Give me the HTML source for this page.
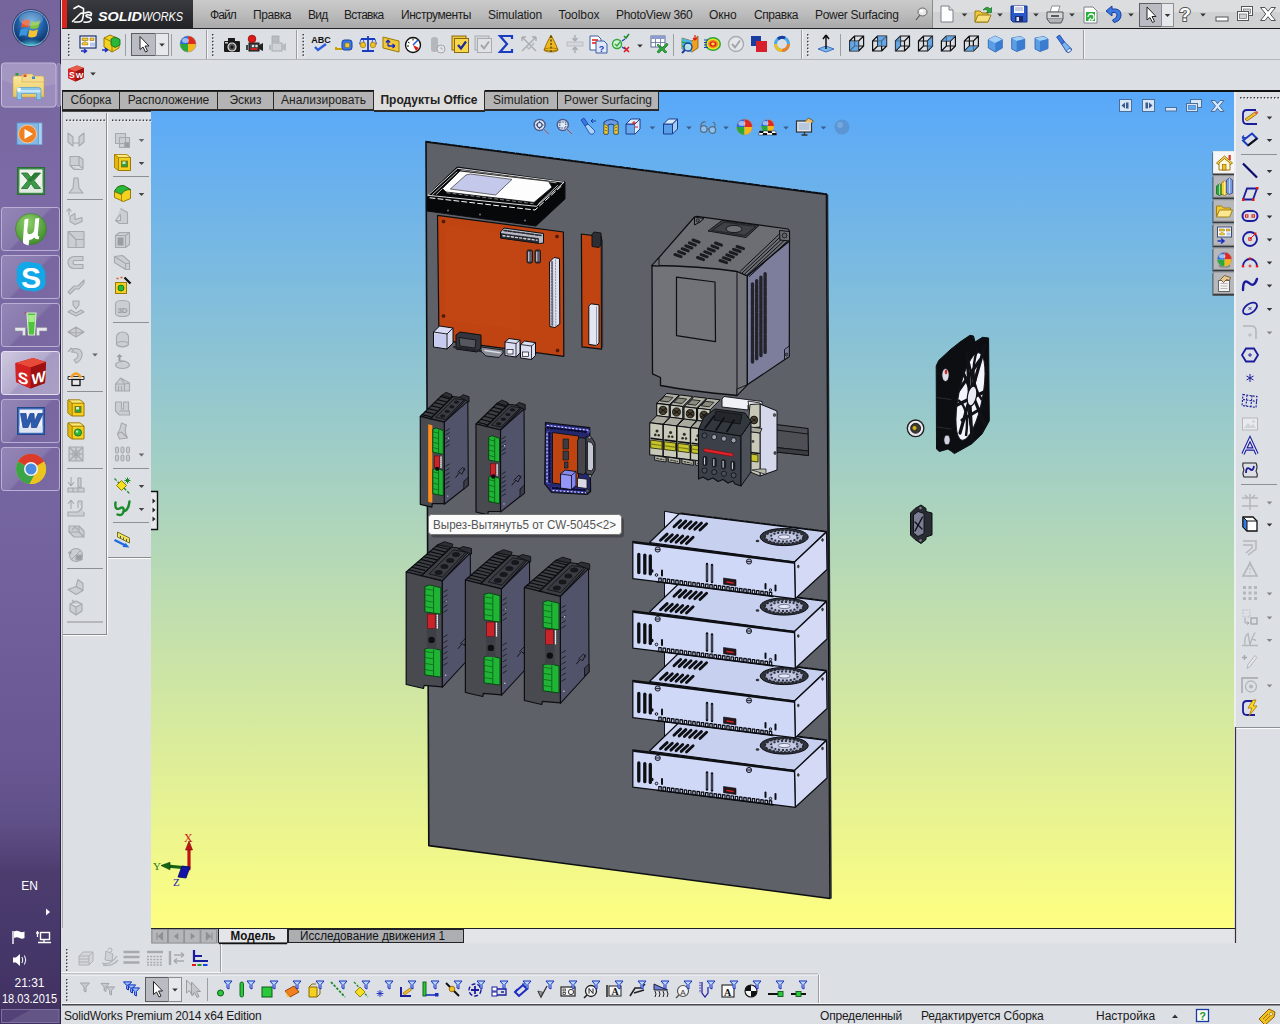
<!DOCTYPE html>
<html lang="ru">
<head>
<meta charset="utf-8">
<title>SolidWorks Premium 2014 x64 Edition</title>
<style>
*{box-sizing:border-box;margin:0;padding:0}
html,body{width:1280px;height:1024px;overflow:hidden;background:#dcdfe4;font-family:"Liberation Sans",sans-serif;font-size:12px;color:#1a1a1a}
.abs{position:absolute}
#taskbar{position:absolute;left:0;top:0;width:61px;height:1024px;background:linear-gradient(180deg,#75659c 0%,#7b6aa6 20%,#7666a2 45%,#705f9a 60%,#675691 75%,#5f4f87 80.5%,#4d3d6f 85%,#46376a 92%,#403160 100%);border-right:1px solid #2c2440}
.tbtn{position:absolute;left:1px;width:59px;height:44px;border:1px solid #b9aed3;border-radius:3px;background:linear-gradient(135deg,#9486b6 0%,#8778ac 48%,#7867a0 52%,#7a69a3 100%)}
.tbtn.act{background:linear-gradient(135deg,#cfc9de 0%,#b5acce 48%,#a59bc2 52%,#aaa0c6 100%);border-color:#e4dff0}
#menubar{position:absolute;left:62px;top:0;width:1218px;height:29px;background:linear-gradient(180deg,#cbcbcb 0%,#bcbcbc 50%,#a9a9a9 100%);border-bottom:1px solid #222}
#menubar span{position:absolute;top:8px;font-size:12px;color:#1c1c1c;white-space:nowrap}
#swlogo{position:absolute;left:62px;top:0;width:131px;height:28px;background:linear-gradient(180deg,#3a3b40 0%,#222327 100%)}
#swlogo i{position:absolute;left:0;top:0;width:5px;height:28px;background:#d8261c}
#tb1{position:absolute;left:62px;top:29px;width:1218px;height:31px;background:#dcdfe4;border-bottom:1px solid #b4b6ba}
#tb2{position:absolute;left:62px;top:60px;width:1218px;height:30px;background:#dcdfe4}
#tabs{position:absolute;left:62px;top:91px;height:22px;width:600px}
.tab{position:absolute;top:0;height:20px;background:#b4b4b4;border:1px solid #2a2a2a;border-bottom-width:2px;border-left:none;font-size:12px;text-align:center;line-height:17px;color:#222;white-space:nowrap}
.tab.act{height:22px;background:#dedede;font-weight:bold;border-top:1px solid #dedede;border-bottom:2px solid #2a2a2a;top:-1px;line-height:19px}
#viewport{position:absolute;left:151px;top:92px;width:1083px;height:837px;background:linear-gradient(180deg,#58a8fa 0%,#ffff80 100%)}
#leftp{position:absolute;left:62px;top:112px;width:89px;height:830px;background:#dcdfe4}
#rightp{position:absolute;left:1234px;top:92px;width:46px;height:852px;background:#dcdfe4;border-left:2px solid #eceef1}
#bottom{position:absolute;left:62px;top:928px;width:1218px;height:96px;background:#dcdfe4}
#status{position:absolute;left:62px;top:1006px;width:1218px;height:18px;background:#dcdfe4;font-size:12px}
#status span{position:absolute;top:3px;white-space:nowrap}
svg{position:absolute;overflow:visible}
.grip-h{position:absolute;height:2px;background-image:repeating-linear-gradient(90deg,#444 0,#444 1px,transparent 1px,transparent 3px)}
.grip-v{position:absolute;width:2px;background-image:repeating-linear-gradient(180deg,#444 0,#444 1px,transparent 1px,transparent 3px)}
.sep-v{position:absolute;width:1px;background:#9a9ca0}
.sep-h{position:absolute;height:1px;background:#8e9094}
.dd{position:absolute;width:0;height:0;border-left:3px solid transparent;border-right:3px solid transparent;border-top:4px solid #333}
</style>
</head>
<body>
<!-- ===== WINDOWS TASKBAR ===== -->
<div id="taskbar">
<svg style="left:0;top:0" width="61" height="1024" viewBox="0 0 61 1024">
<defs>
<radialGradient id="orb" cx="50%" cy="35%" r="65%"><stop offset="0" stop-color="#5fa8e0"/><stop offset="0.55" stop-color="#1f5fa8"/><stop offset="1" stop-color="#0b2c5c"/></radialGradient>
<radialGradient id="orbg" cx="50%" cy="100%" r="60%"><stop offset="0" stop-color="#5fe0f0" stop-opacity="0.9"/><stop offset="1" stop-color="#5fe0f0" stop-opacity="0"/></radialGradient>
<linearGradient id="fold" x1="0" y1="0" x2="0" y2="1"><stop offset="0" stop-color="#fbe9a0"/><stop offset="1" stop-color="#e9c860"/></linearGradient>
<radialGradient id="utg" cx="40%" cy="30%" r="75%"><stop offset="0" stop-color="#8ed06a"/><stop offset="1" stop-color="#3f8a2c"/></radialGradient>
</defs>
<!-- glass sheen -->

<!-- start orb -->
<circle cx="31" cy="28" r="19" fill="#1a2a4a" opacity="0.55"/>
<circle cx="31" cy="28" r="17.500" fill="url(#orb)" stroke="#9cc4e8" stroke-width="0.8"/>
<ellipse cx="31" cy="40" rx="13" ry="6" fill="url(#orbg)"/>
<path d="M22.500,21 Q26,18.500 30,20.500 L28.500,27.500 Q25,25.800 21,28 Z" fill="#e8562a"/>
<path d="M31.500,21 Q35.500,23 40,20.500 L38.500,27.500 Q34.500,30 30,28 Z" fill="#84c23c"/>
<path d="M20.500,29.500 Q24.500,27.500 28,29.300 L26.500,36 Q23,34.300 19,36.500 Z" fill="#3a96dc"/>
<path d="M29.500,29.800 Q33.500,31.800 38,29.300 L36.500,36 Q32.500,38.500 28,36.500 Z" fill="#f6c430"/>
<ellipse cx="31" cy="19" rx="12" ry="7" fill="#fff" opacity="0.22"/>
<!-- explorer button -->
<rect x="57" y="63.500" width="3.500" height="43" rx="2" fill="#8a7bb0" stroke="#b0a5cc" stroke-width="0.8"/>
<rect x="1.500" y="63" width="54.500" height="44" rx="3" fill="#9a8cbc" stroke="#c4bbdc" stroke-width="1"/>
<path d="M2,64 h53.500 v20 Q30,92 2,80 Z" fill="#fff" opacity="0.10"/>
<path d="M13,78 q0,-2 2,-2 h8 l2,2 h17 q2,0 2,2 v17 h-31 Z" fill="url(#fold)" stroke="#c8a040" stroke-width="0.6"/>
<path d="M22,76 q0,-2 2,-2 h8 l2,2 h8 q2,0 2,2 v4 h-22 Z" fill="#f4dc8c" stroke="#c8a040" stroke-width="0.5"/>
<rect x="15.500" y="73" width="3" height="2.500" fill="#2a9a3a"/><rect x="23.500" y="74.500" width="3" height="2.500" fill="#d8502a"/><rect x="32" y="76.500" width="3" height="2.500" fill="#3a8ad0"/>
<path d="M17,90 q0,-2.500 2.500,-2.500 h19 q2.500,0 2.500,2.500 v9.500 h-4.500 v-6 h-15 v6 h-4.500 Z" fill="#8cc8ec" stroke="#5a9ccc" stroke-width="0.7"/>
<path d="M17.500,90 h23 v2.500 h-23 Z" fill="#d2ecfa" opacity="0.8"/>
<circle cx="19" cy="89.500" r="2" fill="#fff" opacity="0.9"/>
<!-- media player -->
<rect x="19.500" y="123" width="22.500" height="21.500" fill="#a8d0f0" stroke="#6ea8dc" stroke-width="0.7"/>
<rect x="17" y="123" width="21.500" height="21.500" fill="#86b8e6" stroke="#5a94cc" stroke-width="0.7"/>
<circle cx="27.500" cy="134" r="9" fill="#f08020" stroke="#f8c89c" stroke-width="1"/>
<path d="M24.500,129 L33,134 L24.500,139 Z" fill="#fff"/>
<!-- excel -->
<rect x="17.500" y="167.500" width="27" height="27" fill="#3f8a4a" stroke="#2c6a36" stroke-width="1"/>
<rect x="19.500" y="169.500" width="23" height="23" fill="#eef4ec"/>
<rect x="19.500" y="186" width="23" height="6.500" fill="#dfe9dd"/>
<path d="M21.500,173 h6 l3.500,4.500 l3.500,-4.500 h6 l-6.500,7.500 l6.500,8 h-6 l-3.500,-5 l-3.500,5 h-6 l6.500,-8 Z" fill="#3c9a48" stroke="#246a2e" stroke-width="0.8"/>
<path d="M27,180.500 l8,-7.500 h5 l-9,9 Z" fill="#1f6a2c" opacity="0.6"/>
</svg>
<div class="tbtn" style="top:207px"></div>
<div class="tbtn" style="top:255px"></div>
<div class="tbtn" style="top:303px"></div>
<div class="tbtn act" style="top:351px"></div>
<div class="tbtn" style="top:399px"></div>
<div class="tbtn" style="top:447px"></div>
<svg style="left:0;top:0" width="61" height="1024" viewBox="0 0 61 1024">
<!-- utorrent -->
<circle cx="31" cy="229" r="15.500" fill="url(#utg)" stroke="#3a7a2a" stroke-width="0.6"/>
<path d="M24.500,219.500 l4,-1 l-1.200,12 q-0.300,4 3,3.600 q3.600,-0.500 4,-5 l1,-10.500 l4,-0.500 l-1.500,16.500 q-0.200,2 1.500,2 l-0.500,2.500 q-3.500,0.800 -4.500,-1.600 q-2,2.300 -5,2.500 l-0.800,5.500 l-4,-1.500 q-2,-0.800 -1.600,-3.500 Z" fill="#fff"/>
<!-- skype -->
<path d="M21,263 q7,-2.500 12,0 q7,-1 10,4.500 q3.500,5 2,11 q2,7 -3,10.500 q-6,4 -12.500,1.500 q-7,1 -10.500,-4 q-3.500,-5 -2,-10.500 q-2,-8 4,-13 Z" fill="#12a8e8"/>
<text x="31" y="288" text-anchor="middle" font-family="Liberation Sans, sans-serif" font-weight="bold" font-size="30" fill="#fff">S</text>
<!-- qip -->
<path d="M27,313 h9 l-1.500,22 h-6 Z" fill="#4ec43a" stroke="#d8e8d0" stroke-width="1.200"/>
<path d="M28,315 h7 l-0.500,7 h-6 Z" fill="#a4ec8c"/>
<path d="M24.500,313.500 l2,-1.500" stroke="#cc3a1a" stroke-width="1"/>
<path d="M15,327.500 h10.500 v8 h-3 v-4.500 h-7.500 Z M47,327.500 h-10.500 v8 h3 v-4.500 h7.500 Z" fill="#e4e6ea" stroke="#8a8c94" stroke-width="0.5"/>
<!-- solidworks cube -->
<path d="M15.500,363 L33,358 L46,362 L45,383 L30.500,388.500 L16,382 Z" fill="#b81818"/>
<path d="M15.500,363 L33,358 L46,362 L30.500,367.500 Z" fill="#e84a3a"/>
<path d="M30.500,367.500 L46,362 L45,383 L30.500,388.500 Z" fill="#9c1212"/>
<path d="M15.500,363 L30.500,367.500 L30.500,388.500 L16,382 Z" fill="#d42222"/>
<text x="23" y="384" text-anchor="middle" font-family="Liberation Sans, sans-serif" font-weight="bold" font-size="16" fill="#fff" transform="skewY(14) translate(0,-6)">S</text>
<text x="38.500" y="383" text-anchor="middle" font-family="Liberation Sans, sans-serif" font-weight="bold" font-size="15" fill="#fff" transform="skewY(-16) translate(0,11)">W</text>
<!-- word -->
<rect x="17.500" y="407.500" width="27" height="27" fill="#3c68b8" stroke="#24488c" stroke-width="1"/>
<rect x="19.500" y="409.500" width="23" height="23" fill="#eef2fa"/>
<rect x="19.500" y="426" width="23" height="6.500" fill="#dde5f4"/>
<path d="M20.500,413.500 h5.500 l1,8 l3,-8 h4 l0.500,8 l3.500,-8 h5 l-6.500,14 h-5 l-0.500,-7 l-3,7 h-5 Z" fill="#2c5cb0" stroke="#1c3c84" stroke-width="0.7"/>
<!-- chrome -->
<circle cx="31" cy="469" r="15" fill="#e8c020"/>
<path d="M31,469 L18,461.500 A15,15 0 0 1 44,461.500 Z" fill="#dc3a2a"/>
<path d="M18,461.500 A15,15 0 0 1 44,461.500 L31,461.500 Z" fill="#dc3a2a"/>
<path d="M31,469 L18,461.500 A15,15 0 0 0 29.500,484 L36,473 Z" fill="#3ca448"/>
<path d="M44,461.500 A15,15 0 0 1 29.500,484 L37.500,469 Z" fill="#ecc420"/>
<circle cx="31" cy="469" r="7" fill="#f4f4f4"/>
<circle cx="31" cy="469" r="5.500" fill="#4a8ae0"/>
<!-- tray -->
<text x="29.500" y="890" text-anchor="middle" font-family="Liberation Sans, sans-serif" font-size="12" fill="#fff">EN</text>
<path d="M46,908.500 l4,3.500 l-4,3.500 Z" fill="#fff"/>
<path d="M13,931 v13" stroke="#fff" stroke-width="1.400"/><path d="M14,931.500 q3,-1.500 5.500,0 q2.500,1.500 5,0 v6.500 q-2.500,1.500 -5,0 q-2.500,-1.500 -5.500,0 Z" fill="#fff"/>
<rect x="40.500" y="932.500" width="9" height="7" fill="none" stroke="#fff" stroke-width="1.400"/><path d="M38,942.500 h13 M44,940 v2.500 M37.500,931 v6 M36,933 h3" stroke="#fff" stroke-width="1.300"/>
<path d="M13,957.500 h3 l4,-3.500 v12 l-4,-3.500 h-3 Z" fill="#fff"/><path d="M22,957 q1.500,3 0,6 M24.500,955.500 q2.500,4.500 0,9" stroke="#fff" stroke-width="1" fill="none"/>
<text x="29.500" y="987" text-anchor="middle" font-family="Liberation Sans, sans-serif" font-size="12" fill="#fff">21:31</text>
<text x="29.500" y="1003" text-anchor="middle" font-family="Liberation Sans, sans-serif" font-size="12" fill="#fff" textLength="55" lengthAdjust="spacingAndGlyphs">18.03.2015</text>
<rect x="1.500" y="1009.500" width="57.500" height="13" fill="#524278" stroke="#8a7cae" stroke-width="0.800"/>
<path d="M30,1010 h28.500 v12 h-50 Z" fill="#fff" opacity="0.10"/>
</svg>

</div>

<!-- ===== MENU BAR ===== -->
<div id="menubar">
<span style="left:148px;letter-spacing:-0.88px">Файл</span>
<span style="left:191px;letter-spacing:-0.42px">Правка</span>
<span style="left:246px;letter-spacing:-0.74px">Вид</span>
<span style="left:282px;letter-spacing:-0.73px">Вставка</span>
<span style="left:339px;letter-spacing:-0.44px">Инструменты</span>
<span style="left:426px;letter-spacing:-0.2px">Simulation</span>
<span style="left:496.5px;letter-spacing:-0.05px">Toolbox</span>
<span style="left:554px;letter-spacing:-0.31px">PhotoView 360</span>
<span style="left:647px;letter-spacing:-0.1px">Окно</span>
<span style="left:692px;letter-spacing:-0.44px">Справка</span>
<span style="left:753px;letter-spacing:-0.3px">Power Surfacing</span>
</div>
<div id="swlogo"><i></i>
<svg style="left:0;top:0" width="131" height="28" viewBox="62 0 131 28">
<path d="M74,8.500 l4.500,-2.500 l5,2.500 M83.500,8.500 v5 M72.500,21.500 l8,-8 q3,-1 3,1 l-1,5 q-1,2.500 -4,2.500 l-4,0 M85,13 q5,-2 6.500,0.500 l-0.500,2 q-4,-1.500 -5,0 q0,1.500 3,2 q3,1 2,3 q-2,2.500 -7,1.500" fill="none" stroke="#fff" stroke-width="1.600" stroke-linejoin="round" stroke-linecap="round"/>
<text x="98" y="21" font-family="Liberation Sans, sans-serif" font-style="italic" font-weight="bold" font-size="13.500" fill="#fff" textLength="44" lengthAdjust="spacingAndGlyphs">SOLID</text>
<text x="142" y="21" font-family="Liberation Sans, sans-serif" font-style="italic" font-size="13.500" fill="#fff" textLength="41" lengthAdjust="spacingAndGlyphs">WORKS</text>
</svg>
</div>

<div id="tb1">
<!--TB1-->
</div>
<div id="tb2">
<svg style="left:-62px;top:-60px" width="1280" height="92" viewBox="0 0 1280 92">
<rect x="932" y="0" width="348" height="28" fill="#d0d1d3"/><rect x="932" y="0" width="348" height="12" fill="#dcdddf"/><path d="M932.5,0.0 V28.0" stroke="#8a8a8a" stroke-width="1"/><g transform="translate(921.0,14.0)" ><path d="M-5,6 L-1,1" stroke="#555" stroke-width="1.200"/><ellipse cx="1.500" cy="-2" rx="4.500" ry="4" fill="#e8e8e8" stroke="#666" stroke-width="1"/><ellipse cx="0.500" cy="-3" rx="2" ry="1.500" fill="#fff"/></g><g transform="translate(947.0,14.0)" ><path d="M-6,-8 H2 L6,-4 V8 H-6 Z" fill="#fdfdfd" stroke="#7a8088" stroke-width="1"/><path d="M2,-8 V-4 H6" fill="#dfe3ea" stroke="#7a8088" stroke-width="1"/></g><path d="M961.7,13.4 h5.600 l-2.800,3.200 Z" fill="#333"/><g transform="translate(983.0,15.0)" ><path d="M-8,-4 h5 l2,2 h6 v9 h-13 Z" fill="#f0c83a" stroke="#9a7a10" stroke-width="1"/><path d="M-8,7 l3,-7 h13 l-3,7 Z" fill="#f8e080" stroke="#9a7a10" stroke-width="1"/><path d="M0,-5 q4,-5 7,-1 l1.500,-1.500 v5 h-5 l1.500,-1.500 q-2,-2.500 -5,-1 Z" fill="#2aa83a" stroke="#0a5a1a" stroke-width="0.600"/></g><path d="M997.2,13.4 h5.600 l-2.800,3.200 Z" fill="#333"/><g transform="translate(1019.0,14.0)" ><path d="M-8,-8 H8 V8 H-6 L-8,6 Z" fill="#2a58c8" stroke="#12308c" stroke-width="1"/><rect x="-5" y="-8" width="10" height="7" fill="#f4f6fa"/><path d="M-4,-6 h8 M-4,-4 h8" stroke="#8a94b0" stroke-width="0.800"/><rect x="-4" y="2" width="8" height="6" fill="#1a2c6c"/><rect x="-2.500" y="3" width="2.500" height="4" fill="#dfe4f0"/></g><path d="M1033.2,13.4 h5.600 l-2.800,3.200 Z" fill="#333"/><g transform="translate(1055.0,15.0)" ><path d="M-5,-3 L-3,-9 H5 L3,-3 Z" fill="#fff" stroke="#777" stroke-width="0.800"/><path d="M-8,-3 H8 V4 H-8 Z" fill="#d4d6da" stroke="#555" stroke-width="1"/><path d="M-8,4 L-5,8 H6 L8,4" fill="#b0b3b8" stroke="#555" stroke-width="1"/><path d="M-4,1 h8" stroke="#333" stroke-width="1.500"/></g><path d="M1069.2,13.4 h5.600 l-2.800,3.200 Z" fill="#333"/><g transform="translate(1090.0,15.0)" ><path d="M-6,-8 H3 L7,-4 V8 H-6 Z" fill="#fff" stroke="#7a8088" stroke-width="1"/><rect x="-4" y="-3" width="9" height="9" fill="#2ab03a"/><path d="M-2,2 a3,3 0 1 1 3,3 M1,7 l-2,-2 l2,-2" fill="none" stroke="#fff" stroke-width="1.300"/></g><g transform="translate(1114.0,14.0)" ><path d="M-8,-3 L-2,-8 V-5 Q7,-6 7,1 Q7,7 0,8.500 L-1.500,6 Q3,4.500 3,1 Q3,-2 -2,-1.500 V2 Z" fill="#3a7ae0" stroke="#1a3ca0" stroke-width="1" stroke-linejoin="round"/></g><path d="M1128.2,13.4 h5.600 l-2.800,3.200 Z" fill="#333"/><rect x="1139.5" y="3.5" width="22.0" height="23.0" fill="#b9bcc2" stroke="#5c5e62" stroke-width="1"/><rect x="1161.5" y="3.5" width="12.0" height="23.0" fill="#e6e8ec" stroke="#8c8e92" stroke-width="1"/><g transform="translate(1150.5,15.0)" ><path d="M-3.500,-8 L-3.500,5 L-0.500,2.500 L2,7.500 L4,6.500 L1.500,1.500 L5.500,1.500 Z" fill="#fff" stroke="#222" stroke-width="1" stroke-linejoin="round"/></g><path d="M1164.7,13.9 h5.600 l-2.800,3.200 Z" fill="#333"/><text x="1185" y="21" text-anchor="middle" font-family="Liberation Sans, sans-serif" font-size="19" font-weight="bold" fill="#fff" stroke="#555" stroke-width="2" paint-order="stroke">?</text><path d="M1200.2,13.4 h5.600 l-2.800,3.200 Z" fill="#333"/><rect x="1216" y="17" width="12" height="4" fill="#fff" stroke="#555" stroke-width="1"/><rect x="1241.500" y="6.500" width="11" height="9" fill="#fff" stroke="#555" stroke-width="1"/><rect x="1243.500" y="9" width="7" height="4.500" fill="#d0d1d3" stroke="#555" stroke-width="0.600"/><rect x="1237.500" y="11.500" width="11" height="9" fill="#fff" stroke="#555" stroke-width="1"/><rect x="1239.500" y="14" width="7" height="4.500" fill="#d0d1d3" stroke="#555" stroke-width="0.600"/><path d="M1260.500,7.500 h4.500 l3,3.800 l3,-3.800 h4.500 l-5.200,6.500 l5.200,6.500 h-4.500 l-3,-3.800 l-3,3.800 h-4.500 l5.200,-6.500 Z" fill="#fff" stroke="#555" stroke-width="1" stroke-linejoin="round"/><rect x="68.0" y="34.0" width="1.500" height="1.500" fill="#3a3a3a"/><rect x="69.2" y="35.2" width="1" height="1" fill="#fff"/><rect x="68.0" y="37.4" width="1.500" height="1.500" fill="#3a3a3a"/><rect x="69.2" y="38.6" width="1" height="1" fill="#fff"/><rect x="68.0" y="40.8" width="1.500" height="1.500" fill="#3a3a3a"/><rect x="69.2" y="42.0" width="1" height="1" fill="#fff"/><rect x="68.0" y="44.2" width="1.500" height="1.500" fill="#3a3a3a"/><rect x="69.2" y="45.4" width="1" height="1" fill="#fff"/><rect x="68.0" y="47.6" width="1.500" height="1.500" fill="#3a3a3a"/><rect x="69.2" y="48.8" width="1" height="1" fill="#fff"/><rect x="68.0" y="51.0" width="1.500" height="1.500" fill="#3a3a3a"/><rect x="69.2" y="52.2" width="1" height="1" fill="#fff"/><rect x="68.0" y="54.4" width="1.500" height="1.500" fill="#3a3a3a"/><rect x="69.2" y="55.6" width="1" height="1" fill="#fff"/><g transform="translate(88.0,44.0)" ><rect x="-8" y="-8" width="16" height="12" fill="#fff" stroke="#1a2c6c" stroke-width="1.200"/><rect x="-6" y="-6" width="6" height="2.500" fill="#f0c83a" stroke="#8a6a10" stroke-width="0.600"/><rect x="2" y="-6" width="4" height="2.500" fill="#f0c83a" stroke="#8a6a10" stroke-width="0.600"/><path d="M-6,1 h6 v-2 l-3,-1.500 l-3,1.500 Z" fill="#f0c83a" stroke="#8a6a10" stroke-width="0.500"/><rect x="2" y="-1.500" width="5" height="4" fill="#b8c8e8"/><path d="M-7,7 h5 M-4,5 l2.500,2 l-2.500,2" stroke="#1a2cc0" stroke-width="1.400" fill="none"/></g><g transform="translate(111.0,44.0)" ><path d="M-7,-6 L-1,-9 L8,-5 V4 L1,8 L-7,3 Z" fill="#f4d020" stroke="#9a7a00" stroke-width="1"/><path d="M-7,-6 L1,-2 L8,-5 M1,-2 V8" fill="none" stroke="#9a7a00" stroke-width="1"/><path d="M0,-5 L4,-7 L9,-4.500 V1 L4,3.500 L0,1 Z" fill="#2ab83a" stroke="#0a6a1a" stroke-width="0.800"/><path d="M-9,6 h5 M-6,4 l2.500,2 l-2.500,2" stroke="#1a2cc0" stroke-width="1.400" fill="none"/></g><path d="M125.5,34.0 V56.0" stroke="#9c9ea2" stroke-width="1"/><rect x="131.5" y="33.5" width="24.0" height="22.0" fill="#b9bcc2" stroke="#5c5e62" stroke-width="1"/><rect x="155.5" y="33.5" width="13.0" height="22.0" fill="#e6e8ec" stroke="#8c8e92" stroke-width="1"/><g transform="translate(143.5,44.5)" ><path d="M-3.500,-8 L-3.500,5 L-0.500,2.500 L2,7.500 L4,6.500 L1.500,1.500 L5.500,1.500 Z" fill="#fff" stroke="#222" stroke-width="1" stroke-linejoin="round"/></g><path d="M159.2,43.4 h5.600 l-2.800,3.200 Z" fill="#333"/><path d="M171.5,34.0 V56.0" stroke="#9c9ea2" stroke-width="1"/><g transform="translate(188.0,44.0)" ><circle r="8" fill="#e8e8e8"/><path d="M0,0 L0,-8 A8,8 0 0 1 8,0 Z" fill="#e02a20"/><path d="M0,0 L8,0 A8,8 0 0 1 0,8 Z" fill="#f4b81c"/><path d="M0,0 L0,8 A8,8 0 0 1 -8,0 Z" fill="#2aa83a"/><path d="M0,0 L-8,0 A8,8 0 0 1 0,-8 Z" fill="#2a6ae0"/><circle r="8" fill="none" stroke="#888" stroke-width="0.500"/><ellipse cx="-2.500" cy="-3.500" rx="3.500" ry="2.500" fill="#fff" opacity="0.550"/></g><path d="M206.5,30.0 V59.0" stroke="#9a9ca0" stroke-width="1"/><path d="M207.5,30.0 V59.0" stroke="#f4f4f6" stroke-width="1"/><rect x="212.0" y="34.0" width="1.500" height="1.500" fill="#3a3a3a"/><rect x="213.2" y="35.2" width="1" height="1" fill="#fff"/><rect x="212.0" y="37.4" width="1.500" height="1.500" fill="#3a3a3a"/><rect x="213.2" y="38.6" width="1" height="1" fill="#fff"/><rect x="212.0" y="40.8" width="1.500" height="1.500" fill="#3a3a3a"/><rect x="213.2" y="42.0" width="1" height="1" fill="#fff"/><rect x="212.0" y="44.2" width="1.500" height="1.500" fill="#3a3a3a"/><rect x="213.2" y="45.4" width="1" height="1" fill="#fff"/><rect x="212.0" y="47.6" width="1.500" height="1.500" fill="#3a3a3a"/><rect x="213.2" y="48.8" width="1" height="1" fill="#fff"/><rect x="212.0" y="51.0" width="1.500" height="1.500" fill="#3a3a3a"/><rect x="213.2" y="52.2" width="1" height="1" fill="#fff"/><rect x="212.0" y="54.4" width="1.500" height="1.500" fill="#3a3a3a"/><rect x="213.2" y="55.6" width="1" height="1" fill="#fff"/><g transform="translate(232.0,45.0)" ><rect x="-8" y="-4" width="16" height="11" rx="1" fill="#1a1a1a"/><rect x="-4" y="-7" width="7" height="3" fill="#1a1a1a"/><circle cx="0" cy="2" r="4" fill="#555" stroke="#ddd" stroke-width="1.200"/><circle cx="0" cy="2" r="1.500" fill="#111"/><rect x="-7" y="-3" width="3" height="1.500" fill="#ccc"/></g><g transform="translate(255.0,45.0)" ><rect x="-6" y="-2" width="10" height="8" fill="#444" stroke="#111" stroke-width="1"/><path d="M4,0 l4,-2 v8 l-4,-2 Z" fill="#222"/><circle cx="-3" cy="-6" r="3.800" fill="#e01818" stroke="#8a0a0a" stroke-width="0.800"/><rect x="-4" y="3" width="6" height="2" fill="#e01818"/><path d="M-8,0 v5" stroke="#111" stroke-width="1.500"/><circle cx="-2" cy="1" r="1.300" fill="#ddd"/><circle cx="1.500" cy="1" r="1.300" fill="#ddd"/></g><g transform="translate(278.0,45.0)" ><rect x="-6" y="-2" width="10" height="8" fill="#cfd2d6" stroke="#a8abb0" stroke-width="1"/><path d="M4,0 l4,-2 v8 l-4,-2 Z" fill="#b8bbc0"/><rect x="-6" y="-9" width="7" height="6" fill="#b8bbc0" stroke="#a8abb0" stroke-width="0.800"/><path d="M-8,0 v5" stroke="#a8abb0" stroke-width="1.500"/></g><path d="M296.5,30.0 V59.0" stroke="#9a9ca0" stroke-width="1"/><path d="M297.5,30.0 V59.0" stroke="#f4f4f6" stroke-width="1"/><rect x="302.5" y="34.0" width="1.500" height="1.500" fill="#3a3a3a"/><rect x="303.7" y="35.2" width="1" height="1" fill="#fff"/><rect x="302.5" y="37.4" width="1.500" height="1.500" fill="#3a3a3a"/><rect x="303.7" y="38.6" width="1" height="1" fill="#fff"/><rect x="302.5" y="40.8" width="1.500" height="1.500" fill="#3a3a3a"/><rect x="303.7" y="42.0" width="1" height="1" fill="#fff"/><rect x="302.5" y="44.2" width="1.500" height="1.500" fill="#3a3a3a"/><rect x="303.7" y="45.4" width="1" height="1" fill="#fff"/><rect x="302.5" y="47.6" width="1.500" height="1.500" fill="#3a3a3a"/><rect x="303.7" y="48.8" width="1" height="1" fill="#fff"/><rect x="302.5" y="51.0" width="1.500" height="1.500" fill="#3a3a3a"/><rect x="303.7" y="52.2" width="1" height="1" fill="#fff"/><rect x="302.5" y="54.4" width="1.500" height="1.500" fill="#3a3a3a"/><rect x="303.7" y="55.6" width="1" height="1" fill="#fff"/><g transform="translate(321.0,44.0)" ><text x="0" y="-1" text-anchor="middle" font-family="Liberation Sans, sans-serif" font-size="9" font-weight="bold" fill="#111">ABC</text><path d="M-6,3 l3,3 l8,-6" fill="none" stroke="#2a5ce0" stroke-width="2.400"/></g><g transform="translate(345.0,45.0)" ><rect x="-3" y="-5" width="10" height="10" rx="2.500" fill="#3a7ae0" stroke="#1a3ca0" stroke-width="1"/><rect x="0" y="-2" width="4.500" height="4.500" rx="1" fill="#f0c83a" stroke="#8a6a10" stroke-width="0.600"/><path d="M-3,4 h-6 v-2" stroke="#c8a000" stroke-width="2" fill="none"/></g><g transform="translate(368.0,44.0)" ><path d="M0,-8 V7 M-7,-5 H7 M-6,7 H6" stroke="#1a3cc0" stroke-width="1.800" fill="none"/><path d="M-7,-5 l-1.500,5 h5 l-1.500,-5 M5,-5 l-1.500,5 h5 l-1.500,-5" fill="none" stroke="#1a3cc0" stroke-width="0.800"/><circle cx="-5" cy="1" r="2.800" fill="#f0c020" stroke="#8a6a10" stroke-width="0.600"/><circle cx="5" cy="1" r="2.800" fill="#f0c020" stroke="#8a6a10" stroke-width="0.600"/></g><g transform="translate(391.0,44.0)" ><path d="M-8,-7 L8,-3 V8 L-8,4 Z" fill="#f0c83a" stroke="#9a7a00" stroke-width="1"/><path d="M-3,2 V-4 M-3,-4 l-2,2.500 M-3,-4 l2,2.500 M-3,2 H4 M4,2 l-2.500,-2 M4,2 l-2.500,2" stroke="#1a2cc0" stroke-width="1.300" fill="none"/></g><g transform="translate(413.0,45.0)" ><circle r="7.500" fill="#fff" stroke="#111" stroke-width="1.400"/><path d="M0,0 L5,-5" stroke="#2a5ce0" stroke-width="1.600"/><path d="M0,0 L6,3 L3,6 Z" fill="#e01818"/><path d="M-5,-3 l1.500,1 M0,-6.500 v2 M-6,1 h2" stroke="#111" stroke-width="1"/></g><g transform="translate(437.0,45.0)" ><rect x="-6" y="-8" width="7" height="15" rx="3" fill="#b4b7bc"/><circle cx="4" cy="4" r="4" fill="#e4e6ea" stroke="#a2a5aa" stroke-width="1"/><path d="M4,2 v2 h2" stroke="#a2a5aa" stroke-width="0.800" fill="none"/></g><g transform="translate(460.0,44.0)" ><rect x="-8" y="-8" width="14" height="14" fill="#f0c83a" stroke="#8a6a10" stroke-width="1"/><rect x="-5.500" y="-5.500" width="14" height="14" fill="#f8d84a" stroke="#8a6a10" stroke-width="1"/><path d="M-2,1 l3,3.500 l5,-7" fill="none" stroke="#1a2c9c" stroke-width="2.200"/></g><g transform="translate(483.0,44.0)" ><rect x="-8" y="-8" width="14" height="14" fill="#d4d6da" stroke="#a8abb0" stroke-width="1"/><rect x="-5.500" y="-5.500" width="14" height="14" fill="#e0e2e6" stroke="#a8abb0" stroke-width="1"/><path d="M-2,1 l3,3.500 l5,-7" fill="none" stroke="#a2a5aa" stroke-width="2"/></g><g transform="translate(506.0,44.0)" ><path d="M6,-5 V-8 H-6 L1,0 L-6,8 H6 V5" fill="none" stroke="#1a3cc0" stroke-width="2.200" stroke-linejoin="miter"/></g><g transform="translate(529.0,44.0)" ><path d="M-7,-7 L7,7 M7,-7 L-7,7 M-7,-7 h4 M-7,-7 v4 M7,-7 h-4 M7,-7 v4" stroke="#a8abb0" stroke-width="1.400" fill="none"/><path d="M-3,2 l3,3 l5,-6" stroke="#b4b7bc" stroke-width="1.500" fill="none"/></g><g transform="translate(551.0,44.0)" ><path d="M0,-9 Q5,0 7,6 Q0,9 -7,6 Q-5,0 0,-9 Z" fill="#f0b820" stroke="#9a7000" stroke-width="1"/><path d="M0,-8 V8" stroke="#111" stroke-width="1" stroke-dasharray="2 1.500"/><ellipse cx="0" cy="6" rx="7" ry="2" fill="none" stroke="#9a7000" stroke-width="0.800"/></g><g transform="translate(575.0,44.0)" ><rect x="-8" y="-2" width="16" height="4" fill="#d4d6da" stroke="#b4b7bc" stroke-width="0.800"/><path d="M0,-9 V-3 M0,-3 l-2.500,-3 M0,-3 l2.500,-3 M0,9 V3 M0,3 l-2.500,3 M0,3 l2.500,3" stroke="#a8abb0" stroke-width="1.400" fill="none"/></g><g transform="translate(598.0,44.0)" ><path d="M-8,-8 H0 L3,-5 V6 H-8 Z" fill="#fff" stroke="#3a5ca0" stroke-width="1"/><path d="M-2,-3 H6 L9,0 V9 H-2 Z" fill="#dfe8f8" stroke="#3a5ca0" stroke-width="1"/><path d="M-6,-4 h6 M-6,-1 h4" stroke="#e01818" stroke-width="1.600"/><text x="3.500" y="7.500" text-anchor="middle" font-family="Liberation Sans, sans-serif" font-size="9" font-weight="bold" fill="#1a3cc0">?</text></g><g transform="translate(621.0,44.0)" ><circle cx="-4" cy="0" r="4.500" fill="#d8f0d8" stroke="#2aa83a" stroke-width="1.400"/><path d="M-6,0 l2,2 l3,-4" stroke="#2aa83a" stroke-width="1.400" fill="none"/><path d="M3,-8 l2,2 l3,-4" stroke="#1a8a2a" stroke-width="1.600" fill="none"/><path d="M3,3 l5,5 M8,3 l-5,5" stroke="#e01818" stroke-width="1.600"/><path d="M1,-3 l3,-2 M1,3 l3,2" stroke="#1a3cc0" stroke-width="1.200"/></g><path d="M637.2,44.4 h5.600 l-2.800,3.200 Z" fill="#333"/><g transform="translate(659.0,44.0)" ><rect x="-8" y="-8" width="14" height="11" fill="#fff" stroke="#5a6c9c" stroke-width="1"/><rect x="-8" y="-8" width="14" height="3" fill="#8a9cd0"/><path d="M-8,-1.500 h14 M-3.500,-5 v8 M1.500,-5 v8" stroke="#5a6c9c" stroke-width="0.800"/><path d="M-1,0 l4,4 l5,-5 l1,2 l-4,4 l3,3 l-2,1 l-3,-3 l-3,3 l-2,-1 l3,-4 l-3,-3 Z" fill="#2aa83a" stroke="#0a6a1a" stroke-width="0.600"/></g><path d="M673.5,34.0 V56.0" stroke="#9c9ea2" stroke-width="1"/><g transform="translate(690.0,44.0)" ><path d="M-8,-6 L2,-3 L8,-8 V4 L2,8 L-8,5 Z" fill="#f0a020" stroke="#8a5a10" stroke-width="0.800"/><path d="M-8,-6 L2,-3 V8 L-8,5 Z" fill="#48b8e8"/><path d="M-8,-2 L2,1 M-8,2 L2,5" stroke="#2aa83a" stroke-width="1.500"/><circle cx="-2" cy="3" r="4" fill="#e8f4fc" fill-opacity="0.700" stroke="#1a3ca0" stroke-width="1.300"/><path d="M-5,6 l-3,3" stroke="#1a3ca0" stroke-width="2"/><path d="M5,-9 v5 M5,-4 l-2,-2 M5,-4 l2,-2" stroke="#e01818" stroke-width="1.200" fill="none"/></g><g transform="translate(713.0,44.0)" ><ellipse rx="8" ry="7" fill="#2aa83a"/><ellipse rx="6.500" ry="5.500" fill="#f0e020"/><ellipse rx="5" ry="4" fill="#f08020"/><ellipse rx="3.300" ry="2.600" fill="#e01818"/><ellipse rx="1.800" ry="1.400" fill="#f8e040"/><path d="M-9,-4 h4 M-9,-1.500 h3 M-9,1 h3 M-9,3.500 h4" stroke="#1a3cc0" stroke-width="1"/></g><g transform="translate(736.0,44.0)" ><circle r="7.500" fill="#e4e6ea" stroke="#a8abb0" stroke-width="1.400"/><path d="M-4,0 l3,3.500 l5,-7" fill="none" stroke="#a2a5aa" stroke-width="2"/></g><g transform="translate(759.0,44.0)" ><rect x="-8" y="-8" width="10" height="10" fill="#1a3ca0"/><rect x="-3" y="-3" width="11" height="11" fill="#d8202a"/></g><g transform="translate(782.0,44.0)" ><circle r="6.500" fill="none" stroke="#48a8e8" stroke-width="3"/><path d="M-6.500,0 A6.500,6.500 0 0 0 0,6.500" fill="none" stroke="#f0c020" stroke-width="3"/><path d="M0,6.500 A6.500,6.500 0 0 0 6.500,0" fill="none" stroke="#f08020" stroke-width="3"/><path d="M-4,-5 A6.500,6.500 0 0 1 3,-6" fill="none" stroke="#1a3ca0" stroke-width="3"/></g><path d="M801.5,30.0 V59.0" stroke="#9a9ca0" stroke-width="1"/><path d="M802.5,30.0 V59.0" stroke="#f4f4f6" stroke-width="1"/><rect x="807.0" y="34.0" width="1.500" height="1.500" fill="#3a3a3a"/><rect x="808.2" y="35.2" width="1" height="1" fill="#fff"/><rect x="807.0" y="37.4" width="1.500" height="1.500" fill="#3a3a3a"/><rect x="808.2" y="38.6" width="1" height="1" fill="#fff"/><rect x="807.0" y="40.8" width="1.500" height="1.500" fill="#3a3a3a"/><rect x="808.2" y="42.0" width="1" height="1" fill="#fff"/><rect x="807.0" y="44.2" width="1.500" height="1.500" fill="#3a3a3a"/><rect x="808.2" y="45.4" width="1" height="1" fill="#fff"/><rect x="807.0" y="47.6" width="1.500" height="1.500" fill="#3a3a3a"/><rect x="808.2" y="48.8" width="1" height="1" fill="#fff"/><rect x="807.0" y="51.0" width="1.500" height="1.500" fill="#3a3a3a"/><rect x="808.2" y="52.2" width="1" height="1" fill="#fff"/><rect x="807.0" y="54.4" width="1.500" height="1.500" fill="#3a3a3a"/><rect x="808.2" y="55.6" width="1" height="1" fill="#fff"/><g transform="translate(826.0,44.0)" ><path d="M-8,5 L0,2 L8,5 L0,8 Z" fill="#7ab8f0" stroke="#2a5cb0" stroke-width="0.800"/><path d="M0,5 V-8 M0,-9 l-3,4 M0,-9 l3,4" stroke="#111" stroke-width="1.500" fill="none"/></g><path d="M840.5,34.0 V56.0" stroke="#9c9ea2" stroke-width="1"/><g transform="translate(856.6,44.0)" ><path d="M-7,-3 h9 v10 h-9 Z" fill="#4a96e0"/><path d="M-7,-3 h9 v10 h-9 Z M-2,-8 h9 v10 h-9 Z M-7,-3 l5,-5 M2,-3 l5,-5 M-7,7 l5,-5 M2,7 l5,-5" fill="none" stroke="#111" stroke-width="1.200"/><path d="M-7,-3 h9 v10 h-9 Z" fill="#7ab8f0" opacity="0.55"/></g><g transform="translate(879.6,44.0)" ><path d="M-2,-8 h9 v10 h-9 Z" fill="#4a96e0"/><path d="M-7,-3 h9 v10 h-9 Z M-2,-8 h9 v10 h-9 Z M-7,-3 l5,-5 M2,-3 l5,-5 M-7,7 l5,-5 M2,7 l5,-5" fill="none" stroke="#111" stroke-width="1.200"/><path d="M-2,-8 h9 v10 h-9 Z" fill="#7ab8f0" opacity="0.55"/></g><g transform="translate(902.5,44.0)" ><path d="M-7,-3 l5,-5 v10 l-5,5 Z" fill="#4a96e0"/><path d="M-7,-3 h9 v10 h-9 Z M-2,-8 h9 v10 h-9 Z M-7,-3 l5,-5 M2,-3 l5,-5 M-7,7 l5,-5 M2,7 l5,-5" fill="none" stroke="#111" stroke-width="1.200"/><path d="M-7,-3 l5,-5 v10 l-5,5 Z" fill="#7ab8f0" opacity="0.55"/></g><g transform="translate(925.5,44.0)" ><path d="M2,-3 l5,-5 v10 l-5,5 Z" fill="#4a96e0"/><path d="M-7,-3 h9 v10 h-9 Z M-2,-8 h9 v10 h-9 Z M-7,-3 l5,-5 M2,-3 l5,-5 M-7,7 l5,-5 M2,7 l5,-5" fill="none" stroke="#111" stroke-width="1.200"/><path d="M2,-3 l5,-5 v10 l-5,5 Z" fill="#7ab8f0" opacity="0.55"/></g><g transform="translate(948.4,44.0)" ><path d="M-7,-3 l5,-5 h9 l-5,5 Z" fill="#4a96e0"/><path d="M-7,-3 h9 v10 h-9 Z M-2,-8 h9 v10 h-9 Z M-7,-3 l5,-5 M2,-3 l5,-5 M-7,7 l5,-5 M2,7 l5,-5" fill="none" stroke="#111" stroke-width="1.200"/><path d="M-7,-3 l5,-5 h9 l-5,5 Z" fill="#7ab8f0" opacity="0.55"/></g><g transform="translate(971.4,44.0)" ><path d="M-7,7 l5,-5 h9 l-5,5 Z" fill="#4a96e0"/><path d="M-7,-3 h9 v10 h-9 Z M-2,-8 h9 v10 h-9 Z M-7,-3 l5,-5 M2,-3 l5,-5 M-7,7 l5,-5 M2,7 l5,-5" fill="none" stroke="#111" stroke-width="1.200"/><path d="M-7,7 l5,-5 h9 l-5,5 Z" fill="#7ab8f0" opacity="0.55"/></g><g transform="translate(995.3,44.0)" ><path d="M0,-8 L7,-4.500 V4 L0,8 L-7,4 V-4.500 Z" fill="#5a9ee4" stroke="#2a5cb0" stroke-width="0.800"/><path d="M0,-8 L7,-4.500 L0,-1 L-7,-4.500 Z" fill="#a4d0f8"/><path d="M0,-1 V8 L7,4 V-4.500 Z" fill="#3a7cd0"/></g><g transform="translate(1017.7,44.0)" ><path d="M-6,-6 L3,-7.500 L7,-5 V4.500 L-1,7.500 L-6,5 Z" fill="#5a9ee4" stroke="#2a5cb0" stroke-width="0.800"/><path d="M-6,-6 L3,-7.500 L7,-5 L-1,-3 Z" fill="#a4d0f8"/><path d="M-1,-3 L7,-5 V4.500 L-1,7.500 Z" fill="#3a7cd0"/></g><g transform="translate(1041.0,44.0)" ><path d="M-6,-6 L3,-7.500 L7,-5 V4.500 L-1,7.500 L-6,5 Z" fill="#5a9ee4" stroke="#2a5cb0" stroke-width="0.800"/><path d="M-6,-6 L3,-7.500 L7,-5 L-1,-3 Z" fill="#a4d0f8"/><path d="M-1,-3 L7,-5 V4.500 L-1,7.500 Z" fill="#3a7cd0"/></g><g transform="translate(1063.6,44.0)" ><path d="M-7,-7 L-4,-9 L1,-2 L-2,0 Z" fill="#3a7ae0" stroke="#1a3ca0" stroke-width="0.800"/><path d="M-2,0 L1,-2 L8,5 Q7,9 3,8 Z" fill="#7ab8f0" stroke="#1a3ca0" stroke-width="0.800"/><ellipse cx="5.500" cy="6.500" rx="2.500" ry="1.600" transform="rotate(-35 5.500 6.500)" fill="#d8ecfc" stroke="#1a3ca0" stroke-width="0.600"/></g><path d="M1083.5,30.0 V59.0" stroke="#9a9ca0" stroke-width="1"/><path d="M1084.5,30.0 V59.0" stroke="#f4f4f6" stroke-width="1"/><g transform="translate(76.0,73.0)" ><path d="M-8,-4 L1,-7.500 L8,-5 L7.500,5 L-0.500,8.500 L-8,5 Z" fill="#b81818"/><path d="M-8,-4 L1,-7.500 L8,-5 L-0.500,-1.500 Z" fill="#e85a4a"/><path d="M-0.500,-1.500 L8,-5 L7.500,5 L-0.500,8.500 Z" fill="#9c1212"/><path d="M-8,-4 L-0.500,-1.500 L-0.500,8.500 L-8,5 Z" fill="#d42222"/><text x="-4.300" y="5" text-anchor="middle" font-family="Liberation Sans, sans-serif" font-size="8.500" font-weight="bold" fill="#fff">S</text><text x="3.600" y="4.500" text-anchor="middle" font-family="Liberation Sans, sans-serif" font-size="8" font-weight="bold" fill="#fff">W</text></g><path d="M90.2,72.4 h5.600 l-2.800,3.200 Z" fill="#333"/><path d="M62.0,91.0 H1280.0" stroke="#111" stroke-width="2"/><path d="M932.0,28.5 H1280.0" stroke="#1a1a1a" stroke-width="1"/>
</svg>

</div>

<!-- ===== VIEWPORT ===== -->
<div id="viewport">
<svg style="left:-151px;top:-92px" width="1280" height="1024" viewBox="0 0 1280 1024" shape-rendering="geometricPrecision">
<polygon points="426.0,142.0 826.5,194.5 830.0,898.5 428.8,845.6" fill="#5e6167" stroke="#0c0e12" stroke-width="1.6" stroke-linejoin="round" />
<polyline points="426.0,141.4 826.5,193.8" fill="none" stroke="#0c0e12" stroke-width="1.2" stroke-linejoin="round" stroke-linecap="round" stroke-dasharray="5 1.5"/>
<polyline points="827.5,195.0 831.0,898.0" fill="none" stroke="#22252b" stroke-width="1.5" stroke-linejoin="round" stroke-linecap="round" />
<polygon points="427.0,196.0 457.0,167.0 565.0,182.0 565.0,199.0 536.0,226.0 427.0,211.0" fill="#07080a" stroke="#0c0e12" stroke-width="1" stroke-linejoin="round" />
<polyline points="428.0,195.3 457.5,168.3 564.0,182.3 536.5,206.3 428.0,195.3" fill="none" stroke="#f4f4f4" stroke-width="0.9" stroke-linejoin="round" stroke-linecap="round" />
<polyline points="432.5,194.6 457.0,172.0" fill="none" stroke="#e8e8e8" stroke-width="0.8" stroke-linejoin="round" stroke-linecap="round" />
<polyline points="436.5,194.2 459.0,173.0" fill="none" stroke="#e8e8e8" stroke-width="0.8" stroke-linejoin="round" stroke-linecap="round" />
<polyline points="557.5,185.5 538.5,203.8" fill="none" stroke="#e8e8e8" stroke-width="0.8" stroke-linejoin="round" stroke-linecap="round" />
<polyline points="461.0,170.2 556.0,182.8" fill="none" stroke="#e8e8e8" stroke-width="0.7" stroke-linejoin="round" stroke-linecap="round" />
<polygon points="442.5,188.5 460.0,171.0 548.5,181.3 552.0,187.2 534.0,202.4 446.0,192.0" fill="#fdfdfd" stroke="#111" stroke-width="0.8" stroke-linejoin="round" />
<polygon points="450.3,189.0 466.0,175.0 470.5,174.0 512.0,179.4 495.7,195.0" fill="#c4c8ea" stroke="#333" stroke-width="0.7" stroke-linejoin="round" />
<polyline points="430.0,197.8 535.0,210.0 562.0,185.5" fill="none" stroke="#fff" stroke-width="1" stroke-linejoin="round" stroke-linecap="round" stroke-dasharray="5 3"/>
<polyline points="447.0,192.8 533.0,203.6" fill="none" stroke="#999" stroke-width="0.8" stroke-linejoin="round" stroke-linecap="round" stroke-dasharray="3 3"/>
<ellipse cx="448.0" cy="210.5" rx="1.0" ry="1.0" fill="#777" stroke="none" stroke-width="1" />
<ellipse cx="480.0" cy="214.5" rx="1.0" ry="1.0" fill="#777" stroke="none" stroke-width="1" />
<ellipse cx="525.0" cy="220.5" rx="1.0" ry="1.0" fill="#777" stroke="none" stroke-width="1" />
<polygon points="437.5,215.3 563.4,232.0 563.8,356.3 439.0,339.8" fill="#bf4412" stroke="#0c0e12" stroke-width="1.2" stroke-linejoin="round" />
<polygon points="445.0,225.0 520.0,235.0 520.0,330.0 445.0,320.0" fill="#c44814" stroke="none" stroke-width="0" stroke-linejoin="round" opacity="0.5"/>
<ellipse cx="443.5" cy="221.5" rx="1.5" ry="1.5" fill="#5a1e08" stroke="#2a0e04" stroke-width="0.6" />
<ellipse cx="557.0" cy="236.5" rx="1.5" ry="1.5" fill="#5a1e08" stroke="#2a0e04" stroke-width="0.6" />
<ellipse cx="443.5" cy="316.0" rx="1.5" ry="1.5" fill="#5a1e08" stroke="#2a0e04" stroke-width="0.6" />
<ellipse cx="557.5" cy="350.5" rx="1.5" ry="1.5" fill="#5a1e08" stroke="#2a0e04" stroke-width="0.6" />
<polygon points="500.5,232.0 504.0,228.0 543.5,233.5 543.5,243.0 539.5,243.5 500.5,238.0" fill="#b9bbc8" stroke="#0c0e12" stroke-width="1" stroke-linejoin="round" />
<polygon points="501.0,233.5 538.5,238.5 538.5,243.0 501.0,238.0" fill="#2a2b30" stroke="#0c0e12" stroke-width="0.6" stroke-linejoin="round" />
<polyline points="503.0,235.7 537.0,240.2" fill="none" stroke="#cfd2e0" stroke-width="1.4" stroke-linejoin="round" stroke-linecap="round" stroke-dasharray="2 2.2"/>
<polyline points="504.0,230.5 541.0,235.5" fill="none" stroke="#2a2b30" stroke-width="1.6" stroke-linejoin="round" stroke-linecap="round" stroke-dasharray="3 1.5"/>
<rect x="527.0" y="250.0" width="5.5" height="13.0" fill="#3a3c46" stroke="#0c0e12" stroke-width="0.8" rx="1.5" />
<polyline points="528.8,252.0 528.8,261.0" fill="none" stroke="#d4d6e2" stroke-width="1.2" stroke-linejoin="round" stroke-linecap="round" />
<polyline points="531.0,252.0 531.0,261.0" fill="none" stroke="#8a8ca0" stroke-width="0.8" stroke-linejoin="round" stroke-linecap="round" />
<rect x="535.0" y="250.0" width="5.5" height="13.0" fill="#3a3c46" stroke="#0c0e12" stroke-width="0.8" rx="1.5" />
<polyline points="536.8,252.0 536.8,261.0" fill="none" stroke="#d4d6e2" stroke-width="1.2" stroke-linejoin="round" stroke-linecap="round" />
<polyline points="539.0,252.0 539.0,261.0" fill="none" stroke="#8a8ca0" stroke-width="0.8" stroke-linejoin="round" stroke-linecap="round" />
<polygon points="549.5,262.0 554.0,257.5 559.5,258.5 559.8,324.0 555.0,327.5 549.8,326.5" fill="#dfe2ee" stroke="#0c0e12" stroke-width="1" stroke-linejoin="round" />
<polyline points="552.0,262.0 552.3,325.0" fill="none" stroke="#6a6c80" stroke-width="2.2" stroke-linejoin="round" stroke-linecap="round" stroke-dasharray="1.2 1.6"/>
<polyline points="555.5,260.0 555.8,326.0" fill="none" stroke="#8e90a4" stroke-width="1" stroke-linejoin="round" stroke-linecap="round" stroke-dasharray="1.2 1.6"/>
<polygon points="433.5,332.0 439.5,326.0 453.0,328.0 453.0,343.0 447.0,349.0 433.5,347.0" fill="#d9dbf2" stroke="#0c0e12" stroke-width="1" stroke-linejoin="round" />
<polyline points="433.5,332.0 447.0,334.0 453.0,328.0" fill="none" stroke="#0c0e12" stroke-width="0.9" stroke-linejoin="round" stroke-linecap="round" />
<polyline points="447.0,334.0 447.0,349.0" fill="none" stroke="#0c0e12" stroke-width="0.9" stroke-linejoin="round" stroke-linecap="round" />
<polygon points="434.5,333.5 446.0,335.2 446.0,347.8 434.5,346.0" fill="#c8cbf0" stroke="none" stroke-width="1" stroke-linejoin="round" />
<polygon points="456.0,335.0 460.0,332.0 481.0,335.0 481.0,348.0 477.0,352.0 456.0,349.0" fill="#33353c" stroke="#0c0e12" stroke-width="1" stroke-linejoin="round" />
<polygon points="459.0,337.5 476.0,340.0 475.0,348.0 460.0,346.0" fill="#55575f" stroke="#0c0e12" stroke-width="0.8" stroke-linejoin="round" />
<polyline points="454.0,347.0 483.0,351.5" fill="none" stroke="#222429" stroke-width="2" stroke-linejoin="round" stroke-linecap="round" />
<polygon points="481.0,347.0 503.0,350.0 503.0,353.0 499.0,357.5 486.0,356.0 481.0,351.0" fill="#8b8d96" stroke="#0c0e12" stroke-width="0.9" stroke-linejoin="round" />
<polyline points="485.0,350.5 500.0,352.8" fill="none" stroke="#dadce6" stroke-width="1.4" stroke-linejoin="round" stroke-linecap="round" />
<polygon points="505.0,342.0 509.0,338.5 520.0,340.1 520.0,353.0 516.0,357.0 505.0,355.5" fill="#dcdef2" stroke="#0c0e12" stroke-width="1" stroke-linejoin="round" />
<polyline points="505.0,342.0 516.0,343.5 520.0,340.1" fill="none" stroke="#0c0e12" stroke-width="0.8" stroke-linejoin="round" stroke-linecap="round" />
<polyline points="516.0,343.5 516.0,357.0" fill="none" stroke="#0c0e12" stroke-width="0.8" stroke-linejoin="round" stroke-linecap="round" />
<rect x="507.0" y="349.5" width="6.0" height="4.5" fill="#f4f5fb" stroke="#0c0e12" stroke-width="0.7" rx="0" />
<polygon points="520.5,344.5 524.5,341.0 535.5,342.6 535.5,355.5 531.5,359.5 520.5,358.0" fill="#dcdef2" stroke="#0c0e12" stroke-width="1" stroke-linejoin="round" />
<polyline points="520.5,344.5 531.5,346.0 535.5,342.6" fill="none" stroke="#0c0e12" stroke-width="0.8" stroke-linejoin="round" stroke-linecap="round" />
<polyline points="531.5,346.0 531.5,359.5" fill="none" stroke="#0c0e12" stroke-width="0.8" stroke-linejoin="round" stroke-linecap="round" />
<rect x="522.5" y="352.0" width="6.0" height="4.5" fill="#f4f5fb" stroke="#0c0e12" stroke-width="0.7" rx="0" />
<polygon points="581.4,234.0 601.3,236.7 601.5,349.2 582.0,346.9" fill="#bf4412" stroke="#0c0e12" stroke-width="1.2" stroke-linejoin="round" />
<polyline points="602.3,240.0 602.5,347.0" fill="none" stroke="#33353a" stroke-width="1.4" stroke-linejoin="round" stroke-linecap="round" />
<polygon points="592.0,234.5 594.0,232.0 601.0,233.0 601.0,245.0 599.0,247.5 592.0,246.5" fill="#2c2e33" stroke="#0c0e12" stroke-width="0.9" stroke-linejoin="round" />
<polygon points="588.8,306.0 591.0,303.8 599.0,304.9 599.0,343.0 596.5,345.5 588.8,344.4" fill="#e3e5f2" stroke="#0c0e12" stroke-width="1" stroke-linejoin="round" />
<polyline points="596.5,307.0 596.5,345.0" fill="none" stroke="#8b8da0" stroke-width="0.9" stroke-linejoin="round" stroke-linecap="round" />
<polygon points="652.0,265.5 694.5,217.0 697.0,216.3 788.0,229.0 789.5,231.0 789.5,241.0 747.5,276.0 736.5,271.5" fill="#6c6e74" stroke="#0c0e12" stroke-width="1.2" stroke-linejoin="round" />
<polygon points="747.2,276.0 789.5,241.0 789.3,356.5 747.2,384.8" fill="#7c7e9c" stroke="#0c0e12" stroke-width="1.2" stroke-linejoin="round" />
<path d="M652,265.500 Q700,266 737,271.500 L747.200,276 L747.200,384.800 L737,395.500 Q690,391 660.500,385.500 L660.500,377.500 L652.500,373.800 Z" fill="#717378" stroke="#0c0e12" stroke-width="1.3" stroke-linejoin="round"/>
<polyline points="737.0,271.5 737.0,395.5" fill="none" stroke="#0c0e12" stroke-width="1" stroke-linejoin="round" stroke-linecap="round" />
<polygon points="676.5,277.2 715.0,282.0 715.5,341.6 676.5,335.6" fill="none" stroke="#0c0e12" stroke-width="1.2" stroke-linejoin="round" />
<polyline points="740.0,271.5 781.5,232.0" fill="none" stroke="#0c0e12" stroke-width="1" stroke-linejoin="round" stroke-linecap="round" />
<polyline points="742.3,272.8 783.6,233.7" fill="none" stroke="#0c0e12" stroke-width="1" stroke-linejoin="round" stroke-linecap="round" />
<polyline points="744.6,274.0 785.6,235.4" fill="none" stroke="#0c0e12" stroke-width="1" stroke-linejoin="round" stroke-linecap="round" />
<polyline points="746.9,275.3 787.7,237.2" fill="none" stroke="#0c0e12" stroke-width="1" stroke-linejoin="round" stroke-linecap="round" />
<polyline points="749.2,276.6 789.8,238.9" fill="none" stroke="#0c0e12" stroke-width="1" stroke-linejoin="round" stroke-linecap="round" />
<polygon points="694.5,217.0 694.5,225.0 700.0,222.0 704.0,218.5" fill="#6c6e74" stroke="#0c0e12" stroke-width="1" stroke-linejoin="round" />
<ellipse cx="697.8" cy="220.5" rx="1.6" ry="1.6" fill="#5a5c62" stroke="#0c0e12" stroke-width="0.7" />
<polygon points="779.5,230.5 789.5,231.5 789.5,241.0 780.0,240.0" fill="#6c6e74" stroke="#0c0e12" stroke-width="1" stroke-linejoin="round" />
<ellipse cx="784.5" cy="235.5" rx="2.4" ry="2.4" fill="#62646a" stroke="#0c0e12" stroke-width="0.8" />
<polygon points="652.0,265.5 659.0,258.0 659.0,266.0" fill="#6c6e74" stroke="#0c0e12" stroke-width="0.9" stroke-linejoin="round" />
<polygon points="789.3,346.0 784.5,349.5 784.5,359.5 789.3,356.5" fill="#7c7e9c" stroke="#0c0e12" stroke-width="0.9" stroke-linejoin="round" />
<ellipse cx="786.5" cy="354.5" rx="1.2" ry="1.6" fill="#55576a" stroke="#0c0e12" stroke-width="0.6" />
<polygon points="737.0,395.5 737.0,389.0 747.2,384.8" fill="#717378" stroke="#0c0e12" stroke-width="0.9" stroke-linejoin="round" />
<polygon points="708.0,231.0 722.0,220.5 759.0,225.5 746.0,237.5" fill="#3f4147" stroke="#0c0e12" stroke-width="0.9" stroke-linejoin="round" />
<ellipse cx="734.0" cy="229.0" rx="8.0" ry="3.6" fill="#6c6e74" stroke="#0c0e12" stroke-width="0.8" />
<polyline points="712.0,230.5 724.0,222.0 756.0,226.5 745.0,235.5 712.0,230.5" fill="none" stroke="#25272c" stroke-width="1.4" stroke-linejoin="round" stroke-linecap="round" stroke-dasharray="2 1.4"/>
<polyline points="675.0,254.5 681.0,256.7" fill="none" stroke="#1b1c20" stroke-width="3.0" stroke-linejoin="round" stroke-linecap="round" />
<polyline points="678.6,251.6 684.6,253.8" fill="none" stroke="#1b1c20" stroke-width="3.0" stroke-linejoin="round" stroke-linecap="round" />
<polyline points="682.2,248.7 688.2,250.9" fill="none" stroke="#1b1c20" stroke-width="3.0" stroke-linejoin="round" stroke-linecap="round" />
<polyline points="685.8,245.8 691.8,248.0" fill="none" stroke="#1b1c20" stroke-width="3.0" stroke-linejoin="round" stroke-linecap="round" />
<polyline points="689.4,242.9 695.4,245.1" fill="none" stroke="#1b1c20" stroke-width="3.0" stroke-linejoin="round" stroke-linecap="round" />
<polyline points="693.0,240.0 699.0,242.2" fill="none" stroke="#1b1c20" stroke-width="3.0" stroke-linejoin="round" stroke-linecap="round" />
<polyline points="697.5,257.5 703.5,259.7" fill="none" stroke="#1b1c20" stroke-width="3.0" stroke-linejoin="round" stroke-linecap="round" />
<polyline points="701.1,254.6 707.1,256.8" fill="none" stroke="#1b1c20" stroke-width="3.0" stroke-linejoin="round" stroke-linecap="round" />
<polyline points="704.7,251.7 710.7,253.9" fill="none" stroke="#1b1c20" stroke-width="3.0" stroke-linejoin="round" stroke-linecap="round" />
<polyline points="708.3,248.8 714.3,251.0" fill="none" stroke="#1b1c20" stroke-width="3.0" stroke-linejoin="round" stroke-linecap="round" />
<polyline points="711.9,245.9 717.9,248.1" fill="none" stroke="#1b1c20" stroke-width="3.0" stroke-linejoin="round" stroke-linecap="round" />
<polyline points="715.5,243.0 721.5,245.2" fill="none" stroke="#1b1c20" stroke-width="3.0" stroke-linejoin="round" stroke-linecap="round" />
<polyline points="720.0,260.5 726.5,262.7" fill="none" stroke="#1b1c20" stroke-width="3.0" stroke-linejoin="round" stroke-linecap="round" />
<polyline points="723.4,257.7 729.9,259.9" fill="none" stroke="#1b1c20" stroke-width="3.0" stroke-linejoin="round" stroke-linecap="round" />
<polyline points="726.8,254.9 733.3,257.1" fill="none" stroke="#1b1c20" stroke-width="3.0" stroke-linejoin="round" stroke-linecap="round" />
<polyline points="730.2,252.1 736.7,254.3" fill="none" stroke="#1b1c20" stroke-width="3.0" stroke-linejoin="round" stroke-linecap="round" />
<polyline points="733.6,249.3 740.1,251.5" fill="none" stroke="#1b1c20" stroke-width="3.0" stroke-linejoin="round" stroke-linecap="round" />
<polyline points="737.0,246.5 743.5,248.7" fill="none" stroke="#1b1c20" stroke-width="3.0" stroke-linejoin="round" stroke-linecap="round" />
<polyline points="752.5,362.0 752.5,284.0" fill="none" stroke="#22232b" stroke-width="3.4" stroke-linejoin="round" stroke-linecap="round" stroke-dasharray="8 1.4"/>
<polyline points="756.7,358.8 756.7,280.6" fill="none" stroke="#22232b" stroke-width="3.4" stroke-linejoin="round" stroke-linecap="round" stroke-dasharray="8 1.4"/>
<polyline points="760.9,355.6 760.9,277.2" fill="none" stroke="#22232b" stroke-width="3.4" stroke-linejoin="round" stroke-linecap="round" stroke-dasharray="8 1.4"/>
<polyline points="765.1,352.4 765.1,273.8" fill="none" stroke="#22232b" stroke-width="3.4" stroke-linejoin="round" stroke-linecap="round" stroke-dasharray="8 1.4"/>
<polygon points="776.0,424.5 808.0,428.5 808.5,455.5 776.0,452.0" fill="#4d4f54" stroke="#0c0e12" stroke-width="1.1" stroke-linejoin="round" />
<polyline points="776.0,430.0 808.0,434.0" fill="none" stroke="#0c0e12" stroke-width="0.9" stroke-linejoin="round" stroke-linecap="round" />
<polyline points="776.0,447.5 808.5,451.0" fill="none" stroke="#0c0e12" stroke-width="0.9" stroke-linejoin="round" stroke-linecap="round" />
<polygon points="776.0,447.5 808.5,451.0 808.5,455.5 776.0,452.0" fill="#3a3c41" stroke="#0c0e12" stroke-width="0.8" stroke-linejoin="round" />
<polygon points="656.7,403.4 666.7,393.4 679.2,394.9 669.2,404.9" fill="#b2b2a4" stroke="#0c0e12" stroke-width="1" stroke-linejoin="round" />
<polygon points="660.2,400.9 664.7,396.4 673.0,397.4 668.5,401.9" fill="#8a8a7e" stroke="#0c0e12" stroke-width="0.8" stroke-linejoin="round" />
<polygon points="656.7,403.4 669.2,404.9 669.2,417.2 656.7,415.7" fill="#c9c9b9" stroke="#0c0e12" stroke-width="1.1" stroke-linejoin="round" />
<ellipse cx="663.0" cy="410.4" rx="3.9" ry="4.1" fill="#4e4434" stroke="#0c0e12" stroke-width="0.9" />
<polyline points="660.4,408.4 665.8,412.4" fill="none" stroke="#1c1812" stroke-width="1.1" stroke-linejoin="round" stroke-linecap="round" />
<polyline points="665.8,408.4 660.4,412.4" fill="none" stroke="#1c1812" stroke-width="1.1" stroke-linejoin="round" stroke-linecap="round" />
<polygon points="649.7,422.7 656.7,415.7 669.2,417.2 663.0,424.4" fill="#a9a99d" stroke="#0c0e12" stroke-width="1" stroke-linejoin="round" />
<polygon points="649.7,422.7 663.0,424.4 663.0,456.4 649.7,454.8" fill="#c9c9b9" stroke="#0c0e12" stroke-width="1.1" stroke-linejoin="round" />
<ellipse cx="657.0" cy="430.9" rx="1.5" ry="1.5" fill="#2a2a26" stroke="none" stroke-width="1" />
<ellipse cx="655.3" cy="434.9" rx="1.3" ry="1.3" fill="#2a2a26" stroke="none" stroke-width="1" />
<ellipse cx="658.7" cy="435.2" rx="1.2" ry="1.2" fill="#2a2a26" stroke="none" stroke-width="1" />
<polyline points="651.2,438.4 662.0,439.8" fill="none" stroke="#0c0e12" stroke-width="1.6" stroke-linejoin="round" stroke-linecap="round" />
<polygon points="650.7,440.1 662.0,441.5 662.0,449.3 650.7,447.9" fill="#c6c62c" stroke="#2e2e08" stroke-width="0.9" stroke-linejoin="round" />
<polyline points="651.7,444.2 661.0,445.5" fill="none" stroke="#7e7e14" stroke-width="1.2" stroke-linejoin="round" stroke-linecap="round" />
<polygon points="654.7,455.6 666.0,457.4 666.0,462.0 654.7,460.2" fill="#b9b9aa" stroke="#0c0e12" stroke-width="0.9" stroke-linejoin="round" />
<polyline points="656.7,458.4 664.0,459.8" fill="none" stroke="#3a3a30" stroke-width="1.2" stroke-linejoin="round" stroke-linecap="round" stroke-dasharray="2 1.5"/>
<polygon points="670.3,405.0 680.3,395.0 692.8,396.5 682.8,406.5" fill="#b2b2a4" stroke="#0c0e12" stroke-width="1" stroke-linejoin="round" />
<polygon points="673.8,402.5 678.3,398.0 686.6,399.0 682.1,403.5" fill="#8a8a7e" stroke="#0c0e12" stroke-width="0.8" stroke-linejoin="round" />
<polygon points="670.3,405.0 682.8,406.5 682.8,418.8 670.3,417.3" fill="#c9c9b9" stroke="#0c0e12" stroke-width="1.1" stroke-linejoin="round" />
<ellipse cx="676.5" cy="412.0" rx="3.9" ry="4.1" fill="#4e4434" stroke="#0c0e12" stroke-width="0.9" />
<polyline points="673.9,410.0 679.3,414.0" fill="none" stroke="#1c1812" stroke-width="1.1" stroke-linejoin="round" stroke-linecap="round" />
<polyline points="679.3,410.0 673.9,414.0" fill="none" stroke="#1c1812" stroke-width="1.1" stroke-linejoin="round" stroke-linecap="round" />
<polygon points="663.3,424.3 670.3,417.3 682.8,418.8 676.6,426.0" fill="#a9a99d" stroke="#0c0e12" stroke-width="1" stroke-linejoin="round" />
<polygon points="663.3,424.3 676.6,426.0 676.6,458.0 663.3,456.4" fill="#c9c9b9" stroke="#0c0e12" stroke-width="1.1" stroke-linejoin="round" />
<ellipse cx="670.6" cy="432.5" rx="1.5" ry="1.5" fill="#2a2a26" stroke="none" stroke-width="1" />
<ellipse cx="668.9" cy="436.5" rx="1.3" ry="1.3" fill="#2a2a26" stroke="none" stroke-width="1" />
<ellipse cx="672.3" cy="436.8" rx="1.2" ry="1.2" fill="#2a2a26" stroke="none" stroke-width="1" />
<polyline points="664.8,440.0 675.6,441.4" fill="none" stroke="#0c0e12" stroke-width="1.6" stroke-linejoin="round" stroke-linecap="round" />
<polygon points="664.3,441.7 675.6,443.1 675.6,450.9 664.3,449.5" fill="#c6c62c" stroke="#2e2e08" stroke-width="0.9" stroke-linejoin="round" />
<polyline points="665.3,445.8 674.6,447.1" fill="none" stroke="#7e7e14" stroke-width="1.2" stroke-linejoin="round" stroke-linecap="round" />
<polygon points="668.3,457.2 679.6,459.0 679.6,463.6 668.3,461.8" fill="#b9b9aa" stroke="#0c0e12" stroke-width="0.9" stroke-linejoin="round" />
<polyline points="670.3,460.0 677.6,461.4" fill="none" stroke="#3a3a30" stroke-width="1.2" stroke-linejoin="round" stroke-linecap="round" stroke-dasharray="2 1.5"/>
<polygon points="684.0,406.7 694.0,396.7 706.5,398.2 696.5,408.2" fill="#b2b2a4" stroke="#0c0e12" stroke-width="1" stroke-linejoin="round" />
<polygon points="687.5,404.2 692.0,399.7 700.3,400.7 695.8,405.2" fill="#8a8a7e" stroke="#0c0e12" stroke-width="0.8" stroke-linejoin="round" />
<polygon points="684.0,406.7 696.5,408.2 696.5,420.5 684.0,419.0" fill="#c9c9b9" stroke="#0c0e12" stroke-width="1.1" stroke-linejoin="round" />
<ellipse cx="690.2" cy="413.7" rx="3.9" ry="4.1" fill="#4e4434" stroke="#0c0e12" stroke-width="0.9" />
<polyline points="687.6,411.7 693.0,415.7" fill="none" stroke="#1c1812" stroke-width="1.1" stroke-linejoin="round" stroke-linecap="round" />
<polyline points="693.0,411.7 687.6,415.7" fill="none" stroke="#1c1812" stroke-width="1.1" stroke-linejoin="round" stroke-linecap="round" />
<polygon points="677.0,426.0 684.0,419.0 696.5,420.5 690.3,427.7" fill="#a9a99d" stroke="#0c0e12" stroke-width="1" stroke-linejoin="round" />
<polygon points="677.0,426.0 690.3,427.7 690.3,459.7 677.0,458.1" fill="#c9c9b9" stroke="#0c0e12" stroke-width="1.1" stroke-linejoin="round" />
<ellipse cx="684.3" cy="434.2" rx="1.5" ry="1.5" fill="#2a2a26" stroke="none" stroke-width="1" />
<ellipse cx="682.6" cy="438.2" rx="1.3" ry="1.3" fill="#2a2a26" stroke="none" stroke-width="1" />
<ellipse cx="686.0" cy="438.5" rx="1.2" ry="1.2" fill="#2a2a26" stroke="none" stroke-width="1" />
<polyline points="678.5,441.7 689.3,443.1" fill="none" stroke="#0c0e12" stroke-width="1.6" stroke-linejoin="round" stroke-linecap="round" />
<polygon points="678.0,443.4 689.3,444.8 689.3,452.6 678.0,451.2" fill="#c6c62c" stroke="#2e2e08" stroke-width="0.9" stroke-linejoin="round" />
<polyline points="679.0,447.5 688.3,448.8" fill="none" stroke="#7e7e14" stroke-width="1.2" stroke-linejoin="round" stroke-linecap="round" />
<polygon points="682.0,458.9 693.3,460.7 693.3,465.3 682.0,463.5" fill="#b9b9aa" stroke="#0c0e12" stroke-width="0.9" stroke-linejoin="round" />
<polyline points="684.0,461.7 691.3,463.1" fill="none" stroke="#3a3a30" stroke-width="1.2" stroke-linejoin="round" stroke-linecap="round" stroke-dasharray="2 1.5"/>
<polygon points="697.6,408.3 707.6,398.3 720.1,399.8 710.1,409.8" fill="#b2b2a4" stroke="#0c0e12" stroke-width="1" stroke-linejoin="round" />
<polygon points="701.1,405.8 705.6,401.3 713.9,402.3 709.4,406.8" fill="#8a8a7e" stroke="#0c0e12" stroke-width="0.8" stroke-linejoin="round" />
<polygon points="697.6,408.3 710.1,409.8 710.1,422.1 697.6,420.6" fill="#c9c9b9" stroke="#0c0e12" stroke-width="1.1" stroke-linejoin="round" />
<ellipse cx="703.9" cy="415.3" rx="3.9" ry="4.1" fill="#4e4434" stroke="#0c0e12" stroke-width="0.9" />
<polyline points="701.2,413.3 706.6,417.3" fill="none" stroke="#1c1812" stroke-width="1.1" stroke-linejoin="round" stroke-linecap="round" />
<polyline points="706.6,413.3 701.2,417.3" fill="none" stroke="#1c1812" stroke-width="1.1" stroke-linejoin="round" stroke-linecap="round" />
<polygon points="690.6,427.6 697.6,420.6 710.1,422.1 703.9,429.3" fill="#a9a99d" stroke="#0c0e12" stroke-width="1" stroke-linejoin="round" />
<polygon points="690.6,427.6 703.9,429.3 703.9,461.3 690.6,459.7" fill="#c9c9b9" stroke="#0c0e12" stroke-width="1.1" stroke-linejoin="round" />
<ellipse cx="697.9" cy="435.8" rx="1.5" ry="1.5" fill="#2a2a26" stroke="none" stroke-width="1" />
<ellipse cx="696.2" cy="439.8" rx="1.3" ry="1.3" fill="#2a2a26" stroke="none" stroke-width="1" />
<ellipse cx="699.6" cy="440.1" rx="1.2" ry="1.2" fill="#2a2a26" stroke="none" stroke-width="1" />
<polyline points="692.1,443.3 702.9,444.7" fill="none" stroke="#0c0e12" stroke-width="1.6" stroke-linejoin="round" stroke-linecap="round" />
<polygon points="691.6,445.0 702.9,446.4 702.9,454.2 691.6,452.8" fill="#c6c62c" stroke="#2e2e08" stroke-width="0.9" stroke-linejoin="round" />
<polyline points="692.6,449.1 701.9,450.4" fill="none" stroke="#7e7e14" stroke-width="1.2" stroke-linejoin="round" stroke-linecap="round" />
<polygon points="695.6,460.5 706.9,462.3 706.9,466.9 695.6,465.1" fill="#b9b9aa" stroke="#0c0e12" stroke-width="0.9" stroke-linejoin="round" />
<polyline points="697.6,463.3 704.9,464.7" fill="none" stroke="#3a3a30" stroke-width="1.2" stroke-linejoin="round" stroke-linecap="round" stroke-dasharray="2 1.5"/>
<polygon points="722.0,399.0 724.0,396.5 762.0,401.5 762.0,406.0 748.0,405.0 748.0,410.0 722.0,407.0" fill="#f0f1f6" stroke="#0c0e12" stroke-width="0.9" stroke-linejoin="round" />
<polygon points="748.0,401.0 760.0,403.0 763.0,408.0 750.0,414.0" fill="#e6e7ee" stroke="#0c0e12" stroke-width="0.8" stroke-linejoin="round" />
<polygon points="760.0,404.0 777.0,411.0 777.0,470.0 760.0,476.0" fill="#d5d7ea" stroke="#0c0e12" stroke-width="1" stroke-linejoin="round" />
<polygon points="750.0,404.5 760.0,404.0 760.0,427.0 748.0,428.0" fill="#c9c9b9" stroke="#0c0e12" stroke-width="0.9" stroke-linejoin="round" />
<ellipse cx="754.0" cy="420.0" rx="3.6" ry="3.9" fill="#4e4434" stroke="#0c0e12" stroke-width="0.9" />
<polyline points="751.5,418.0 756.5,422.0" fill="none" stroke="#1c1812" stroke-width="1" stroke-linejoin="round" stroke-linecap="round" />
<polyline points="756.5,418.0 751.5,422.0" fill="none" stroke="#1c1812" stroke-width="1" stroke-linejoin="round" stroke-linecap="round" />
<polygon points="745.5,431.0 760.0,433.0 760.0,476.0 745.5,470.0" fill="#c9c9b9" stroke="#0c0e12" stroke-width="0.9" stroke-linejoin="round" />
<polygon points="745.5,431.0 751.0,427.0 762.0,428.5 760.0,433.0" fill="#a9a99d" stroke="#0c0e12" stroke-width="0.8" stroke-linejoin="round" />
<polyline points="746.5,452.0 759.0,453.6" fill="none" stroke="#0c0e12" stroke-width="1.5" stroke-linejoin="round" stroke-linecap="round" />
<polygon points="747.0,453.5 758.0,455.0 758.0,462.0 747.0,460.5" fill="#c6c62c" stroke="#2e2e08" stroke-width="0.9" stroke-linejoin="round" />
<ellipse cx="753.0" cy="441.5" rx="1.4" ry="1.4" fill="#444" stroke="none" stroke-width="1" />
<ellipse cx="774.5" cy="415.0" rx="1.2" ry="1.6" fill="#555" stroke="#0c0e12" stroke-width="0.5" />
<ellipse cx="775.0" cy="453.0" rx="1.2" ry="1.6" fill="#555" stroke="#0c0e12" stroke-width="0.5" />
<polygon points="752.0,470.0 766.0,474.5 766.0,469.0 760.0,469.0" fill="#b9b9aa" stroke="#0c0e12" stroke-width="0.7" stroke-linejoin="round" />
<polygon points="698.5,429.0 741.0,436.0 741.0,486.0 735.0,484.0 733.0,481.0 728.0,483.0 723.0,479.5 718.0,481.5 713.0,478.0 708.0,480.0 703.0,477.0 698.5,479.0" fill="#3c4149" stroke="#0c0e12" stroke-width="1.1" stroke-linejoin="round" />
<polygon points="741.0,436.0 751.0,421.5 751.0,472.0 741.0,486.0" fill="#4b5059" stroke="#0c0e12" stroke-width="1" stroke-linejoin="round" />
<polygon points="698.5,429.0 704.0,417.0 715.0,409.0 745.0,413.0 751.0,421.5 741.0,436.0" fill="#33373e" stroke="#0c0e12" stroke-width="1" stroke-linejoin="round" />
<polygon points="716.0,411.0 742.0,414.5 740.0,424.0 714.0,420.0" fill="#23262b" stroke="#0c0e12" stroke-width="0.8" stroke-linejoin="round" />
<polyline points="705.0,428.0 714.0,416.0" fill="none" stroke="#0c0e12" stroke-width="1.6" stroke-linejoin="round" stroke-linecap="round" />
<polyline points="716.0,430.0 724.0,418.0" fill="none" stroke="#0c0e12" stroke-width="1.6" stroke-linejoin="round" stroke-linecap="round" />
<polyline points="727.0,431.5 734.0,420.0" fill="none" stroke="#0c0e12" stroke-width="1.6" stroke-linejoin="round" stroke-linecap="round" />
<ellipse cx="704.5" cy="435.5" rx="2.5" ry="2.6" fill="#4a4f58" stroke="#0c0e12" stroke-width="0.8" />
<ellipse cx="704.5" cy="470.5" rx="2.5" ry="2.6" fill="#4a4f58" stroke="#0c0e12" stroke-width="0.8" />
<rect x="703.0" y="456.5" width="4.0" height="9.0" fill="#1e2126" stroke="#0c0e12" stroke-width="0.6" rx="1.5" />
<polyline points="704.5,458.0 704.5,464.0" fill="none" stroke="#c9ccd6" stroke-width="1.1" stroke-linejoin="round" stroke-linecap="round" />
<ellipse cx="714.2" cy="437.1" rx="2.5" ry="2.6" fill="#9aa0b0" stroke="#0c0e12" stroke-width="0.8" />
<ellipse cx="714.2" cy="472.1" rx="2.5" ry="2.6" fill="#4a4f58" stroke="#0c0e12" stroke-width="0.8" />
<rect x="712.3" y="458.1" width="4.0" height="9.0" fill="#1e2126" stroke="#0c0e12" stroke-width="0.6" rx="1.5" />
<polyline points="713.8,459.6 713.8,465.6" fill="none" stroke="#c9ccd6" stroke-width="1.1" stroke-linejoin="round" stroke-linecap="round" />
<ellipse cx="723.9" cy="438.7" rx="2.5" ry="2.6" fill="#9aa0b0" stroke="#0c0e12" stroke-width="0.8" />
<ellipse cx="723.9" cy="473.7" rx="2.5" ry="2.6" fill="#4a4f58" stroke="#0c0e12" stroke-width="0.8" />
<rect x="721.6" y="459.7" width="4.0" height="9.0" fill="#1e2126" stroke="#0c0e12" stroke-width="0.6" rx="1.5" />
<polyline points="723.1,461.2 723.1,467.2" fill="none" stroke="#c9ccd6" stroke-width="1.1" stroke-linejoin="round" stroke-linecap="round" />
<ellipse cx="733.6" cy="440.3" rx="2.5" ry="2.6" fill="#9aa0b0" stroke="#0c0e12" stroke-width="0.8" />
<ellipse cx="733.6" cy="475.3" rx="2.5" ry="2.6" fill="#4a4f58" stroke="#0c0e12" stroke-width="0.8" />
<rect x="730.9" y="461.3" width="4.0" height="9.0" fill="#1e2126" stroke="#0c0e12" stroke-width="0.6" rx="1.5" />
<polyline points="732.4,462.8 732.4,468.8" fill="none" stroke="#c9ccd6" stroke-width="1.1" stroke-linejoin="round" stroke-linecap="round" />
<polygon points="704.0,448.5 733.0,453.5 733.0,456.5 704.0,451.5" fill="#e0242a" stroke="#7a0c10" stroke-width="0.6" stroke-linejoin="round" />
<polygon points="444.3,422.2 467.8,401.2 468.3,485.3 444.3,504.2" fill="#51536a" stroke="#0c0e12" stroke-width="1.1" stroke-linejoin="round" />
<polygon points="420.3,416.3 441.8,395.3 467.8,398.2 444.3,422.2" fill="#3c3e44" stroke="#0c0e12" stroke-width="1.1" stroke-linejoin="round" />
<polygon points="420.3,416.3 444.3,422.2 444.3,503.7 432.3,503.7 431.8,507.2 420.3,504.3" fill="#484a50" stroke="#0c0e12" stroke-width="1.2" stroke-linejoin="round" />
<polyline points="422.0,414.6 430.7,416.7" fill="none" stroke="#0a0b0d" stroke-width="1.1" stroke-linejoin="round" stroke-linecap="round" />
<polyline points="425.1,411.6 433.7,413.7" fill="none" stroke="#0a0b0d" stroke-width="1.1" stroke-linejoin="round" stroke-linecap="round" />
<polyline points="428.2,408.6 436.8,410.7" fill="none" stroke="#0a0b0d" stroke-width="1.1" stroke-linejoin="round" stroke-linecap="round" />
<polyline points="431.3,405.6 439.9,407.7" fill="none" stroke="#0a0b0d" stroke-width="1.1" stroke-linejoin="round" stroke-linecap="round" />
<polyline points="434.3,402.6 443.0,404.7" fill="none" stroke="#0a0b0d" stroke-width="1.1" stroke-linejoin="round" stroke-linecap="round" />
<polyline points="437.4,399.6 446.1,401.7" fill="none" stroke="#0a0b0d" stroke-width="1.1" stroke-linejoin="round" stroke-linecap="round" />
<polyline points="440.5,396.6 449.1,398.7" fill="none" stroke="#0a0b0d" stroke-width="1.1" stroke-linejoin="round" stroke-linecap="round" />
<polyline points="430.4,418.8 452.7,396.5" fill="none" stroke="#0a0b0d" stroke-width="1.4" stroke-linejoin="round" stroke-linecap="round" />
<polygon points="435.8,417.3 454.3,398.7 464.1,399.9 445.0,419.4" fill="#3a3c44" stroke="#0c0e12" stroke-width="0.8" stroke-linejoin="round" />
<ellipse cx="442.7" cy="416.0" rx="2.6" ry="1.7" fill="#17181c" stroke="none" stroke-width="1" />
<ellipse cx="447.3" cy="411.4" rx="2.6" ry="1.7" fill="#17181c" stroke="none" stroke-width="1" />
<ellipse cx="451.8" cy="406.7" rx="2.6" ry="1.7" fill="#17181c" stroke="none" stroke-width="1" />
<ellipse cx="456.4" cy="402.1" rx="2.6" ry="1.7" fill="#17181c" stroke="none" stroke-width="1" />
<polygon points="441.8,395.3 446.1,392.3 451.9,394.8 450.9,398.3" fill="#2d2f35" stroke="#0c0e12" stroke-width="0.9" stroke-linejoin="round" />
<polygon points="459.9,397.2 463.0,394.7 469.0,396.7 469.0,402.2" fill="#2d2f35" stroke="#0c0e12" stroke-width="0.9" stroke-linejoin="round" />
<polygon points="428.2,424.2 432.3,425.2 432.3,502.7 428.2,502.0" fill="#ff8d1c" stroke="none" stroke-width="1" stroke-linejoin="round" />
<polygon points="432.8,429.4 435.9,427.9 443.3,430.6 443.3,454.4 432.8,452.2" fill="#20b436" stroke="#063c0c" stroke-width="0.9" stroke-linejoin="round" />
<polyline points="438.6,430.4 438.6,452.9" fill="none" stroke="#0c6a18" stroke-width="1" stroke-linejoin="round" stroke-linecap="round" />
<polyline points="433.4,431.9 438.1,433.1" fill="none" stroke="#0c6a18" stroke-width="0.8" stroke-linejoin="round" stroke-linecap="round" />
<polyline points="433.4,437.2 438.1,438.4" fill="none" stroke="#0c6a18" stroke-width="0.8" stroke-linejoin="round" stroke-linecap="round" />
<polyline points="433.4,442.4 438.1,443.6" fill="none" stroke="#0c6a18" stroke-width="0.8" stroke-linejoin="round" stroke-linecap="round" />
<polyline points="433.4,447.7 438.1,448.9" fill="none" stroke="#0c6a18" stroke-width="0.8" stroke-linejoin="round" stroke-linecap="round" />
<polygon points="432.8,469.4 435.9,467.9 443.3,470.6 443.3,495.8 432.8,493.6" fill="#20b436" stroke="#063c0c" stroke-width="0.9" stroke-linejoin="round" />
<polyline points="438.6,470.4 438.6,494.3" fill="none" stroke="#0c6a18" stroke-width="1" stroke-linejoin="round" stroke-linecap="round" />
<polyline points="433.4,471.9 438.1,473.1" fill="none" stroke="#0c6a18" stroke-width="0.8" stroke-linejoin="round" stroke-linecap="round" />
<polyline points="433.4,477.5 438.1,478.7" fill="none" stroke="#0c6a18" stroke-width="0.8" stroke-linejoin="round" stroke-linecap="round" />
<polyline points="433.4,483.1 438.1,484.3" fill="none" stroke="#0c6a18" stroke-width="0.8" stroke-linejoin="round" stroke-linecap="round" />
<polyline points="433.4,488.7 438.1,489.9" fill="none" stroke="#0c6a18" stroke-width="0.8" stroke-linejoin="round" stroke-linecap="round" />
<rect x="434.4" y="456.0" width="5.3" height="12.0" fill="#c8242a" stroke="#5a0a0e" stroke-width="0.6" rx="0" />
<polyline points="441.0,457.0 441.0,467.5" fill="none" stroke="#e8e8ee" stroke-width="1.4" stroke-linejoin="round" stroke-linecap="round" stroke-dasharray="1 1"/>
<rect x="434.0" y="468.0" width="6.3" height="1.4" fill="#3e4048" stroke="none" stroke-width="1" rx="0" />
<ellipse cx="437.2" cy="468.8" rx="2.1" ry="2.1" fill="#0d0e10" stroke="none" stroke-width="1" />
<polyline points="445.8,431.0 449.3,428.8" fill="none" stroke="#1a1b22" stroke-width="0.9" stroke-linejoin="round" stroke-linecap="round" />
<polyline points="445.8,434.9 449.3,432.7" fill="none" stroke="#1a1b22" stroke-width="0.9" stroke-linejoin="round" stroke-linecap="round" />
<polyline points="445.8,438.9 449.3,436.7" fill="none" stroke="#1a1b22" stroke-width="0.9" stroke-linejoin="round" stroke-linecap="round" />
<polyline points="445.8,442.9 449.3,440.7" fill="none" stroke="#1a1b22" stroke-width="0.9" stroke-linejoin="round" stroke-linecap="round" />
<polyline points="445.8,446.8 449.3,444.6" fill="none" stroke="#1a1b22" stroke-width="0.9" stroke-linejoin="round" stroke-linecap="round" />
<polyline points="445.8,466.2 449.3,464.0" fill="none" stroke="#1a1b22" stroke-width="0.9" stroke-linejoin="round" stroke-linecap="round" />
<polyline points="445.8,470.6 449.3,468.4" fill="none" stroke="#1a1b22" stroke-width="0.9" stroke-linejoin="round" stroke-linecap="round" />
<polyline points="445.8,475.0 449.3,472.8" fill="none" stroke="#1a1b22" stroke-width="0.9" stroke-linejoin="round" stroke-linecap="round" />
<polyline points="445.8,479.4 449.3,477.2" fill="none" stroke="#1a1b22" stroke-width="0.9" stroke-linejoin="round" stroke-linecap="round" />
<polyline points="445.8,483.8 449.3,481.6" fill="none" stroke="#1a1b22" stroke-width="0.9" stroke-linejoin="round" stroke-linecap="round" />
<polyline points="445.8,488.2 449.3,486.0" fill="none" stroke="#1a1b22" stroke-width="0.9" stroke-linejoin="round" stroke-linecap="round" />
<ellipse cx="448.3" cy="438.0" rx="0.7" ry="0.7" fill="#d8d8e6" stroke="none" stroke-width="1" />
<ellipse cx="447.8" cy="496.1" rx="0.7" ry="0.7" fill="#d8d8e6" stroke="none" stroke-width="1" />
<polyline points="455.8,477.3 459.8,472.3 461.8,474.3 464.8,468.3" fill="none" stroke="#14151b" stroke-width="1" stroke-linejoin="round" stroke-linecap="round" />
<polyline points="457.8,472.3 462.8,467.3 464.8,470.3" fill="none" stroke="#14151b" stroke-width="0.9" stroke-linejoin="round" stroke-linecap="round" />
<polygon points="463.8,481.3 468.3,477.3 468.3,485.3 463.8,489.3" fill="#3b3d48" stroke="#0c0e12" stroke-width="0.8" stroke-linejoin="round" />
<polygon points="500.5,430.0 524.0,409.0 524.5,493.0 500.5,512.0" fill="#51536a" stroke="#0c0e12" stroke-width="1.1" stroke-linejoin="round" />
<polygon points="476.0,424.0 497.5,403.0 524.0,406.0 500.5,430.0" fill="#3c3e44" stroke="#0c0e12" stroke-width="1.1" stroke-linejoin="round" />
<polygon points="476.0,424.0 500.5,430.0 500.5,511.5 488.2,511.5 487.8,514.9 476.0,512.0" fill="#484a50" stroke="#0c0e12" stroke-width="1.2" stroke-linejoin="round" />
<polyline points="477.7,422.3 486.5,424.5" fill="none" stroke="#0a0b0d" stroke-width="1.1" stroke-linejoin="round" stroke-linecap="round" />
<polyline points="480.8,419.3 489.6,421.5" fill="none" stroke="#0a0b0d" stroke-width="1.1" stroke-linejoin="round" stroke-linecap="round" />
<polyline points="483.9,416.3 492.7,418.5" fill="none" stroke="#0a0b0d" stroke-width="1.1" stroke-linejoin="round" stroke-linecap="round" />
<polyline points="487.0,413.3 495.8,415.5" fill="none" stroke="#0a0b0d" stroke-width="1.1" stroke-linejoin="round" stroke-linecap="round" />
<polyline points="490.0,410.3 498.9,412.4" fill="none" stroke="#0a0b0d" stroke-width="1.1" stroke-linejoin="round" stroke-linecap="round" />
<polyline points="493.1,407.3 501.9,409.4" fill="none" stroke="#0a0b0d" stroke-width="1.1" stroke-linejoin="round" stroke-linecap="round" />
<polyline points="496.2,404.3 505.0,406.4" fill="none" stroke="#0a0b0d" stroke-width="1.1" stroke-linejoin="round" stroke-linecap="round" />
<polyline points="486.3,426.5 508.6,404.3" fill="none" stroke="#0a0b0d" stroke-width="1.4" stroke-linejoin="round" stroke-linecap="round" />
<polygon points="491.7,425.0 510.3,406.5 520.3,407.7 501.1,427.2" fill="#3a3c44" stroke="#0c0e12" stroke-width="0.8" stroke-linejoin="round" />
<ellipse cx="498.7" cy="423.8" rx="2.7" ry="1.7" fill="#17181c" stroke="none" stroke-width="1" />
<ellipse cx="503.3" cy="419.2" rx="2.7" ry="1.7" fill="#17181c" stroke="none" stroke-width="1" />
<ellipse cx="507.9" cy="414.5" rx="2.7" ry="1.7" fill="#17181c" stroke="none" stroke-width="1" />
<ellipse cx="512.5" cy="409.9" rx="2.7" ry="1.7" fill="#17181c" stroke="none" stroke-width="1" />
<polygon points="497.5,403.0 501.9,400.0 507.8,402.5 506.8,406.0" fill="#2d2f35" stroke="#0c0e12" stroke-width="0.9" stroke-linejoin="round" />
<polygon points="515.9,405.0 519.1,402.5 525.2,404.5 525.2,410.0" fill="#2d2f35" stroke="#0c0e12" stroke-width="0.9" stroke-linejoin="round" />
<polygon points="488.7,437.2 492.0,435.7 499.5,438.4 499.5,462.2 488.7,460.0" fill="#20b436" stroke="#063c0c" stroke-width="0.9" stroke-linejoin="round" />
<polyline points="494.7,438.2 494.7,460.7" fill="none" stroke="#0c6a18" stroke-width="1" stroke-linejoin="round" stroke-linecap="round" />
<polyline points="489.3,439.7 494.1,440.9" fill="none" stroke="#0c6a18" stroke-width="0.8" stroke-linejoin="round" stroke-linecap="round" />
<polyline points="489.3,445.0 494.1,446.2" fill="none" stroke="#0c6a18" stroke-width="0.8" stroke-linejoin="round" stroke-linecap="round" />
<polyline points="489.3,450.2 494.1,451.4" fill="none" stroke="#0c6a18" stroke-width="0.8" stroke-linejoin="round" stroke-linecap="round" />
<polyline points="489.3,455.5 494.1,456.7" fill="none" stroke="#0c6a18" stroke-width="0.8" stroke-linejoin="round" stroke-linecap="round" />
<polygon points="488.7,477.2 492.0,475.7 499.5,478.4 499.5,503.6 488.7,501.4" fill="#20b436" stroke="#063c0c" stroke-width="0.9" stroke-linejoin="round" />
<polyline points="494.7,478.2 494.7,502.1" fill="none" stroke="#0c6a18" stroke-width="1" stroke-linejoin="round" stroke-linecap="round" />
<polyline points="489.3,479.7 494.1,480.9" fill="none" stroke="#0c6a18" stroke-width="0.8" stroke-linejoin="round" stroke-linecap="round" />
<polyline points="489.3,485.3 494.1,486.5" fill="none" stroke="#0c6a18" stroke-width="0.8" stroke-linejoin="round" stroke-linecap="round" />
<polyline points="489.3,490.9 494.1,492.1" fill="none" stroke="#0c6a18" stroke-width="0.8" stroke-linejoin="round" stroke-linecap="round" />
<polyline points="489.3,496.5 494.1,497.7" fill="none" stroke="#0c6a18" stroke-width="0.8" stroke-linejoin="round" stroke-linecap="round" />
<rect x="490.4" y="463.8" width="5.4" height="12.0" fill="#c8242a" stroke="#5a0a0e" stroke-width="0.6" rx="0" />
<polyline points="497.1,464.8 497.1,475.3" fill="none" stroke="#e8e8ee" stroke-width="1.4" stroke-linejoin="round" stroke-linecap="round" stroke-dasharray="1 1"/>
<rect x="490.0" y="475.8" width="6.5" height="1.4" fill="#3e4048" stroke="none" stroke-width="1" rx="0" />
<ellipse cx="493.3" cy="476.5" rx="2.2" ry="2.2" fill="#0d0e10" stroke="none" stroke-width="1" />
<polyline points="502.0,438.8 505.5,436.6" fill="none" stroke="#1a1b22" stroke-width="0.9" stroke-linejoin="round" stroke-linecap="round" />
<polyline points="502.0,442.8 505.5,440.6" fill="none" stroke="#1a1b22" stroke-width="0.9" stroke-linejoin="round" stroke-linecap="round" />
<polyline points="502.0,446.7 505.5,444.5" fill="none" stroke="#1a1b22" stroke-width="0.9" stroke-linejoin="round" stroke-linecap="round" />
<polyline points="502.0,450.7 505.5,448.5" fill="none" stroke="#1a1b22" stroke-width="0.9" stroke-linejoin="round" stroke-linecap="round" />
<polyline points="502.0,454.6 505.5,452.4" fill="none" stroke="#1a1b22" stroke-width="0.9" stroke-linejoin="round" stroke-linecap="round" />
<polyline points="502.0,474.0 505.5,471.8" fill="none" stroke="#1a1b22" stroke-width="0.9" stroke-linejoin="round" stroke-linecap="round" />
<polyline points="502.0,478.4 505.5,476.2" fill="none" stroke="#1a1b22" stroke-width="0.9" stroke-linejoin="round" stroke-linecap="round" />
<polyline points="502.0,482.8 505.5,480.6" fill="none" stroke="#1a1b22" stroke-width="0.9" stroke-linejoin="round" stroke-linecap="round" />
<polyline points="502.0,487.2 505.5,485.0" fill="none" stroke="#1a1b22" stroke-width="0.9" stroke-linejoin="round" stroke-linecap="round" />
<polyline points="502.0,491.6 505.5,489.4" fill="none" stroke="#1a1b22" stroke-width="0.9" stroke-linejoin="round" stroke-linecap="round" />
<polyline points="502.0,496.0 505.5,493.8" fill="none" stroke="#1a1b22" stroke-width="0.9" stroke-linejoin="round" stroke-linecap="round" />
<ellipse cx="504.5" cy="445.8" rx="0.7" ry="0.7" fill="#d8d8e6" stroke="none" stroke-width="1" />
<ellipse cx="504.0" cy="503.9" rx="0.7" ry="0.7" fill="#d8d8e6" stroke="none" stroke-width="1" />
<polyline points="512.0,485.0 516.0,480.0 518.0,482.0 521.0,476.0" fill="none" stroke="#14151b" stroke-width="1" stroke-linejoin="round" stroke-linecap="round" />
<polyline points="514.0,480.0 519.0,475.0 521.0,478.0" fill="none" stroke="#14151b" stroke-width="0.9" stroke-linejoin="round" stroke-linecap="round" />
<polygon points="520.0,489.0 524.5,485.0 524.5,493.0 520.0,497.0" fill="#3b3d48" stroke="#0c0e12" stroke-width="0.8" stroke-linejoin="round" />
<polygon points="442.2,580.8 470.3,553.0 470.8,656.5 442.2,687.3" fill="#51536a" stroke="#0c0e12" stroke-width="1.1" stroke-linejoin="round" />
<polygon points="406.2,572.0 437.8,544.7 470.3,550.0 442.2,580.8" fill="#3c3e44" stroke="#0c0e12" stroke-width="1.1" stroke-linejoin="round" />
<polygon points="406.2,572.0 442.2,580.8 442.2,686.8 424.2,685.4 423.5,688.5 406.2,684.5" fill="#484a50" stroke="#0c0e12" stroke-width="1.2" stroke-linejoin="round" />
<polyline points="408.7,569.8 421.7,573.0" fill="none" stroke="#0a0b0d" stroke-width="1.1" stroke-linejoin="round" stroke-linecap="round" />
<polyline points="411.7,567.2 424.7,570.4" fill="none" stroke="#0a0b0d" stroke-width="1.1" stroke-linejoin="round" stroke-linecap="round" />
<polyline points="414.8,564.6 427.7,567.8" fill="none" stroke="#0a0b0d" stroke-width="1.1" stroke-linejoin="round" stroke-linecap="round" />
<polyline points="417.8,562.0 430.7,565.2" fill="none" stroke="#0a0b0d" stroke-width="1.1" stroke-linejoin="round" stroke-linecap="round" />
<polyline points="420.8,559.4 433.8,562.6" fill="none" stroke="#0a0b0d" stroke-width="1.1" stroke-linejoin="round" stroke-linecap="round" />
<polyline points="423.8,556.8 436.8,559.9" fill="none" stroke="#0a0b0d" stroke-width="1.1" stroke-linejoin="round" stroke-linecap="round" />
<polyline points="426.8,554.2 439.8,557.3" fill="none" stroke="#0a0b0d" stroke-width="1.1" stroke-linejoin="round" stroke-linecap="round" />
<polyline points="429.9,551.6 442.8,554.7" fill="none" stroke="#0a0b0d" stroke-width="1.1" stroke-linejoin="round" stroke-linecap="round" />
<polyline points="432.9,548.9 445.8,552.1" fill="none" stroke="#0a0b0d" stroke-width="1.1" stroke-linejoin="round" stroke-linecap="round" />
<polyline points="435.9,546.3 448.9,549.5" fill="none" stroke="#0a0b0d" stroke-width="1.1" stroke-linejoin="round" stroke-linecap="round" />
<polyline points="421.3,575.7 451.4,546.9" fill="none" stroke="#0a0b0d" stroke-width="1.4" stroke-linejoin="round" stroke-linecap="round" />
<polygon points="429.0,573.9 453.3,550.0 465.8,552.1 442.5,577.1" fill="#3a3c44" stroke="#0c0e12" stroke-width="0.8" stroke-linejoin="round" />
<ellipse cx="438.6" cy="572.5" rx="4.0" ry="2.5" fill="#17181c" stroke="none" stroke-width="1" />
<ellipse cx="444.4" cy="566.6" rx="4.0" ry="2.5" fill="#17181c" stroke="none" stroke-width="1" />
<ellipse cx="450.2" cy="560.6" rx="4.0" ry="2.5" fill="#17181c" stroke="none" stroke-width="1" />
<ellipse cx="456.0" cy="554.6" rx="4.0" ry="2.5" fill="#17181c" stroke="none" stroke-width="1" />
<polygon points="437.8,544.7 444.3,541.7 452.9,544.2 451.5,547.7" fill="#2d2f35" stroke="#0c0e12" stroke-width="0.9" stroke-linejoin="round" />
<polygon points="458.4,549.0 463.1,546.5 471.5,548.5 471.5,554.0" fill="#2d2f35" stroke="#0c0e12" stroke-width="0.9" stroke-linejoin="round" />
<polygon points="424.9,586.5 429.7,585.0 440.8,587.7 440.8,614.1 424.9,611.9" fill="#20b436" stroke="#063c0c" stroke-width="0.9" stroke-linejoin="round" />
<polyline points="433.6,587.5 433.6,612.6" fill="none" stroke="#0c6a18" stroke-width="1" stroke-linejoin="round" stroke-linecap="round" />
<polyline points="425.5,589.0 432.8,590.2" fill="none" stroke="#0c6a18" stroke-width="0.8" stroke-linejoin="round" stroke-linecap="round" />
<polyline points="425.5,594.9 432.8,596.1" fill="none" stroke="#0c6a18" stroke-width="0.8" stroke-linejoin="round" stroke-linecap="round" />
<polyline points="425.5,600.8 432.8,602.0" fill="none" stroke="#0c6a18" stroke-width="0.8" stroke-linejoin="round" stroke-linecap="round" />
<polyline points="425.5,606.7 432.8,607.9" fill="none" stroke="#0c6a18" stroke-width="0.8" stroke-linejoin="round" stroke-linecap="round" />
<polygon points="424.9,649.0 429.7,647.5 440.8,650.2 440.8,677.1 424.9,674.9" fill="#20b436" stroke="#063c0c" stroke-width="0.9" stroke-linejoin="round" />
<polyline points="433.6,650.0 433.6,675.6" fill="none" stroke="#0c6a18" stroke-width="1" stroke-linejoin="round" stroke-linecap="round" />
<polyline points="425.5,651.5 432.8,652.7" fill="none" stroke="#0c6a18" stroke-width="0.8" stroke-linejoin="round" stroke-linecap="round" />
<polyline points="425.5,657.5 432.8,658.7" fill="none" stroke="#0c6a18" stroke-width="0.8" stroke-linejoin="round" stroke-linecap="round" />
<polyline points="425.5,663.5 432.8,664.7" fill="none" stroke="#0c6a18" stroke-width="0.8" stroke-linejoin="round" stroke-linecap="round" />
<polyline points="425.5,669.6 432.8,670.8" fill="none" stroke="#0c6a18" stroke-width="0.8" stroke-linejoin="round" stroke-linecap="round" />
<rect x="427.3" y="614.1" width="7.9" height="14.6" fill="#c8242a" stroke="#5a0a0e" stroke-width="0.6" rx="0" />
<polyline points="437.3,615.1 437.3,628.2" fill="none" stroke="#e8e8ee" stroke-width="1.4" stroke-linejoin="round" stroke-linecap="round" stroke-dasharray="1 1"/>
<rect x="426.8" y="628.7" width="9.5" height="20.2" fill="#3e4048" stroke="none" stroke-width="1" rx="0" />
<ellipse cx="431.6" cy="639.9" rx="3.2" ry="3.2" fill="#0d0e10" stroke="none" stroke-width="1" />
<polyline points="443.7,592.1 447.2,589.9" fill="none" stroke="#1a1b22" stroke-width="0.9" stroke-linejoin="round" stroke-linecap="round" />
<polyline points="443.7,597.1 447.2,594.9" fill="none" stroke="#1a1b22" stroke-width="0.9" stroke-linejoin="round" stroke-linecap="round" />
<polyline points="443.7,602.2 447.2,600.0" fill="none" stroke="#1a1b22" stroke-width="0.9" stroke-linejoin="round" stroke-linecap="round" />
<polyline points="443.7,607.3 447.2,605.1" fill="none" stroke="#1a1b22" stroke-width="0.9" stroke-linejoin="round" stroke-linecap="round" />
<polyline points="443.7,612.3 447.2,610.1" fill="none" stroke="#1a1b22" stroke-width="0.9" stroke-linejoin="round" stroke-linecap="round" />
<polyline points="443.7,637.1 447.2,634.9" fill="none" stroke="#1a1b22" stroke-width="0.9" stroke-linejoin="round" stroke-linecap="round" />
<polyline points="443.7,642.7 447.2,640.5" fill="none" stroke="#1a1b22" stroke-width="0.9" stroke-linejoin="round" stroke-linecap="round" />
<polyline points="443.7,648.3 447.2,646.1" fill="none" stroke="#1a1b22" stroke-width="0.9" stroke-linejoin="round" stroke-linecap="round" />
<polyline points="443.7,653.9 447.2,651.7" fill="none" stroke="#1a1b22" stroke-width="0.9" stroke-linejoin="round" stroke-linecap="round" />
<polyline points="443.7,659.6 447.2,657.4" fill="none" stroke="#1a1b22" stroke-width="0.9" stroke-linejoin="round" stroke-linecap="round" />
<polyline points="443.7,665.2 447.2,663.0" fill="none" stroke="#1a1b22" stroke-width="0.9" stroke-linejoin="round" stroke-linecap="round" />
<ellipse cx="446.2" cy="601.1" rx="0.7" ry="0.7" fill="#d8d8e6" stroke="none" stroke-width="1" />
<ellipse cx="445.7" cy="675.3" rx="0.7" ry="0.7" fill="#d8d8e6" stroke="none" stroke-width="1" />
<polyline points="458.3,648.5 462.3,643.5 464.3,645.5 467.3,639.5" fill="none" stroke="#14151b" stroke-width="1" stroke-linejoin="round" stroke-linecap="round" />
<polyline points="460.3,643.5 465.3,638.5 467.3,641.5" fill="none" stroke="#14151b" stroke-width="0.9" stroke-linejoin="round" stroke-linecap="round" />
<polygon points="466.3,652.5 470.8,648.5 470.8,656.5 466.3,660.5" fill="#3b3d48" stroke="#0c0e12" stroke-width="0.8" stroke-linejoin="round" />
<polygon points="501.4,588.8 529.5,561.0 530.0,664.5 501.4,695.3" fill="#51536a" stroke="#0c0e12" stroke-width="1.1" stroke-linejoin="round" />
<polygon points="465.4,580.0 497.0,552.7 529.5,558.0 501.4,588.8" fill="#3c3e44" stroke="#0c0e12" stroke-width="1.1" stroke-linejoin="round" />
<polygon points="465.4,580.0 501.4,588.8 501.4,694.8 483.4,693.4 482.7,696.5 465.4,692.5" fill="#484a50" stroke="#0c0e12" stroke-width="1.2" stroke-linejoin="round" />
<polyline points="467.9,577.8 480.9,581.0" fill="none" stroke="#0a0b0d" stroke-width="1.1" stroke-linejoin="round" stroke-linecap="round" />
<polyline points="470.9,575.2 483.9,578.4" fill="none" stroke="#0a0b0d" stroke-width="1.1" stroke-linejoin="round" stroke-linecap="round" />
<polyline points="474.0,572.6 486.9,575.8" fill="none" stroke="#0a0b0d" stroke-width="1.1" stroke-linejoin="round" stroke-linecap="round" />
<polyline points="477.0,570.0 489.9,573.2" fill="none" stroke="#0a0b0d" stroke-width="1.1" stroke-linejoin="round" stroke-linecap="round" />
<polyline points="480.0,567.4 493.0,570.6" fill="none" stroke="#0a0b0d" stroke-width="1.1" stroke-linejoin="round" stroke-linecap="round" />
<polyline points="483.0,564.8 496.0,567.9" fill="none" stroke="#0a0b0d" stroke-width="1.1" stroke-linejoin="round" stroke-linecap="round" />
<polyline points="486.0,562.2 499.0,565.3" fill="none" stroke="#0a0b0d" stroke-width="1.1" stroke-linejoin="round" stroke-linecap="round" />
<polyline points="489.1,559.6 502.0,562.7" fill="none" stroke="#0a0b0d" stroke-width="1.1" stroke-linejoin="round" stroke-linecap="round" />
<polyline points="492.1,556.9 505.0,560.1" fill="none" stroke="#0a0b0d" stroke-width="1.1" stroke-linejoin="round" stroke-linecap="round" />
<polyline points="495.1,554.3 508.1,557.5" fill="none" stroke="#0a0b0d" stroke-width="1.1" stroke-linejoin="round" stroke-linecap="round" />
<polyline points="480.5,583.7 510.6,554.9" fill="none" stroke="#0a0b0d" stroke-width="1.4" stroke-linejoin="round" stroke-linecap="round" />
<polygon points="488.2,581.9 512.5,558.0 525.0,560.1 501.7,585.1" fill="#3a3c44" stroke="#0c0e12" stroke-width="0.8" stroke-linejoin="round" />
<ellipse cx="497.8" cy="580.5" rx="4.0" ry="2.5" fill="#17181c" stroke="none" stroke-width="1" />
<ellipse cx="503.6" cy="574.6" rx="4.0" ry="2.5" fill="#17181c" stroke="none" stroke-width="1" />
<ellipse cx="509.4" cy="568.6" rx="4.0" ry="2.5" fill="#17181c" stroke="none" stroke-width="1" />
<ellipse cx="515.2" cy="562.6" rx="4.0" ry="2.5" fill="#17181c" stroke="none" stroke-width="1" />
<polygon points="497.0,552.7 503.5,549.7 512.1,552.2 510.7,555.7" fill="#2d2f35" stroke="#0c0e12" stroke-width="0.9" stroke-linejoin="round" />
<polygon points="517.6,557.0 522.3,554.5 530.7,556.5 530.7,562.0" fill="#2d2f35" stroke="#0c0e12" stroke-width="0.9" stroke-linejoin="round" />
<polygon points="484.1,594.5 488.9,593.0 500.0,595.7 500.0,622.1 484.1,619.9" fill="#20b436" stroke="#063c0c" stroke-width="0.9" stroke-linejoin="round" />
<polyline points="492.8,595.5 492.8,620.6" fill="none" stroke="#0c6a18" stroke-width="1" stroke-linejoin="round" stroke-linecap="round" />
<polyline points="484.7,597.0 492.0,598.2" fill="none" stroke="#0c6a18" stroke-width="0.8" stroke-linejoin="round" stroke-linecap="round" />
<polyline points="484.7,602.9 492.0,604.1" fill="none" stroke="#0c6a18" stroke-width="0.8" stroke-linejoin="round" stroke-linecap="round" />
<polyline points="484.7,608.8 492.0,610.0" fill="none" stroke="#0c6a18" stroke-width="0.8" stroke-linejoin="round" stroke-linecap="round" />
<polyline points="484.7,614.7 492.0,615.9" fill="none" stroke="#0c6a18" stroke-width="0.8" stroke-linejoin="round" stroke-linecap="round" />
<polygon points="484.1,657.0 488.9,655.5 500.0,658.2 500.0,685.1 484.1,682.9" fill="#20b436" stroke="#063c0c" stroke-width="0.9" stroke-linejoin="round" />
<polyline points="492.8,658.0 492.8,683.6" fill="none" stroke="#0c6a18" stroke-width="1" stroke-linejoin="round" stroke-linecap="round" />
<polyline points="484.7,659.5 492.0,660.7" fill="none" stroke="#0c6a18" stroke-width="0.8" stroke-linejoin="round" stroke-linecap="round" />
<polyline points="484.7,665.5 492.0,666.7" fill="none" stroke="#0c6a18" stroke-width="0.8" stroke-linejoin="round" stroke-linecap="round" />
<polyline points="484.7,671.5 492.0,672.7" fill="none" stroke="#0c6a18" stroke-width="0.8" stroke-linejoin="round" stroke-linecap="round" />
<polyline points="484.7,677.6 492.0,678.8" fill="none" stroke="#0c6a18" stroke-width="0.8" stroke-linejoin="round" stroke-linecap="round" />
<rect x="486.5" y="622.1" width="7.9" height="14.6" fill="#c8242a" stroke="#5a0a0e" stroke-width="0.6" rx="0" />
<polyline points="496.5,623.1 496.5,636.2" fill="none" stroke="#e8e8ee" stroke-width="1.4" stroke-linejoin="round" stroke-linecap="round" stroke-dasharray="1 1"/>
<rect x="486.0" y="636.7" width="9.5" height="20.2" fill="#3e4048" stroke="none" stroke-width="1" rx="0" />
<ellipse cx="490.8" cy="647.9" rx="3.2" ry="3.2" fill="#0d0e10" stroke="none" stroke-width="1" />
<polyline points="502.9,600.1 506.4,597.9" fill="none" stroke="#1a1b22" stroke-width="0.9" stroke-linejoin="round" stroke-linecap="round" />
<polyline points="502.9,605.1 506.4,602.9" fill="none" stroke="#1a1b22" stroke-width="0.9" stroke-linejoin="round" stroke-linecap="round" />
<polyline points="502.9,610.2 506.4,608.0" fill="none" stroke="#1a1b22" stroke-width="0.9" stroke-linejoin="round" stroke-linecap="round" />
<polyline points="502.9,615.3 506.4,613.1" fill="none" stroke="#1a1b22" stroke-width="0.9" stroke-linejoin="round" stroke-linecap="round" />
<polyline points="502.9,620.3 506.4,618.1" fill="none" stroke="#1a1b22" stroke-width="0.9" stroke-linejoin="round" stroke-linecap="round" />
<polyline points="502.9,645.1 506.4,642.9" fill="none" stroke="#1a1b22" stroke-width="0.9" stroke-linejoin="round" stroke-linecap="round" />
<polyline points="502.9,650.7 506.4,648.5" fill="none" stroke="#1a1b22" stroke-width="0.9" stroke-linejoin="round" stroke-linecap="round" />
<polyline points="502.9,656.3 506.4,654.1" fill="none" stroke="#1a1b22" stroke-width="0.9" stroke-linejoin="round" stroke-linecap="round" />
<polyline points="502.9,661.9 506.4,659.7" fill="none" stroke="#1a1b22" stroke-width="0.9" stroke-linejoin="round" stroke-linecap="round" />
<polyline points="502.9,667.6 506.4,665.4" fill="none" stroke="#1a1b22" stroke-width="0.9" stroke-linejoin="round" stroke-linecap="round" />
<polyline points="502.9,673.2 506.4,671.0" fill="none" stroke="#1a1b22" stroke-width="0.9" stroke-linejoin="round" stroke-linecap="round" />
<ellipse cx="505.4" cy="609.1" rx="0.7" ry="0.7" fill="#d8d8e6" stroke="none" stroke-width="1" />
<ellipse cx="504.9" cy="683.3" rx="0.7" ry="0.7" fill="#d8d8e6" stroke="none" stroke-width="1" />
<polyline points="517.5,656.5 521.5,651.5 523.5,653.5 526.5,647.5" fill="none" stroke="#14151b" stroke-width="1" stroke-linejoin="round" stroke-linecap="round" />
<polyline points="519.5,651.5 524.5,646.5 526.5,649.5" fill="none" stroke="#14151b" stroke-width="0.9" stroke-linejoin="round" stroke-linecap="round" />
<polygon points="525.5,660.5 530.0,656.5 530.0,664.5 525.5,668.5" fill="#3b3d48" stroke="#0c0e12" stroke-width="0.8" stroke-linejoin="round" />
<polygon points="560.4,596.3 588.5,568.5 589.0,672.0 560.4,703.3" fill="#51536a" stroke="#0c0e12" stroke-width="1.1" stroke-linejoin="round" />
<polygon points="524.4,587.5 556.0,560.2 588.5,565.5 560.4,596.3" fill="#3c3e44" stroke="#0c0e12" stroke-width="1.1" stroke-linejoin="round" />
<polygon points="524.4,587.5 560.4,596.3 560.4,702.8 542.4,701.4 541.7,704.5 524.4,700.5" fill="#484a50" stroke="#0c0e12" stroke-width="1.2" stroke-linejoin="round" />
<polyline points="526.9,585.3 539.9,588.5" fill="none" stroke="#0a0b0d" stroke-width="1.1" stroke-linejoin="round" stroke-linecap="round" />
<polyline points="529.9,582.7 542.9,585.9" fill="none" stroke="#0a0b0d" stroke-width="1.1" stroke-linejoin="round" stroke-linecap="round" />
<polyline points="533.0,580.1 545.9,583.3" fill="none" stroke="#0a0b0d" stroke-width="1.1" stroke-linejoin="round" stroke-linecap="round" />
<polyline points="536.0,577.5 548.9,580.7" fill="none" stroke="#0a0b0d" stroke-width="1.1" stroke-linejoin="round" stroke-linecap="round" />
<polyline points="539.0,574.9 552.0,578.1" fill="none" stroke="#0a0b0d" stroke-width="1.1" stroke-linejoin="round" stroke-linecap="round" />
<polyline points="542.0,572.3 555.0,575.4" fill="none" stroke="#0a0b0d" stroke-width="1.1" stroke-linejoin="round" stroke-linecap="round" />
<polyline points="545.0,569.7 558.0,572.8" fill="none" stroke="#0a0b0d" stroke-width="1.1" stroke-linejoin="round" stroke-linecap="round" />
<polyline points="548.1,567.1 561.0,570.2" fill="none" stroke="#0a0b0d" stroke-width="1.1" stroke-linejoin="round" stroke-linecap="round" />
<polyline points="551.1,564.4 564.0,567.6" fill="none" stroke="#0a0b0d" stroke-width="1.1" stroke-linejoin="round" stroke-linecap="round" />
<polyline points="554.1,561.8 567.1,565.0" fill="none" stroke="#0a0b0d" stroke-width="1.1" stroke-linejoin="round" stroke-linecap="round" />
<polyline points="539.5,591.2 569.6,562.4" fill="none" stroke="#0a0b0d" stroke-width="1.4" stroke-linejoin="round" stroke-linecap="round" />
<polygon points="547.2,589.4 571.5,565.5 584.0,567.6 560.7,592.6" fill="#3a3c44" stroke="#0c0e12" stroke-width="0.8" stroke-linejoin="round" />
<ellipse cx="556.8" cy="588.0" rx="4.0" ry="2.5" fill="#17181c" stroke="none" stroke-width="1" />
<ellipse cx="562.6" cy="582.1" rx="4.0" ry="2.5" fill="#17181c" stroke="none" stroke-width="1" />
<ellipse cx="568.4" cy="576.1" rx="4.0" ry="2.5" fill="#17181c" stroke="none" stroke-width="1" />
<ellipse cx="574.2" cy="570.1" rx="4.0" ry="2.5" fill="#17181c" stroke="none" stroke-width="1" />
<polygon points="556.0,560.2 562.5,557.2 571.1,559.7 569.7,563.2" fill="#2d2f35" stroke="#0c0e12" stroke-width="0.9" stroke-linejoin="round" />
<polygon points="576.6,564.5 581.3,562.0 589.7,564.0 589.7,569.5" fill="#2d2f35" stroke="#0c0e12" stroke-width="0.9" stroke-linejoin="round" />
<polygon points="543.1,602.1 547.9,600.6 559.0,603.3 559.0,629.8 543.1,627.6" fill="#20b436" stroke="#063c0c" stroke-width="0.9" stroke-linejoin="round" />
<polyline points="551.8,603.1 551.8,628.3" fill="none" stroke="#0c6a18" stroke-width="1" stroke-linejoin="round" stroke-linecap="round" />
<polyline points="543.7,604.6 551.0,605.8" fill="none" stroke="#0c6a18" stroke-width="0.8" stroke-linejoin="round" stroke-linecap="round" />
<polyline points="543.7,610.5 551.0,611.7" fill="none" stroke="#0c6a18" stroke-width="0.8" stroke-linejoin="round" stroke-linecap="round" />
<polyline points="543.7,616.4 551.0,617.6" fill="none" stroke="#0c6a18" stroke-width="0.8" stroke-linejoin="round" stroke-linecap="round" />
<polyline points="543.7,622.3 551.0,623.5" fill="none" stroke="#0c6a18" stroke-width="0.8" stroke-linejoin="round" stroke-linecap="round" />
<polygon points="543.1,664.8 547.9,663.3 559.0,666.0 559.0,693.0 543.1,690.8" fill="#20b436" stroke="#063c0c" stroke-width="0.9" stroke-linejoin="round" />
<polyline points="551.8,665.8 551.8,691.5" fill="none" stroke="#0c6a18" stroke-width="1" stroke-linejoin="round" stroke-linecap="round" />
<polyline points="543.7,667.3 551.0,668.5" fill="none" stroke="#0c6a18" stroke-width="0.8" stroke-linejoin="round" stroke-linecap="round" />
<polyline points="543.7,673.4 551.0,674.6" fill="none" stroke="#0c6a18" stroke-width="0.8" stroke-linejoin="round" stroke-linecap="round" />
<polyline points="543.7,679.4 551.0,680.6" fill="none" stroke="#0c6a18" stroke-width="0.8" stroke-linejoin="round" stroke-linecap="round" />
<polyline points="543.7,685.5 551.0,686.7" fill="none" stroke="#0c6a18" stroke-width="0.8" stroke-linejoin="round" stroke-linecap="round" />
<rect x="545.5" y="629.8" width="7.9" height="14.7" fill="#c8242a" stroke="#5a0a0e" stroke-width="0.6" rx="0" />
<polyline points="555.5,630.8 555.5,644.0" fill="none" stroke="#e8e8ee" stroke-width="1.4" stroke-linejoin="round" stroke-linecap="round" stroke-dasharray="1 1"/>
<rect x="545.0" y="644.5" width="9.5" height="20.3" fill="#3e4048" stroke="none" stroke-width="1" rx="0" />
<ellipse cx="549.8" cy="655.6" rx="3.2" ry="3.2" fill="#0d0e10" stroke="none" stroke-width="1" />
<polyline points="561.9,607.6 565.4,605.4" fill="none" stroke="#1a1b22" stroke-width="0.9" stroke-linejoin="round" stroke-linecap="round" />
<polyline points="561.9,612.7 565.4,610.5" fill="none" stroke="#1a1b22" stroke-width="0.9" stroke-linejoin="round" stroke-linecap="round" />
<polyline points="561.9,617.8 565.4,615.6" fill="none" stroke="#1a1b22" stroke-width="0.9" stroke-linejoin="round" stroke-linecap="round" />
<polyline points="561.9,622.9 565.4,620.7" fill="none" stroke="#1a1b22" stroke-width="0.9" stroke-linejoin="round" stroke-linecap="round" />
<polyline points="561.9,628.0 565.4,625.8" fill="none" stroke="#1a1b22" stroke-width="0.9" stroke-linejoin="round" stroke-linecap="round" />
<polyline points="561.9,652.8 565.4,650.6" fill="none" stroke="#1a1b22" stroke-width="0.9" stroke-linejoin="round" stroke-linecap="round" />
<polyline points="561.9,658.5 565.4,656.3" fill="none" stroke="#1a1b22" stroke-width="0.9" stroke-linejoin="round" stroke-linecap="round" />
<polyline points="561.9,664.1 565.4,661.9" fill="none" stroke="#1a1b22" stroke-width="0.9" stroke-linejoin="round" stroke-linecap="round" />
<polyline points="561.9,669.8 565.4,667.6" fill="none" stroke="#1a1b22" stroke-width="0.9" stroke-linejoin="round" stroke-linecap="round" />
<polyline points="561.9,675.4 565.4,673.2" fill="none" stroke="#1a1b22" stroke-width="0.9" stroke-linejoin="round" stroke-linecap="round" />
<polyline points="561.9,681.1 565.4,678.9" fill="none" stroke="#1a1b22" stroke-width="0.9" stroke-linejoin="round" stroke-linecap="round" />
<ellipse cx="564.4" cy="616.7" rx="0.7" ry="0.7" fill="#d8d8e6" stroke="none" stroke-width="1" />
<ellipse cx="563.9" cy="691.2" rx="0.7" ry="0.7" fill="#d8d8e6" stroke="none" stroke-width="1" />
<polyline points="576.5,664.0 580.5,659.0 582.5,661.0 585.5,655.0" fill="none" stroke="#14151b" stroke-width="1" stroke-linejoin="round" stroke-linecap="round" />
<polyline points="578.5,659.0 583.5,654.0 585.5,657.0" fill="none" stroke="#14151b" stroke-width="0.9" stroke-linejoin="round" stroke-linecap="round" />
<polygon points="584.5,668.0 589.0,664.0 589.0,672.0 584.5,676.0" fill="#3b3d48" stroke="#0c0e12" stroke-width="0.8" stroke-linejoin="round" />
<polygon points="545.5,422.5 589.7,427.6 590.6,491.6 587.0,494.5 551.5,492.5 544.7,484.0" fill="#26286e" stroke="#0c0e12" stroke-width="1.2" stroke-linejoin="round" />
<polyline points="547.5,426.5 588.0,431.2" fill="none" stroke="#4244b4" stroke-width="4" stroke-linejoin="round" stroke-linecap="round" />
<polyline points="547.5,427.5 588.0,432.2" fill="none" stroke="#0c0c30" stroke-width="2.4" stroke-linejoin="round" stroke-linecap="round" stroke-dasharray="1.2 2.2"/>
<polyline points="548.5,433.0 548.5,482.0" fill="none" stroke="#4244b4" stroke-width="4.5" stroke-linejoin="round" stroke-linecap="round" />
<polyline points="549.5,433.0 549.5,482.0" fill="none" stroke="#0c0c30" stroke-width="2.4" stroke-linejoin="round" stroke-linecap="round" stroke-dasharray="1.2 2.2"/>
<polyline points="553.0,488.5 586.0,490.8" fill="none" stroke="#4244b4" stroke-width="4" stroke-linejoin="round" stroke-linecap="round" />
<polyline points="553.0,488.0 586.0,490.3" fill="none" stroke="#0c0c30" stroke-width="2.4" stroke-linejoin="round" stroke-linecap="round" stroke-dasharray="1.2 2.2"/>
<polyline points="547.5,425.5 588.0,430.2" fill="none" stroke="#e8e8f8" stroke-width="1" stroke-linejoin="round" stroke-linecap="round" stroke-dasharray="1 2.6"/>
<polyline points="547.0,434.0 547.0,482.0" fill="none" stroke="#e8e8f8" stroke-width="1" stroke-linejoin="round" stroke-linecap="round" stroke-dasharray="1 2.6"/>
<polyline points="553.0,490.5 586.0,492.8" fill="none" stroke="#e8e8f8" stroke-width="1" stroke-linejoin="round" stroke-linecap="round" stroke-dasharray="1 2.6"/>
<polygon points="552.5,432.5 578.5,436.0 578.5,486.5 552.5,483.0" fill="#bf4412" stroke="#0c0e12" stroke-width="0.9" stroke-linejoin="round" />
<rect x="563.0" y="439.0" width="5.5" height="10.0" fill="#3a3c44" stroke="#0c0e12" stroke-width="0.6" rx="0" />
<rect x="563.0" y="451.0" width="5.5" height="9.0" fill="#3a3c44" stroke="#0c0e12" stroke-width="0.6" rx="0" />
<rect x="564.5" y="462.0" width="3.5" height="6.0" fill="#3a3c44" stroke="#0c0e12" stroke-width="0.6" rx="0" />
<polygon points="577.6,440.0 580.0,437.5 586.0,438.5 586.0,472.0 583.5,474.5 577.6,473.5" fill="#45474d" stroke="#0c0e12" stroke-width="0.9" stroke-linejoin="round" />
<polygon points="586.0,436.5 592.0,438.0 595.0,443.0 595.0,470.0 592.0,475.0 586.0,474.0" fill="#4a4c52" stroke="#0c0e12" stroke-width="0.9" stroke-linejoin="round" />
<polygon points="587.5,441.5 591.5,442.5 593.5,446.0 593.5,468.0 591.5,471.0 587.5,470.0" fill="#c4c6d2" stroke="#0c0e12" stroke-width="0.8" stroke-linejoin="round" />
<ellipse cx="589.5" cy="437.5" rx="1.6" ry="1.6" fill="#8a8c96" stroke="#0c0e12" stroke-width="0.6" />
<ellipse cx="590.0" cy="476.0" rx="1.6" ry="1.6" fill="#8a8c96" stroke="#0c0e12" stroke-width="0.6" />
<polygon points="560.5,474.0 565.0,470.0 576.0,471.5 576.0,485.5 571.5,489.5 560.5,488.0" fill="#8688f0" stroke="#0c0e12" stroke-width="0.9" stroke-linejoin="round" />
<polyline points="560.5,474.0 571.5,475.5 576.0,471.5" fill="none" stroke="#0c0e12" stroke-width="0.8" stroke-linejoin="round" stroke-linecap="round" />
<polyline points="571.5,475.5 571.5,489.5" fill="none" stroke="#0c0e12" stroke-width="0.8" stroke-linejoin="round" stroke-linecap="round" />
<polygon points="561.3,475.0 570.8,476.3 570.8,488.5 561.3,487.2" fill="#9496f8" stroke="none" stroke-width="1" stroke-linejoin="round" />
<polygon points="577.5,478.0 587.0,479.2 587.0,488.5 577.5,487.3" fill="#d8d9e4" stroke="#0c0e12" stroke-width="0.8" stroke-linejoin="round" />
<ellipse cx="587.5" cy="491.0" rx="1.8" ry="1.8" fill="#55575f" stroke="#0c0e12" stroke-width="0.6" />
<polygon points="664.5,719.7 680.0,722.5 664.5,737.0" fill="#d8def8" stroke="#0c0e12" stroke-width="1" stroke-linejoin="round" />
<polygon points="649.5,751.0 679.2,722.2 826.3,740.3 794.5,770.5" fill="#c8d0f0" stroke="#0c0e12" stroke-width="1.2" stroke-linejoin="round" />
<polyline points="681.0,721.7 826.0,739.7" fill="none" stroke="#0c0e12" stroke-width="1.2" stroke-linejoin="round" stroke-linecap="round" stroke-dasharray="4 1.4"/>
<polygon points="794.5,770.5 826.5,740.5 827.0,778.0 795.3,807.3" fill="#d4daf6" stroke="#0c0e12" stroke-width="1.2" stroke-linejoin="round" />
<ellipse cx="822.5" cy="748.5" rx="0.9" ry="1.4" fill="#444" stroke="#0c0e12" stroke-width="0.5" />
<ellipse cx="798.3" cy="775.0" rx="0.9" ry="1.4" fill="#444" stroke="#0c0e12" stroke-width="0.5" />
<polygon points="632.8,750.0 794.5,770.5 795.3,807.3 632.8,787.1" fill="#d0d8f8" stroke="#0c0e12" stroke-width="1.3" stroke-linejoin="round" />
<polyline points="634.0,751.1 794.0,771.5" fill="none" stroke="#0c0e12" stroke-width="1.6" stroke-linejoin="round" stroke-linecap="round" />
<ellipse cx="657.7" cy="758.0" rx="2.6" ry="2.6" fill="#aab0d0" stroke="#0c0e12" stroke-width="0.9" />
<polyline points="655.8,758.0 659.6,758.0" fill="none" stroke="#0c0e12" stroke-width="0.8" stroke-linejoin="round" stroke-linecap="round" />
<ellipse cx="749.0" cy="770.0" rx="2.6" ry="2.6" fill="#aab0d0" stroke="#0c0e12" stroke-width="0.9" />
<polyline points="747.2,770.0 750.8,770.0" fill="none" stroke="#0c0e12" stroke-width="0.8" stroke-linejoin="round" stroke-linecap="round" />
<polyline points="638.8,763.0 638.8,781.0" fill="none" stroke="#0c0e12" stroke-width="3.3" stroke-linejoin="round" stroke-linecap="round" />
<polyline points="644.8,763.7 644.8,781.7" fill="none" stroke="#0c0e12" stroke-width="3.3" stroke-linejoin="round" stroke-linecap="round" />
<polyline points="650.3,764.4 650.3,782.4" fill="none" stroke="#0c0e12" stroke-width="3.3" stroke-linejoin="round" stroke-linecap="round" />
<ellipse cx="652.5" cy="779.5" rx="1.0" ry="1.8" fill="#0c0e12" stroke="none" stroke-width="1" />
<ellipse cx="656.5" cy="783.5" rx="1.3" ry="1.3" fill="none" stroke="#0c0e12" stroke-width="1" />
<polyline points="662.0,779.0 662.0,784.0" fill="none" stroke="#0c0e12" stroke-width="2" stroke-linejoin="round" stroke-linecap="round" />
<polyline points="707.0,772.5 707.0,789.5" fill="none" stroke="#0c0e12" stroke-width="2.4" stroke-linejoin="round" stroke-linecap="round" />
<polyline points="712.0,773.5 712.0,790.5" fill="none" stroke="#0c0e12" stroke-width="2.4" stroke-linejoin="round" stroke-linecap="round" />
<polyline points="707.0,773.5 707.0,788.5" fill="none" stroke="#a8aed0" stroke-width="0.6" stroke-linejoin="round" stroke-linecap="round" />
<polyline points="712.0,774.5 712.0,789.5" fill="none" stroke="#a8aed0" stroke-width="0.6" stroke-linejoin="round" stroke-linecap="round" />
<polygon points="723.5,786.5 736.0,788.3 736.0,794.5 723.5,792.7" fill="#25161a" stroke="#0c0e12" stroke-width="0.6" stroke-linejoin="round" />
<polyline points="727.0,790.5 733.0,791.5" fill="none" stroke="#d02222" stroke-width="1.6" stroke-linejoin="round" stroke-linecap="round" />
<polyline points="765.5,792.5 765.5,797.0" fill="none" stroke="#0c0e12" stroke-width="2" stroke-linejoin="round" stroke-linecap="round" />
<ellipse cx="770.5" cy="798.5" rx="1.2" ry="1.2" fill="none" stroke="#0c0e12" stroke-width="1" />
<polyline points="775.5,794.0 775.5,799.0" fill="none" stroke="#0c0e12" stroke-width="2" stroke-linejoin="round" stroke-linecap="round" />
<polyline points="658.8,790.0 658.8,786.5 661.2,786.7 661.2,790.3" fill="none" stroke="#0c0e12" stroke-width="1.2" stroke-linejoin="round" stroke-linecap="round" />
<polyline points="663.0,790.5 663.0,787.0 665.5,787.2 665.5,790.8" fill="none" stroke="#0c0e12" stroke-width="1.2" stroke-linejoin="round" stroke-linecap="round" />
<polyline points="667.3,791.1 667.3,787.6 669.7,787.8 669.7,791.4" fill="none" stroke="#0c0e12" stroke-width="1.2" stroke-linejoin="round" stroke-linecap="round" />
<polyline points="671.5,791.6 671.5,788.1 674.0,788.3 674.0,791.9" fill="none" stroke="#0c0e12" stroke-width="1.2" stroke-linejoin="round" stroke-linecap="round" />
<polyline points="675.8,792.2 675.8,788.7 678.2,788.9 678.2,792.5" fill="none" stroke="#0c0e12" stroke-width="1.2" stroke-linejoin="round" stroke-linecap="round" />
<polyline points="680.0,792.7 680.0,789.2 682.5,789.4 682.5,793.0" fill="none" stroke="#0c0e12" stroke-width="1.2" stroke-linejoin="round" stroke-linecap="round" />
<polyline points="684.3,793.3 684.3,789.8 686.7,790.0 686.7,793.6" fill="none" stroke="#0c0e12" stroke-width="1.2" stroke-linejoin="round" stroke-linecap="round" />
<polyline points="688.5,793.8 688.5,790.3 691.0,790.5 691.0,794.1" fill="none" stroke="#0c0e12" stroke-width="1.2" stroke-linejoin="round" stroke-linecap="round" />
<polyline points="692.8,794.4 692.8,790.9 695.2,791.1 695.2,794.7" fill="none" stroke="#0c0e12" stroke-width="1.2" stroke-linejoin="round" stroke-linecap="round" />
<polyline points="697.0,794.9 697.0,791.4 699.5,791.6 699.5,795.2" fill="none" stroke="#0c0e12" stroke-width="1.2" stroke-linejoin="round" stroke-linecap="round" />
<polyline points="701.3,795.5 701.3,792.0 703.7,792.2 703.7,795.8" fill="none" stroke="#0c0e12" stroke-width="1.2" stroke-linejoin="round" stroke-linecap="round" />
<polyline points="705.5,796.0 705.5,792.5 708.0,792.7 708.0,796.3" fill="none" stroke="#0c0e12" stroke-width="1.2" stroke-linejoin="round" stroke-linecap="round" />
<polyline points="709.8,796.5 709.8,793.0 712.2,793.2 712.2,796.8" fill="none" stroke="#0c0e12" stroke-width="1.2" stroke-linejoin="round" stroke-linecap="round" />
<polyline points="714.0,797.1 714.0,793.6 716.5,793.8 716.5,797.4" fill="none" stroke="#0c0e12" stroke-width="1.2" stroke-linejoin="round" stroke-linecap="round" />
<polyline points="718.3,797.6 718.3,794.1 720.7,794.3 720.7,797.9" fill="none" stroke="#0c0e12" stroke-width="1.2" stroke-linejoin="round" stroke-linecap="round" />
<polyline points="722.5,798.2 722.5,794.7 725.0,794.9 725.0,798.5" fill="none" stroke="#0c0e12" stroke-width="1.2" stroke-linejoin="round" stroke-linecap="round" />
<polyline points="726.8,798.7 726.8,795.2 729.2,795.4 729.2,799.0" fill="none" stroke="#0c0e12" stroke-width="1.2" stroke-linejoin="round" stroke-linecap="round" />
<polyline points="731.0,799.3 731.0,795.8 733.5,796.0 733.5,799.6" fill="none" stroke="#0c0e12" stroke-width="1.2" stroke-linejoin="round" stroke-linecap="round" />
<polyline points="735.3,799.8 735.3,796.3 737.7,796.5 737.7,800.1" fill="none" stroke="#0c0e12" stroke-width="1.2" stroke-linejoin="round" stroke-linecap="round" />
<polyline points="739.5,800.4 739.5,796.9 742.0,797.1 742.0,800.7" fill="none" stroke="#0c0e12" stroke-width="1.2" stroke-linejoin="round" stroke-linecap="round" />
<polyline points="743.8,800.9 743.8,797.4 746.2,797.6 746.2,801.2" fill="none" stroke="#0c0e12" stroke-width="1.2" stroke-linejoin="round" stroke-linecap="round" />
<polyline points="748.0,801.4 748.0,797.9 750.5,798.1 750.5,801.7" fill="none" stroke="#0c0e12" stroke-width="1.2" stroke-linejoin="round" stroke-linecap="round" />
<polyline points="752.3,802.0 752.3,798.5 754.7,798.7 754.7,802.3" fill="none" stroke="#0c0e12" stroke-width="1.2" stroke-linejoin="round" stroke-linecap="round" />
<polyline points="756.5,802.5 756.5,799.0 759.0,799.2 759.0,802.8" fill="none" stroke="#0c0e12" stroke-width="1.2" stroke-linejoin="round" stroke-linecap="round" />
<polyline points="760.8,803.1 760.8,799.6 763.2,799.8 763.2,803.4" fill="none" stroke="#0c0e12" stroke-width="1.2" stroke-linejoin="round" stroke-linecap="round" />
<polyline points="765.0,803.6 765.0,800.1 767.5,800.3 767.5,803.9" fill="none" stroke="#0c0e12" stroke-width="1.2" stroke-linejoin="round" stroke-linecap="round" />
<polyline points="769.3,804.2 769.3,800.7 771.7,800.9 771.7,804.5" fill="none" stroke="#0c0e12" stroke-width="1.2" stroke-linejoin="round" stroke-linecap="round" />
<polyline points="657.0,790.3 773.0,805.0" fill="none" stroke="#0c0e12" stroke-width="1.3" stroke-linejoin="round" stroke-linecap="round" />
<polyline points="674.0,735.2 680.6,729.0" fill="none" stroke="#0c0e12" stroke-width="2.9" stroke-linejoin="round" stroke-linecap="round" />
<polyline points="679.2,735.9 685.8,729.6" fill="none" stroke="#0c0e12" stroke-width="2.9" stroke-linejoin="round" stroke-linecap="round" />
<polyline points="684.4,736.5 691.0,730.3" fill="none" stroke="#0c0e12" stroke-width="2.9" stroke-linejoin="round" stroke-linecap="round" />
<polyline points="689.6,737.2 696.2,731.0" fill="none" stroke="#0c0e12" stroke-width="2.9" stroke-linejoin="round" stroke-linecap="round" />
<polyline points="694.8,737.8 701.4,731.6" fill="none" stroke="#0c0e12" stroke-width="2.9" stroke-linejoin="round" stroke-linecap="round" />
<polyline points="700.0,738.5 706.6,732.2" fill="none" stroke="#0c0e12" stroke-width="2.9" stroke-linejoin="round" stroke-linecap="round" />
<polyline points="660.5,748.8 667.1,742.6" fill="none" stroke="#0c0e12" stroke-width="2.9" stroke-linejoin="round" stroke-linecap="round" />
<polyline points="665.7,749.4 672.3,743.2" fill="none" stroke="#0c0e12" stroke-width="2.9" stroke-linejoin="round" stroke-linecap="round" />
<polyline points="670.9,750.1 677.5,743.9" fill="none" stroke="#0c0e12" stroke-width="2.9" stroke-linejoin="round" stroke-linecap="round" />
<polyline points="676.1,750.8 682.7,744.5" fill="none" stroke="#0c0e12" stroke-width="2.9" stroke-linejoin="round" stroke-linecap="round" />
<polyline points="681.3,751.4 687.9,745.2" fill="none" stroke="#0c0e12" stroke-width="2.9" stroke-linejoin="round" stroke-linecap="round" />
<polyline points="686.5,752.0 693.1,745.8" fill="none" stroke="#0c0e12" stroke-width="2.9" stroke-linejoin="round" stroke-linecap="round" />
<ellipse cx="784.2" cy="745.5" rx="24.0" ry="8.6" fill="#30333c" stroke="#0c0e12" stroke-width="1" />
<ellipse cx="784.2" cy="745.5" rx="19.0" ry="6.6" fill="#aab0cc" stroke="#22252c" stroke-width="1.6" stroke-dasharray="2.4 1.4"/>
<ellipse cx="784.2" cy="745.5" rx="13.5" ry="4.6" fill="#c4cae6" stroke="#30343f" stroke-width="2" stroke-dasharray="2 1.8"/>
<ellipse cx="784.2" cy="745.5" rx="6.0" ry="2.1" fill="#e4e8fa" stroke="#5a5e6e" stroke-width="0.8" />
<ellipse cx="757.5" cy="749.5" rx="1.8" ry="1.2" fill="#333" stroke="none" stroke-width="1" />
<polygon points="664.5,650.2 680.0,653.0 664.5,667.5" fill="#d8def8" stroke="#0c0e12" stroke-width="1" stroke-linejoin="round" />
<polygon points="649.5,681.5 679.2,652.7 826.3,670.8 794.5,701.0" fill="#c8d0f0" stroke="#0c0e12" stroke-width="1.2" stroke-linejoin="round" />
<polyline points="681.0,652.2 826.0,670.2" fill="none" stroke="#0c0e12" stroke-width="1.2" stroke-linejoin="round" stroke-linecap="round" stroke-dasharray="4 1.4"/>
<polygon points="794.5,701.0 826.5,671.0 827.0,708.5 795.3,737.8" fill="#d4daf6" stroke="#0c0e12" stroke-width="1.2" stroke-linejoin="round" />
<ellipse cx="822.5" cy="679.0" rx="0.9" ry="1.4" fill="#444" stroke="#0c0e12" stroke-width="0.5" />
<ellipse cx="798.3" cy="705.5" rx="0.9" ry="1.4" fill="#444" stroke="#0c0e12" stroke-width="0.5" />
<polygon points="632.8,680.5 794.5,701.0 795.3,737.8 632.8,717.6" fill="#d0d8f8" stroke="#0c0e12" stroke-width="1.3" stroke-linejoin="round" />
<polyline points="634.0,681.6 794.0,702.0" fill="none" stroke="#0c0e12" stroke-width="1.6" stroke-linejoin="round" stroke-linecap="round" />
<ellipse cx="657.7" cy="688.5" rx="2.6" ry="2.6" fill="#aab0d0" stroke="#0c0e12" stroke-width="0.9" />
<polyline points="655.8,688.5 659.6,688.5" fill="none" stroke="#0c0e12" stroke-width="0.8" stroke-linejoin="round" stroke-linecap="round" />
<ellipse cx="749.0" cy="700.5" rx="2.6" ry="2.6" fill="#aab0d0" stroke="#0c0e12" stroke-width="0.9" />
<polyline points="747.2,700.5 750.8,700.5" fill="none" stroke="#0c0e12" stroke-width="0.8" stroke-linejoin="round" stroke-linecap="round" />
<polyline points="638.8,693.5 638.8,711.5" fill="none" stroke="#0c0e12" stroke-width="3.3" stroke-linejoin="round" stroke-linecap="round" />
<polyline points="644.8,694.2 644.8,712.2" fill="none" stroke="#0c0e12" stroke-width="3.3" stroke-linejoin="round" stroke-linecap="round" />
<polyline points="650.3,694.9 650.3,712.9" fill="none" stroke="#0c0e12" stroke-width="3.3" stroke-linejoin="round" stroke-linecap="round" />
<ellipse cx="652.5" cy="710.0" rx="1.0" ry="1.8" fill="#0c0e12" stroke="none" stroke-width="1" />
<ellipse cx="656.5" cy="714.0" rx="1.3" ry="1.3" fill="none" stroke="#0c0e12" stroke-width="1" />
<polyline points="662.0,709.5 662.0,714.5" fill="none" stroke="#0c0e12" stroke-width="2" stroke-linejoin="round" stroke-linecap="round" />
<polyline points="707.0,703.0 707.0,720.0" fill="none" stroke="#0c0e12" stroke-width="2.4" stroke-linejoin="round" stroke-linecap="round" />
<polyline points="712.0,704.0 712.0,721.0" fill="none" stroke="#0c0e12" stroke-width="2.4" stroke-linejoin="round" stroke-linecap="round" />
<polyline points="707.0,704.0 707.0,719.0" fill="none" stroke="#a8aed0" stroke-width="0.6" stroke-linejoin="round" stroke-linecap="round" />
<polyline points="712.0,705.0 712.0,720.0" fill="none" stroke="#a8aed0" stroke-width="0.6" stroke-linejoin="round" stroke-linecap="round" />
<polygon points="723.5,717.0 736.0,718.8 736.0,725.0 723.5,723.2" fill="#25161a" stroke="#0c0e12" stroke-width="0.6" stroke-linejoin="round" />
<polyline points="727.0,721.0 733.0,722.0" fill="none" stroke="#d02222" stroke-width="1.6" stroke-linejoin="round" stroke-linecap="round" />
<polyline points="765.5,723.0 765.5,727.5" fill="none" stroke="#0c0e12" stroke-width="2" stroke-linejoin="round" stroke-linecap="round" />
<ellipse cx="770.5" cy="729.0" rx="1.2" ry="1.2" fill="none" stroke="#0c0e12" stroke-width="1" />
<polyline points="775.5,724.5 775.5,729.5" fill="none" stroke="#0c0e12" stroke-width="2" stroke-linejoin="round" stroke-linecap="round" />
<polyline points="658.8,720.5 658.8,717.0 661.2,717.2 661.2,720.8" fill="none" stroke="#0c0e12" stroke-width="1.2" stroke-linejoin="round" stroke-linecap="round" />
<polyline points="663.0,721.0 663.0,717.5 665.5,717.7 665.5,721.3" fill="none" stroke="#0c0e12" stroke-width="1.2" stroke-linejoin="round" stroke-linecap="round" />
<polyline points="667.3,721.6 667.3,718.1 669.7,718.3 669.7,721.9" fill="none" stroke="#0c0e12" stroke-width="1.2" stroke-linejoin="round" stroke-linecap="round" />
<polyline points="671.5,722.1 671.5,718.6 674.0,718.8 674.0,722.4" fill="none" stroke="#0c0e12" stroke-width="1.2" stroke-linejoin="round" stroke-linecap="round" />
<polyline points="675.8,722.7 675.8,719.2 678.2,719.4 678.2,723.0" fill="none" stroke="#0c0e12" stroke-width="1.2" stroke-linejoin="round" stroke-linecap="round" />
<polyline points="680.0,723.2 680.0,719.7 682.5,719.9 682.5,723.5" fill="none" stroke="#0c0e12" stroke-width="1.2" stroke-linejoin="round" stroke-linecap="round" />
<polyline points="684.3,723.8 684.3,720.3 686.7,720.5 686.7,724.1" fill="none" stroke="#0c0e12" stroke-width="1.2" stroke-linejoin="round" stroke-linecap="round" />
<polyline points="688.5,724.3 688.5,720.8 691.0,721.0 691.0,724.6" fill="none" stroke="#0c0e12" stroke-width="1.2" stroke-linejoin="round" stroke-linecap="round" />
<polyline points="692.8,724.9 692.8,721.4 695.2,721.6 695.2,725.2" fill="none" stroke="#0c0e12" stroke-width="1.2" stroke-linejoin="round" stroke-linecap="round" />
<polyline points="697.0,725.4 697.0,721.9 699.5,722.1 699.5,725.7" fill="none" stroke="#0c0e12" stroke-width="1.2" stroke-linejoin="round" stroke-linecap="round" />
<polyline points="701.3,726.0 701.3,722.5 703.7,722.7 703.7,726.3" fill="none" stroke="#0c0e12" stroke-width="1.2" stroke-linejoin="round" stroke-linecap="round" />
<polyline points="705.5,726.5 705.5,723.0 708.0,723.2 708.0,726.8" fill="none" stroke="#0c0e12" stroke-width="1.2" stroke-linejoin="round" stroke-linecap="round" />
<polyline points="709.8,727.0 709.8,723.5 712.2,723.7 712.2,727.3" fill="none" stroke="#0c0e12" stroke-width="1.2" stroke-linejoin="round" stroke-linecap="round" />
<polyline points="714.0,727.6 714.0,724.1 716.5,724.3 716.5,727.9" fill="none" stroke="#0c0e12" stroke-width="1.2" stroke-linejoin="round" stroke-linecap="round" />
<polyline points="718.3,728.1 718.3,724.6 720.7,724.8 720.7,728.4" fill="none" stroke="#0c0e12" stroke-width="1.2" stroke-linejoin="round" stroke-linecap="round" />
<polyline points="722.5,728.7 722.5,725.2 725.0,725.4 725.0,729.0" fill="none" stroke="#0c0e12" stroke-width="1.2" stroke-linejoin="round" stroke-linecap="round" />
<polyline points="726.8,729.2 726.8,725.7 729.2,725.9 729.2,729.5" fill="none" stroke="#0c0e12" stroke-width="1.2" stroke-linejoin="round" stroke-linecap="round" />
<polyline points="731.0,729.8 731.0,726.3 733.5,726.5 733.5,730.1" fill="none" stroke="#0c0e12" stroke-width="1.2" stroke-linejoin="round" stroke-linecap="round" />
<polyline points="735.3,730.3 735.3,726.8 737.7,727.0 737.7,730.6" fill="none" stroke="#0c0e12" stroke-width="1.2" stroke-linejoin="round" stroke-linecap="round" />
<polyline points="739.5,730.9 739.5,727.4 742.0,727.6 742.0,731.2" fill="none" stroke="#0c0e12" stroke-width="1.2" stroke-linejoin="round" stroke-linecap="round" />
<polyline points="743.8,731.4 743.8,727.9 746.2,728.1 746.2,731.7" fill="none" stroke="#0c0e12" stroke-width="1.2" stroke-linejoin="round" stroke-linecap="round" />
<polyline points="748.0,731.9 748.0,728.4 750.5,728.6 750.5,732.2" fill="none" stroke="#0c0e12" stroke-width="1.2" stroke-linejoin="round" stroke-linecap="round" />
<polyline points="752.3,732.5 752.3,729.0 754.7,729.2 754.7,732.8" fill="none" stroke="#0c0e12" stroke-width="1.2" stroke-linejoin="round" stroke-linecap="round" />
<polyline points="756.5,733.0 756.5,729.5 759.0,729.7 759.0,733.3" fill="none" stroke="#0c0e12" stroke-width="1.2" stroke-linejoin="round" stroke-linecap="round" />
<polyline points="760.8,733.6 760.8,730.1 763.2,730.3 763.2,733.9" fill="none" stroke="#0c0e12" stroke-width="1.2" stroke-linejoin="round" stroke-linecap="round" />
<polyline points="765.0,734.1 765.0,730.6 767.5,730.8 767.5,734.4" fill="none" stroke="#0c0e12" stroke-width="1.2" stroke-linejoin="round" stroke-linecap="round" />
<polyline points="769.3,734.7 769.3,731.2 771.7,731.4 771.7,735.0" fill="none" stroke="#0c0e12" stroke-width="1.2" stroke-linejoin="round" stroke-linecap="round" />
<polyline points="657.0,720.8 773.0,735.5" fill="none" stroke="#0c0e12" stroke-width="1.3" stroke-linejoin="round" stroke-linecap="round" />
<polyline points="674.0,665.7 680.6,659.5" fill="none" stroke="#0c0e12" stroke-width="2.9" stroke-linejoin="round" stroke-linecap="round" />
<polyline points="679.2,666.4 685.8,660.1" fill="none" stroke="#0c0e12" stroke-width="2.9" stroke-linejoin="round" stroke-linecap="round" />
<polyline points="684.4,667.0 691.0,660.8" fill="none" stroke="#0c0e12" stroke-width="2.9" stroke-linejoin="round" stroke-linecap="round" />
<polyline points="689.6,667.7 696.2,661.5" fill="none" stroke="#0c0e12" stroke-width="2.9" stroke-linejoin="round" stroke-linecap="round" />
<polyline points="694.8,668.3 701.4,662.1" fill="none" stroke="#0c0e12" stroke-width="2.9" stroke-linejoin="round" stroke-linecap="round" />
<polyline points="700.0,669.0 706.6,662.8" fill="none" stroke="#0c0e12" stroke-width="2.9" stroke-linejoin="round" stroke-linecap="round" />
<polyline points="660.5,679.3 667.1,673.1" fill="none" stroke="#0c0e12" stroke-width="2.9" stroke-linejoin="round" stroke-linecap="round" />
<polyline points="665.7,679.9 672.3,673.7" fill="none" stroke="#0c0e12" stroke-width="2.9" stroke-linejoin="round" stroke-linecap="round" />
<polyline points="670.9,680.6 677.5,674.4" fill="none" stroke="#0c0e12" stroke-width="2.9" stroke-linejoin="round" stroke-linecap="round" />
<polyline points="676.1,681.2 682.7,675.0" fill="none" stroke="#0c0e12" stroke-width="2.9" stroke-linejoin="round" stroke-linecap="round" />
<polyline points="681.3,681.9 687.9,675.7" fill="none" stroke="#0c0e12" stroke-width="2.9" stroke-linejoin="round" stroke-linecap="round" />
<polyline points="686.5,682.5 693.1,676.3" fill="none" stroke="#0c0e12" stroke-width="2.9" stroke-linejoin="round" stroke-linecap="round" />
<ellipse cx="784.2" cy="676.0" rx="24.0" ry="8.6" fill="#30333c" stroke="#0c0e12" stroke-width="1" />
<ellipse cx="784.2" cy="676.0" rx="19.0" ry="6.6" fill="#aab0cc" stroke="#22252c" stroke-width="1.6" stroke-dasharray="2.4 1.4"/>
<ellipse cx="784.2" cy="676.0" rx="13.5" ry="4.6" fill="#c4cae6" stroke="#30343f" stroke-width="2" stroke-dasharray="2 1.8"/>
<ellipse cx="784.2" cy="676.0" rx="6.0" ry="2.1" fill="#e4e8fa" stroke="#5a5e6e" stroke-width="0.8" />
<ellipse cx="757.5" cy="680.0" rx="1.8" ry="1.2" fill="#333" stroke="none" stroke-width="1" />
<polygon points="664.5,580.7 680.0,583.5 664.5,598.0" fill="#d8def8" stroke="#0c0e12" stroke-width="1" stroke-linejoin="round" />
<polygon points="649.5,612.0 679.2,583.2 826.3,601.3 794.5,631.5" fill="#c8d0f0" stroke="#0c0e12" stroke-width="1.2" stroke-linejoin="round" />
<polyline points="681.0,582.7 826.0,600.7" fill="none" stroke="#0c0e12" stroke-width="1.2" stroke-linejoin="round" stroke-linecap="round" stroke-dasharray="4 1.4"/>
<polygon points="794.5,631.5 826.5,601.5 827.0,639.0 795.3,668.3" fill="#d4daf6" stroke="#0c0e12" stroke-width="1.2" stroke-linejoin="round" />
<ellipse cx="822.5" cy="609.5" rx="0.9" ry="1.4" fill="#444" stroke="#0c0e12" stroke-width="0.5" />
<ellipse cx="798.3" cy="636.0" rx="0.9" ry="1.4" fill="#444" stroke="#0c0e12" stroke-width="0.5" />
<polygon points="632.8,611.0 794.5,631.5 795.3,668.3 632.8,648.1" fill="#d0d8f8" stroke="#0c0e12" stroke-width="1.3" stroke-linejoin="round" />
<polyline points="634.0,612.1 794.0,632.5" fill="none" stroke="#0c0e12" stroke-width="1.6" stroke-linejoin="round" stroke-linecap="round" />
<ellipse cx="657.7" cy="619.0" rx="2.6" ry="2.6" fill="#aab0d0" stroke="#0c0e12" stroke-width="0.9" />
<polyline points="655.8,619.0 659.6,619.0" fill="none" stroke="#0c0e12" stroke-width="0.8" stroke-linejoin="round" stroke-linecap="round" />
<ellipse cx="749.0" cy="631.0" rx="2.6" ry="2.6" fill="#aab0d0" stroke="#0c0e12" stroke-width="0.9" />
<polyline points="747.2,631.0 750.8,631.0" fill="none" stroke="#0c0e12" stroke-width="0.8" stroke-linejoin="round" stroke-linecap="round" />
<polyline points="638.8,624.0 638.8,642.0" fill="none" stroke="#0c0e12" stroke-width="3.3" stroke-linejoin="round" stroke-linecap="round" />
<polyline points="644.8,624.7 644.8,642.7" fill="none" stroke="#0c0e12" stroke-width="3.3" stroke-linejoin="round" stroke-linecap="round" />
<polyline points="650.3,625.4 650.3,643.4" fill="none" stroke="#0c0e12" stroke-width="3.3" stroke-linejoin="round" stroke-linecap="round" />
<ellipse cx="652.5" cy="640.5" rx="1.0" ry="1.8" fill="#0c0e12" stroke="none" stroke-width="1" />
<ellipse cx="656.5" cy="644.5" rx="1.3" ry="1.3" fill="none" stroke="#0c0e12" stroke-width="1" />
<polyline points="662.0,640.0 662.0,645.0" fill="none" stroke="#0c0e12" stroke-width="2" stroke-linejoin="round" stroke-linecap="round" />
<polyline points="707.0,633.5 707.0,650.5" fill="none" stroke="#0c0e12" stroke-width="2.4" stroke-linejoin="round" stroke-linecap="round" />
<polyline points="712.0,634.5 712.0,651.5" fill="none" stroke="#0c0e12" stroke-width="2.4" stroke-linejoin="round" stroke-linecap="round" />
<polyline points="707.0,634.5 707.0,649.5" fill="none" stroke="#a8aed0" stroke-width="0.6" stroke-linejoin="round" stroke-linecap="round" />
<polyline points="712.0,635.5 712.0,650.5" fill="none" stroke="#a8aed0" stroke-width="0.6" stroke-linejoin="round" stroke-linecap="round" />
<polygon points="723.5,647.5 736.0,649.3 736.0,655.5 723.5,653.7" fill="#25161a" stroke="#0c0e12" stroke-width="0.6" stroke-linejoin="round" />
<polyline points="727.0,651.5 733.0,652.5" fill="none" stroke="#d02222" stroke-width="1.6" stroke-linejoin="round" stroke-linecap="round" />
<polyline points="765.5,653.5 765.5,658.0" fill="none" stroke="#0c0e12" stroke-width="2" stroke-linejoin="round" stroke-linecap="round" />
<ellipse cx="770.5" cy="659.5" rx="1.2" ry="1.2" fill="none" stroke="#0c0e12" stroke-width="1" />
<polyline points="775.5,655.0 775.5,660.0" fill="none" stroke="#0c0e12" stroke-width="2" stroke-linejoin="round" stroke-linecap="round" />
<polyline points="658.8,651.0 658.8,647.5 661.2,647.7 661.2,651.3" fill="none" stroke="#0c0e12" stroke-width="1.2" stroke-linejoin="round" stroke-linecap="round" />
<polyline points="663.0,651.5 663.0,648.0 665.5,648.2 665.5,651.8" fill="none" stroke="#0c0e12" stroke-width="1.2" stroke-linejoin="round" stroke-linecap="round" />
<polyline points="667.3,652.1 667.3,648.6 669.7,648.8 669.7,652.4" fill="none" stroke="#0c0e12" stroke-width="1.2" stroke-linejoin="round" stroke-linecap="round" />
<polyline points="671.5,652.6 671.5,649.1 674.0,649.3 674.0,652.9" fill="none" stroke="#0c0e12" stroke-width="1.2" stroke-linejoin="round" stroke-linecap="round" />
<polyline points="675.8,653.2 675.8,649.7 678.2,649.9 678.2,653.5" fill="none" stroke="#0c0e12" stroke-width="1.2" stroke-linejoin="round" stroke-linecap="round" />
<polyline points="680.0,653.7 680.0,650.2 682.5,650.4 682.5,654.0" fill="none" stroke="#0c0e12" stroke-width="1.2" stroke-linejoin="round" stroke-linecap="round" />
<polyline points="684.3,654.3 684.3,650.8 686.7,651.0 686.7,654.6" fill="none" stroke="#0c0e12" stroke-width="1.2" stroke-linejoin="round" stroke-linecap="round" />
<polyline points="688.5,654.8 688.5,651.3 691.0,651.5 691.0,655.1" fill="none" stroke="#0c0e12" stroke-width="1.2" stroke-linejoin="round" stroke-linecap="round" />
<polyline points="692.8,655.4 692.8,651.9 695.2,652.1 695.2,655.7" fill="none" stroke="#0c0e12" stroke-width="1.2" stroke-linejoin="round" stroke-linecap="round" />
<polyline points="697.0,655.9 697.0,652.4 699.5,652.6 699.5,656.2" fill="none" stroke="#0c0e12" stroke-width="1.2" stroke-linejoin="round" stroke-linecap="round" />
<polyline points="701.3,656.5 701.3,653.0 703.7,653.2 703.7,656.8" fill="none" stroke="#0c0e12" stroke-width="1.2" stroke-linejoin="round" stroke-linecap="round" />
<polyline points="705.5,657.0 705.5,653.5 708.0,653.7 708.0,657.3" fill="none" stroke="#0c0e12" stroke-width="1.2" stroke-linejoin="round" stroke-linecap="round" />
<polyline points="709.8,657.5 709.8,654.0 712.2,654.2 712.2,657.8" fill="none" stroke="#0c0e12" stroke-width="1.2" stroke-linejoin="round" stroke-linecap="round" />
<polyline points="714.0,658.1 714.0,654.6 716.5,654.8 716.5,658.4" fill="none" stroke="#0c0e12" stroke-width="1.2" stroke-linejoin="round" stroke-linecap="round" />
<polyline points="718.3,658.6 718.3,655.1 720.7,655.3 720.7,658.9" fill="none" stroke="#0c0e12" stroke-width="1.2" stroke-linejoin="round" stroke-linecap="round" />
<polyline points="722.5,659.2 722.5,655.7 725.0,655.9 725.0,659.5" fill="none" stroke="#0c0e12" stroke-width="1.2" stroke-linejoin="round" stroke-linecap="round" />
<polyline points="726.8,659.7 726.8,656.2 729.2,656.4 729.2,660.0" fill="none" stroke="#0c0e12" stroke-width="1.2" stroke-linejoin="round" stroke-linecap="round" />
<polyline points="731.0,660.3 731.0,656.8 733.5,657.0 733.5,660.6" fill="none" stroke="#0c0e12" stroke-width="1.2" stroke-linejoin="round" stroke-linecap="round" />
<polyline points="735.3,660.8 735.3,657.3 737.7,657.5 737.7,661.1" fill="none" stroke="#0c0e12" stroke-width="1.2" stroke-linejoin="round" stroke-linecap="round" />
<polyline points="739.5,661.4 739.5,657.9 742.0,658.1 742.0,661.7" fill="none" stroke="#0c0e12" stroke-width="1.2" stroke-linejoin="round" stroke-linecap="round" />
<polyline points="743.8,661.9 743.8,658.4 746.2,658.6 746.2,662.2" fill="none" stroke="#0c0e12" stroke-width="1.2" stroke-linejoin="round" stroke-linecap="round" />
<polyline points="748.0,662.4 748.0,658.9 750.5,659.1 750.5,662.7" fill="none" stroke="#0c0e12" stroke-width="1.2" stroke-linejoin="round" stroke-linecap="round" />
<polyline points="752.3,663.0 752.3,659.5 754.7,659.7 754.7,663.3" fill="none" stroke="#0c0e12" stroke-width="1.2" stroke-linejoin="round" stroke-linecap="round" />
<polyline points="756.5,663.5 756.5,660.0 759.0,660.2 759.0,663.8" fill="none" stroke="#0c0e12" stroke-width="1.2" stroke-linejoin="round" stroke-linecap="round" />
<polyline points="760.8,664.1 760.8,660.6 763.2,660.8 763.2,664.4" fill="none" stroke="#0c0e12" stroke-width="1.2" stroke-linejoin="round" stroke-linecap="round" />
<polyline points="765.0,664.6 765.0,661.1 767.5,661.3 767.5,664.9" fill="none" stroke="#0c0e12" stroke-width="1.2" stroke-linejoin="round" stroke-linecap="round" />
<polyline points="769.3,665.2 769.3,661.7 771.7,661.9 771.7,665.5" fill="none" stroke="#0c0e12" stroke-width="1.2" stroke-linejoin="round" stroke-linecap="round" />
<polyline points="657.0,651.3 773.0,666.0" fill="none" stroke="#0c0e12" stroke-width="1.3" stroke-linejoin="round" stroke-linecap="round" />
<polyline points="674.0,596.2 680.6,590.0" fill="none" stroke="#0c0e12" stroke-width="2.9" stroke-linejoin="round" stroke-linecap="round" />
<polyline points="679.2,596.9 685.8,590.6" fill="none" stroke="#0c0e12" stroke-width="2.9" stroke-linejoin="round" stroke-linecap="round" />
<polyline points="684.4,597.5 691.0,591.3" fill="none" stroke="#0c0e12" stroke-width="2.9" stroke-linejoin="round" stroke-linecap="round" />
<polyline points="689.6,598.2 696.2,592.0" fill="none" stroke="#0c0e12" stroke-width="2.9" stroke-linejoin="round" stroke-linecap="round" />
<polyline points="694.8,598.8 701.4,592.6" fill="none" stroke="#0c0e12" stroke-width="2.9" stroke-linejoin="round" stroke-linecap="round" />
<polyline points="700.0,599.5 706.6,593.2" fill="none" stroke="#0c0e12" stroke-width="2.9" stroke-linejoin="round" stroke-linecap="round" />
<polyline points="660.5,609.8 667.1,603.6" fill="none" stroke="#0c0e12" stroke-width="2.9" stroke-linejoin="round" stroke-linecap="round" />
<polyline points="665.7,610.4 672.3,604.2" fill="none" stroke="#0c0e12" stroke-width="2.9" stroke-linejoin="round" stroke-linecap="round" />
<polyline points="670.9,611.1 677.5,604.9" fill="none" stroke="#0c0e12" stroke-width="2.9" stroke-linejoin="round" stroke-linecap="round" />
<polyline points="676.1,611.8 682.7,605.5" fill="none" stroke="#0c0e12" stroke-width="2.9" stroke-linejoin="round" stroke-linecap="round" />
<polyline points="681.3,612.4 687.9,606.2" fill="none" stroke="#0c0e12" stroke-width="2.9" stroke-linejoin="round" stroke-linecap="round" />
<polyline points="686.5,613.0 693.1,606.8" fill="none" stroke="#0c0e12" stroke-width="2.9" stroke-linejoin="round" stroke-linecap="round" />
<ellipse cx="784.2" cy="606.5" rx="24.0" ry="8.6" fill="#30333c" stroke="#0c0e12" stroke-width="1" />
<ellipse cx="784.2" cy="606.5" rx="19.0" ry="6.6" fill="#aab0cc" stroke="#22252c" stroke-width="1.6" stroke-dasharray="2.4 1.4"/>
<ellipse cx="784.2" cy="606.5" rx="13.5" ry="4.6" fill="#c4cae6" stroke="#30343f" stroke-width="2" stroke-dasharray="2 1.8"/>
<ellipse cx="784.2" cy="606.5" rx="6.0" ry="2.1" fill="#e4e8fa" stroke="#5a5e6e" stroke-width="0.8" />
<ellipse cx="757.5" cy="610.5" rx="1.8" ry="1.2" fill="#333" stroke="none" stroke-width="1" />
<polygon points="664.5,511.2 680.0,514.0 664.5,528.5" fill="#d8def8" stroke="#0c0e12" stroke-width="1" stroke-linejoin="round" />
<polygon points="649.5,542.5 679.2,513.7 826.3,531.8 794.5,562.0" fill="#c8d0f0" stroke="#0c0e12" stroke-width="1.2" stroke-linejoin="round" />
<polyline points="681.0,513.2 826.0,531.2" fill="none" stroke="#0c0e12" stroke-width="1.2" stroke-linejoin="round" stroke-linecap="round" stroke-dasharray="4 1.4"/>
<polygon points="794.5,562.0 826.5,532.0 827.0,569.5 795.3,598.8" fill="#d4daf6" stroke="#0c0e12" stroke-width="1.2" stroke-linejoin="round" />
<ellipse cx="822.5" cy="540.0" rx="0.9" ry="1.4" fill="#444" stroke="#0c0e12" stroke-width="0.5" />
<ellipse cx="798.3" cy="566.5" rx="0.9" ry="1.4" fill="#444" stroke="#0c0e12" stroke-width="0.5" />
<polygon points="632.8,541.5 794.5,562.0 795.3,598.8 632.8,578.6" fill="#d0d8f8" stroke="#0c0e12" stroke-width="1.3" stroke-linejoin="round" />
<polyline points="634.0,542.6 794.0,563.0" fill="none" stroke="#0c0e12" stroke-width="1.6" stroke-linejoin="round" stroke-linecap="round" />
<ellipse cx="657.7" cy="549.5" rx="2.6" ry="2.6" fill="#aab0d0" stroke="#0c0e12" stroke-width="0.9" />
<polyline points="655.8,549.5 659.6,549.5" fill="none" stroke="#0c0e12" stroke-width="0.8" stroke-linejoin="round" stroke-linecap="round" />
<ellipse cx="749.0" cy="561.5" rx="2.6" ry="2.6" fill="#aab0d0" stroke="#0c0e12" stroke-width="0.9" />
<polyline points="747.2,561.5 750.8,561.5" fill="none" stroke="#0c0e12" stroke-width="0.8" stroke-linejoin="round" stroke-linecap="round" />
<polyline points="638.8,554.5 638.8,572.5" fill="none" stroke="#0c0e12" stroke-width="3.3" stroke-linejoin="round" stroke-linecap="round" />
<polyline points="644.8,555.2 644.8,573.2" fill="none" stroke="#0c0e12" stroke-width="3.3" stroke-linejoin="round" stroke-linecap="round" />
<polyline points="650.3,555.9 650.3,573.9" fill="none" stroke="#0c0e12" stroke-width="3.3" stroke-linejoin="round" stroke-linecap="round" />
<ellipse cx="652.5" cy="571.0" rx="1.0" ry="1.8" fill="#0c0e12" stroke="none" stroke-width="1" />
<ellipse cx="656.5" cy="575.0" rx="1.3" ry="1.3" fill="none" stroke="#0c0e12" stroke-width="1" />
<polyline points="662.0,570.5 662.0,575.5" fill="none" stroke="#0c0e12" stroke-width="2" stroke-linejoin="round" stroke-linecap="round" />
<polyline points="707.0,564.0 707.0,581.0" fill="none" stroke="#0c0e12" stroke-width="2.4" stroke-linejoin="round" stroke-linecap="round" />
<polyline points="712.0,565.0 712.0,582.0" fill="none" stroke="#0c0e12" stroke-width="2.4" stroke-linejoin="round" stroke-linecap="round" />
<polyline points="707.0,565.0 707.0,580.0" fill="none" stroke="#a8aed0" stroke-width="0.6" stroke-linejoin="round" stroke-linecap="round" />
<polyline points="712.0,566.0 712.0,581.0" fill="none" stroke="#a8aed0" stroke-width="0.6" stroke-linejoin="round" stroke-linecap="round" />
<polygon points="723.5,578.0 736.0,579.8 736.0,586.0 723.5,584.2" fill="#25161a" stroke="#0c0e12" stroke-width="0.6" stroke-linejoin="round" />
<polyline points="727.0,582.0 733.0,583.0" fill="none" stroke="#d02222" stroke-width="1.6" stroke-linejoin="round" stroke-linecap="round" />
<polyline points="765.5,584.0 765.5,588.5" fill="none" stroke="#0c0e12" stroke-width="2" stroke-linejoin="round" stroke-linecap="round" />
<ellipse cx="770.5" cy="590.0" rx="1.2" ry="1.2" fill="none" stroke="#0c0e12" stroke-width="1" />
<polyline points="775.5,585.5 775.5,590.5" fill="none" stroke="#0c0e12" stroke-width="2" stroke-linejoin="round" stroke-linecap="round" />
<polyline points="658.8,581.5 658.8,578.0 661.2,578.2 661.2,581.8" fill="none" stroke="#0c0e12" stroke-width="1.2" stroke-linejoin="round" stroke-linecap="round" />
<polyline points="663.0,582.0 663.0,578.5 665.5,578.7 665.5,582.3" fill="none" stroke="#0c0e12" stroke-width="1.2" stroke-linejoin="round" stroke-linecap="round" />
<polyline points="667.3,582.6 667.3,579.1 669.7,579.3 669.7,582.9" fill="none" stroke="#0c0e12" stroke-width="1.2" stroke-linejoin="round" stroke-linecap="round" />
<polyline points="671.5,583.1 671.5,579.6 674.0,579.8 674.0,583.4" fill="none" stroke="#0c0e12" stroke-width="1.2" stroke-linejoin="round" stroke-linecap="round" />
<polyline points="675.8,583.7 675.8,580.2 678.2,580.4 678.2,584.0" fill="none" stroke="#0c0e12" stroke-width="1.2" stroke-linejoin="round" stroke-linecap="round" />
<polyline points="680.0,584.2 680.0,580.7 682.5,580.9 682.5,584.5" fill="none" stroke="#0c0e12" stroke-width="1.2" stroke-linejoin="round" stroke-linecap="round" />
<polyline points="684.3,584.8 684.3,581.3 686.7,581.5 686.7,585.1" fill="none" stroke="#0c0e12" stroke-width="1.2" stroke-linejoin="round" stroke-linecap="round" />
<polyline points="688.5,585.3 688.5,581.8 691.0,582.0 691.0,585.6" fill="none" stroke="#0c0e12" stroke-width="1.2" stroke-linejoin="round" stroke-linecap="round" />
<polyline points="692.8,585.9 692.8,582.4 695.2,582.6 695.2,586.2" fill="none" stroke="#0c0e12" stroke-width="1.2" stroke-linejoin="round" stroke-linecap="round" />
<polyline points="697.0,586.4 697.0,582.9 699.5,583.1 699.5,586.7" fill="none" stroke="#0c0e12" stroke-width="1.2" stroke-linejoin="round" stroke-linecap="round" />
<polyline points="701.3,587.0 701.3,583.5 703.7,583.7 703.7,587.3" fill="none" stroke="#0c0e12" stroke-width="1.2" stroke-linejoin="round" stroke-linecap="round" />
<polyline points="705.5,587.5 705.5,584.0 708.0,584.2 708.0,587.8" fill="none" stroke="#0c0e12" stroke-width="1.2" stroke-linejoin="round" stroke-linecap="round" />
<polyline points="709.8,588.0 709.8,584.5 712.2,584.7 712.2,588.3" fill="none" stroke="#0c0e12" stroke-width="1.2" stroke-linejoin="round" stroke-linecap="round" />
<polyline points="714.0,588.6 714.0,585.1 716.5,585.3 716.5,588.9" fill="none" stroke="#0c0e12" stroke-width="1.2" stroke-linejoin="round" stroke-linecap="round" />
<polyline points="718.3,589.1 718.3,585.6 720.7,585.8 720.7,589.4" fill="none" stroke="#0c0e12" stroke-width="1.2" stroke-linejoin="round" stroke-linecap="round" />
<polyline points="722.5,589.7 722.5,586.2 725.0,586.4 725.0,590.0" fill="none" stroke="#0c0e12" stroke-width="1.2" stroke-linejoin="round" stroke-linecap="round" />
<polyline points="726.8,590.2 726.8,586.7 729.2,586.9 729.2,590.5" fill="none" stroke="#0c0e12" stroke-width="1.2" stroke-linejoin="round" stroke-linecap="round" />
<polyline points="731.0,590.8 731.0,587.3 733.5,587.5 733.5,591.1" fill="none" stroke="#0c0e12" stroke-width="1.2" stroke-linejoin="round" stroke-linecap="round" />
<polyline points="735.3,591.3 735.3,587.8 737.7,588.0 737.7,591.6" fill="none" stroke="#0c0e12" stroke-width="1.2" stroke-linejoin="round" stroke-linecap="round" />
<polyline points="739.5,591.9 739.5,588.4 742.0,588.6 742.0,592.2" fill="none" stroke="#0c0e12" stroke-width="1.2" stroke-linejoin="round" stroke-linecap="round" />
<polyline points="743.8,592.4 743.8,588.9 746.2,589.1 746.2,592.7" fill="none" stroke="#0c0e12" stroke-width="1.2" stroke-linejoin="round" stroke-linecap="round" />
<polyline points="748.0,592.9 748.0,589.4 750.5,589.6 750.5,593.2" fill="none" stroke="#0c0e12" stroke-width="1.2" stroke-linejoin="round" stroke-linecap="round" />
<polyline points="752.3,593.5 752.3,590.0 754.7,590.2 754.7,593.8" fill="none" stroke="#0c0e12" stroke-width="1.2" stroke-linejoin="round" stroke-linecap="round" />
<polyline points="756.5,594.0 756.5,590.5 759.0,590.7 759.0,594.3" fill="none" stroke="#0c0e12" stroke-width="1.2" stroke-linejoin="round" stroke-linecap="round" />
<polyline points="760.8,594.6 760.8,591.1 763.2,591.3 763.2,594.9" fill="none" stroke="#0c0e12" stroke-width="1.2" stroke-linejoin="round" stroke-linecap="round" />
<polyline points="765.0,595.1 765.0,591.6 767.5,591.8 767.5,595.4" fill="none" stroke="#0c0e12" stroke-width="1.2" stroke-linejoin="round" stroke-linecap="round" />
<polyline points="769.3,595.7 769.3,592.2 771.7,592.4 771.7,596.0" fill="none" stroke="#0c0e12" stroke-width="1.2" stroke-linejoin="round" stroke-linecap="round" />
<polyline points="657.0,581.8 773.0,596.5" fill="none" stroke="#0c0e12" stroke-width="1.3" stroke-linejoin="round" stroke-linecap="round" />
<polyline points="674.0,526.7 680.6,520.5" fill="none" stroke="#0c0e12" stroke-width="2.9" stroke-linejoin="round" stroke-linecap="round" />
<polyline points="679.2,527.4 685.8,521.1" fill="none" stroke="#0c0e12" stroke-width="2.9" stroke-linejoin="round" stroke-linecap="round" />
<polyline points="684.4,528.0 691.0,521.8" fill="none" stroke="#0c0e12" stroke-width="2.9" stroke-linejoin="round" stroke-linecap="round" />
<polyline points="689.6,528.7 696.2,522.5" fill="none" stroke="#0c0e12" stroke-width="2.9" stroke-linejoin="round" stroke-linecap="round" />
<polyline points="694.8,529.3 701.4,523.1" fill="none" stroke="#0c0e12" stroke-width="2.9" stroke-linejoin="round" stroke-linecap="round" />
<polyline points="700.0,530.0 706.6,523.8" fill="none" stroke="#0c0e12" stroke-width="2.9" stroke-linejoin="round" stroke-linecap="round" />
<polyline points="660.5,540.3 667.1,534.1" fill="none" stroke="#0c0e12" stroke-width="2.9" stroke-linejoin="round" stroke-linecap="round" />
<polyline points="665.7,540.9 672.3,534.7" fill="none" stroke="#0c0e12" stroke-width="2.9" stroke-linejoin="round" stroke-linecap="round" />
<polyline points="670.9,541.6 677.5,535.4" fill="none" stroke="#0c0e12" stroke-width="2.9" stroke-linejoin="round" stroke-linecap="round" />
<polyline points="676.1,542.2 682.7,536.0" fill="none" stroke="#0c0e12" stroke-width="2.9" stroke-linejoin="round" stroke-linecap="round" />
<polyline points="681.3,542.9 687.9,536.7" fill="none" stroke="#0c0e12" stroke-width="2.9" stroke-linejoin="round" stroke-linecap="round" />
<polyline points="686.5,543.5 693.1,537.3" fill="none" stroke="#0c0e12" stroke-width="2.9" stroke-linejoin="round" stroke-linecap="round" />
<ellipse cx="784.2" cy="537.0" rx="24.0" ry="8.6" fill="#30333c" stroke="#0c0e12" stroke-width="1" />
<ellipse cx="784.2" cy="537.0" rx="19.0" ry="6.6" fill="#aab0cc" stroke="#22252c" stroke-width="1.6" stroke-dasharray="2.4 1.4"/>
<ellipse cx="784.2" cy="537.0" rx="13.5" ry="4.6" fill="#c4cae6" stroke="#30343f" stroke-width="2" stroke-dasharray="2 1.8"/>
<ellipse cx="784.2" cy="537.0" rx="6.0" ry="2.1" fill="#e4e8fa" stroke="#5a5e6e" stroke-width="0.8" />
<ellipse cx="757.5" cy="541.0" rx="1.8" ry="1.2" fill="#333" stroke="none" stroke-width="1" />
<polygon points="970.0,335.3 973.5,336.0 975.0,342.0 982.5,337.3 988.6,338.0 989.3,420.8 982.0,434.0 971.5,444.0 954.4,453.6 951.7,451.5 948.0,449.0 939.4,451.5 936.5,449.0 936.2,366.0 938.7,360.5 950.0,350.0 960.0,342.0" fill="#0d0e11" stroke="#0c0e12" stroke-width="1" stroke-linejoin="round" />
<ellipse cx="970.5" cy="396.500" rx="12" ry="44.500" transform="rotate(11 970.500 396.500)" fill="#f4f5fc" stroke="#1a1b20" stroke-width="1"/>
<polyline points="960.0,433.0 975.0,380.0" fill="none" stroke="#111217" stroke-width="3.2" stroke-linejoin="round" stroke-linecap="round" />
<polyline points="975.0,380.0 985.0,345.0" fill="none" stroke="#111217" stroke-width="3.2" stroke-linejoin="round" stroke-linecap="round" />
<polyline points="963.0,372.0 985.0,425.0" fill="none" stroke="#111217" stroke-width="3.2" stroke-linejoin="round" stroke-linecap="round" />
<polyline points="957.0,405.0 984.0,392.0" fill="none" stroke="#111217" stroke-width="3.2" stroke-linejoin="round" stroke-linecap="round" />
<polyline points="967.0,352.0 972.0,440.0" fill="none" stroke="#111217" stroke-width="3.2" stroke-linejoin="round" stroke-linecap="round" />
<polyline points="959.0,390.0 980.0,360.0" fill="none" stroke="#111217" stroke-width="3.2" stroke-linejoin="round" stroke-linecap="round" />
<polyline points="962.0,420.0 982.0,408.0" fill="none" stroke="#111217" stroke-width="3.2" stroke-linejoin="round" stroke-linecap="round" />
<path d="M966,356 Q974,372 971,396 Q966,420 975,436 M977,350 Q968,380 982,400 M958,400 Q970,408 966,436" fill="none" stroke="#111217" stroke-width="2.400"/>
<ellipse cx="972" cy="396" rx="4.500" ry="10" transform="rotate(11 972 396)" fill="#e9eaf4" stroke="#111217" stroke-width="1.200"/>
<ellipse cx="945.5" cy="375.0" rx="3.6" ry="6.5" fill="#dcdde8" stroke="#0c0e12" stroke-width="0.8" />
<ellipse cx="946.0" cy="372.0" rx="1.3" ry="2.4" fill="#cc2a2a" stroke="none" stroke-width="1" />
<ellipse cx="947.0" cy="440.0" rx="3.2" ry="5.0" fill="#d0d2e4" stroke="#0c0e12" stroke-width="0.8" />
<polyline points="937.0,397.5 951.0,399.5" fill="none" stroke="#2a2c33" stroke-width="1" stroke-linejoin="round" stroke-linecap="round" />
<polyline points="937.0,427.0 951.0,429.0" fill="none" stroke="#2a2c33" stroke-width="1" stroke-linejoin="round" stroke-linecap="round" />
<ellipse cx="915.6" cy="428.3" rx="8.3" ry="8.3" fill="#e8e8ee" stroke="#1d1e22" stroke-width="1.3" />
<ellipse cx="915.6" cy="428.3" rx="5.0" ry="5.0" fill="#3d3a30" stroke="#111" stroke-width="0.8" />
<ellipse cx="914.5" cy="428.0" rx="2.0" ry="2.0" fill="#d4b41a" stroke="none" stroke-width="1" />
<polygon points="921.0,505.0 926.0,508.5 926.0,511.5 932.0,513.0 932.0,535.0 926.0,537.0 926.0,539.5 921.0,543.5 915.0,539.5 910.5,535.0 910.5,513.0 915.0,508.5" fill="#2a2c33" stroke="#0c0e12" stroke-width="1" stroke-linejoin="round" />
<polygon points="913.5,515.0 918.0,511.5 924.0,513.5 924.0,533.5 918.0,536.5 913.5,533.0" fill="#7c7e96" stroke="#0c0e12" stroke-width="0.9" stroke-linejoin="round" />
<polyline points="915.0,531.0 922.5,517.0" fill="none" stroke="#0c0e12" stroke-width="1.4" stroke-linejoin="round" stroke-linecap="round" />
<polyline points="915.0,522.0 922.0,529.0" fill="none" stroke="#0c0e12" stroke-width="1.2" stroke-linejoin="round" stroke-linecap="round" />
<ellipse cx="920.5" cy="508.0" rx="1.2" ry="1.2" fill="#888" stroke="none" stroke-width="1" />
<ellipse cx="920.5" cy="540.5" rx="1.2" ry="1.2" fill="#888" stroke="none" stroke-width="1" />
<rect x="429.5" y="515.5" width="193" height="20" rx="3" fill="#000" opacity="0.25" transform="translate(1.5,2)"/>
<rect x="428.500" y="514.500" width="193" height="20" rx="3" fill="#fbfbfb" stroke="#767676" stroke-width="1"/>
<text x="433" y="528.500" font-family="Liberation Sans, sans-serif" font-size="12" fill="#555" textLength="183" lengthAdjust="spacingAndGlyphs">Вырез-Вытянуть5 от CW-5045&lt;2&gt;</text>
<polyline points="189.0,869.0 189.0,848.0" fill="none" stroke="#c01414" stroke-width="3.2" stroke-linejoin="round" stroke-linecap="round" />
<polygon points="185.5,850.0 189.0,841.0 192.5,850.0" fill="#c01414" stroke="#7a0a0a" stroke-width="0.6" stroke-linejoin="round" />
<polyline points="188.0,868.0 168.0,866.2" fill="none" stroke="#146414" stroke-width="3.2" stroke-linejoin="round" stroke-linecap="round" />
<polygon points="170.0,862.3 161.0,865.5 170.0,869.8" fill="#146414" stroke="#0a3a0a" stroke-width="0.6" stroke-linejoin="round" />
<polygon points="190.0,867.0 186.0,878.0 178.0,877.0 182.0,866.0" fill="#1414a8" stroke="#0a0a60" stroke-width="0.8" stroke-linejoin="round" />
<text x="184" y="842" font-family="Liberation Serif, serif" font-size="12" fill="#d01818">X</text>
<text x="153" y="870" font-family="Liberation Serif, serif" font-size="11" fill="#187818">Y</text>
<text x="173" y="886" font-family="Liberation Serif, serif" font-size="11" fill="#1818b8">Z</text>
</svg>

<svg style="left:-151px;top:-92px" width="1280" height="1024" viewBox="0 0 1280 1024">
<g transform="translate(541.6,127.0)" ><circle cx="-2" cy="-2" r="5.500" fill="#dfeaf6" stroke="#4a5c8c" stroke-width="1.400"/><path d="M2,2 L7,7" stroke="#8aa8d8" stroke-width="3"/><path d="M2,2 L7,7" stroke="#4a5c8c" stroke-width="1"/><circle cx="-2" cy="-2" r="2.500" fill="none" stroke="#3a4c7c" stroke-width="1.200"/><path d="M-2,-6 v2 M-2,0 v2 M-6,-2 h2 M0,-2 h2" stroke="#3a4c7c" stroke-width="1"/></g><g transform="translate(564.8,127.0)" ><circle cx="-2" cy="-2" r="5.500" fill="#dfeaf6" stroke="#4a5c8c" stroke-width="1.400"/><path d="M2,2 L7,7" stroke="#8aa8d8" stroke-width="3"/><path d="M2,2 L7,7" stroke="#4a5c8c" stroke-width="1"/><rect x="-5" y="-5" width="6" height="6" fill="none" stroke="#3a4c7c" stroke-width="1" stroke-dasharray="1.500 1"/></g><g transform="translate(588.0,127.0)" ><path d="M-7,-7 L-4,-9 L0,-3 L-3,-1 Z" fill="#3a7ae0" stroke="#1a3ca0" stroke-width="0.800"/><path d="M-3,-1 L0,-3 L7,4 Q6,8 2,7 Z" fill="#a8d4f8" stroke="#1a3ca0" stroke-width="0.800"/><path d="M8,-6 h-5 M3,-6 l2,-2 M3,-6 l2,2" stroke="#1a3ca0" stroke-width="1" fill="none"/></g><g transform="translate(611.0,127.0)" ><path d="M-7,-5 Q0,-10 7,-5 V7 H3 V-2 Q0,-4 -3,-2 V7 H-7 Z" fill="#6a9ce0" stroke="#1a3c8c" stroke-width="1"/><path d="M-7,-3 V7 H-3 V-1 Z M3,-1 V7 H7 V-3 Z" fill="#f0d040" stroke="#6a5a10" stroke-width="0.700"/><path d="M-6,0 l2,1 M-6,3 l2,1 M4,1 l2,-1 M4,4 l2,-1" stroke="#333" stroke-width="0.700"/></g><g transform="translate(633.0,127.0)" ><path d="M-7,-3 h9 v10 h-9 Z" fill="#6aa8ec" stroke="#1a3c8c" stroke-width="1"/><path d="M-7,-3 l5,-5 h9 l-5,5 Z M2,-3 l5,-5 v10 l-5,5" fill="#dfeefc" stroke="#1a3c8c" stroke-width="1"/><path d="M1,-6 v4 M-1,-4 h4 M5,0 h-3" stroke="#e01818" stroke-width="1"/></g><path d="M649.6,126.4 h5.600 l-2.800,3.200 Z" fill="#3a5c8c"/><g transform="translate(670.5,127.0)" ><path d="M-7,-3 h9 v10 h-9 Z" fill="#5a9ee8" stroke="#1a3c8c" stroke-width="1"/><path d="M-7,-3 l5,-5 h9 l-5,5 Z" fill="#d4e8fc" stroke="#1a3c8c" stroke-width="1"/><path d="M2,-3 l5,-5 v10 l-5,5 Z" fill="#a4ccf4" stroke="#1a3c8c" stroke-width="1"/></g><path d="M686.2,126.4 h5.600 l-2.800,3.200 Z" fill="#3a5c8c"/><g transform="translate(707.8,127.0)" ><circle cx="-4" cy="2" r="3.300" fill="#a8d0f4" fill-opacity="0.600" stroke="#5a6c7c" stroke-width="1.200"/><circle cx="4.500" cy="3" r="3.300" fill="#a8d0f4" fill-opacity="0.600" stroke="#5a6c7c" stroke-width="1.200"/><path d="M-7,0 Q-7,-6 -2,-5 M7,0 Q8,-4 5,-5 M-1,2 h2.500" fill="none" stroke="#5a6c7c" stroke-width="1.100"/></g><path d="M723.2,126.4 h5.600 l-2.800,3.200 Z" fill="#3a5c8c"/><g transform="translate(744.4,127.0)" ><circle r="8" fill="#e8e8e8"/><path d="M0,0 L0,-8 A8,8 0 0 1 8,0 Z" fill="#e02a20"/><path d="M0,0 L8,0 A8,8 0 0 1 0,8 Z" fill="#f4b81c"/><path d="M0,0 L0,8 A8,8 0 0 1 -8,0 Z" fill="#2aa83a"/><path d="M0,0 L-8,0 A8,8 0 0 1 0,-8 Z" fill="#2a6ae0"/><circle r="8" fill="none" stroke="#888" stroke-width="0.500"/><ellipse cx="-2.500" cy="-3.500" rx="3.500" ry="2.500" fill="#fff" opacity="0.550"/></g><g transform="translate(767.6,126.0)" ><g transform="scale(0.82)"><circle r="8" fill="#e8e8e8"/><path d="M0,0 L0,-8 A8,8 0 0 1 8,0 Z" fill="#e02a20"/><path d="M0,0 L8,0 A8,8 0 0 1 0,8 Z" fill="#f4b81c"/><path d="M0,0 L0,8 A8,8 0 0 1 -8,0 Z" fill="#2aa83a"/><path d="M0,0 L-8,0 A8,8 0 0 1 0,-8 Z" fill="#2a6ae0"/><circle r="8" fill="none" stroke="#888" stroke-width="0.500"/><ellipse cx="-2.500" cy="-3.500" rx="3.500" ry="2.500" fill="#fff" opacity="0.550"/></g><path d="M-8,5 h16 l1,4 h-18 Z" fill="#fff" stroke="#222" stroke-width="0.500"/><path d="M-8,5 h4 l-.5,2 h-4 Z M0,5 h4 l.5,2 h-4 Z M-4.500,7 h4 v2 h-4.500 Z M4.500,7 h4 l.5,2 h-4.500 Z" fill="#111"/></g><path d="M783.2,126.4 h5.600 l-2.800,3.200 Z" fill="#3a5c8c"/><g transform="translate(804.5,127.0)" ><rect x="-8" y="-6" width="15" height="11" fill="#dfe6ee" stroke="#333" stroke-width="1.200"/><rect x="-6" y="-4" width="11" height="7" fill="#b8c8dc"/><path d="M-3,8 h6 M0,5 v3" stroke="#333" stroke-width="1.300"/><path d="M0,-5 l4,-4 l5,3 l-2,2" fill="#e8c070" stroke="#6a4a10" stroke-width="0.800"/></g><path d="M820.7,126.4 h5.600 l-2.800,3.200 Z" fill="#3a5c8c"/><g transform="translate(842.0,127.0)" ><circle r="7.500" fill="#5a8ec8" opacity="0.750"/><circle cx="-2" cy="-2" r="3" fill="#8ab4e0" opacity="0.600"/></g><rect x="1119.500" y="99.500" width="12" height="12" fill="#d4e6f8" stroke="#4a6e9c" stroke-width="1"/><path d="M1125,102.500 v6 l-3.500,-3 Z" fill="#3a5a8c"/><rect x="1126" y="102.500" width="2.500" height="6" fill="#3a5a8c"/><rect x="1142.500" y="99.500" width="12" height="12" fill="#d4e6f8" stroke="#4a6e9c" stroke-width="1"/><path d="M1149,102.500 v6 l3.500,-3 Z" fill="#3a5a8c"/><rect x="1145.500" y="102.500" width="2.500" height="6" fill="#3a5a8c"/><rect x="1165.500" y="107.500" width="11" height="3.500" fill="#d4e6f8" stroke="#4a6e9c" stroke-width="1"/><rect x="1190.500" y="99.500" width="11" height="8" fill="#d4e6f8" stroke="#4a6e9c" stroke-width="1"/><rect x="1186.500" y="103.500" width="11" height="8" fill="#d4e6f8" stroke="#4a6e9c" stroke-width="1"/><rect x="1188.500" y="105.500" width="7" height="4" fill="#5aa8f8" stroke="#4a6e9c" stroke-width="0.600"/><path d="M1211,100.500 h4 l2.500,3.200 l2.500,-3.200 h4 l-4.500,5.500 l4.500,5.500 h-4 l-2.500,-3.200 l-2.500,3.200 h-4 l4.500,-5.500 Z" fill="#d4e6f8" stroke="#4a6e9c" stroke-width="1" stroke-linejoin="round"/><rect x="1212.500" y="152.7" width="23" height="22.500" fill="#3a3a3a"/><rect x="1213.500" y="151.5" width="22" height="21.500" fill="#f6f6f6" stroke="#e8e8e8" stroke-width="1"/><rect x="1212.500" y="176.8" width="23" height="22.500" fill="#3a3a3a"/><rect x="1213.500" y="175.6" width="22" height="21.500" fill="#b6b8bc" stroke="#8c8e92" stroke-width="1"/><rect x="1212.500" y="200.9" width="23" height="22.500" fill="#3a3a3a"/><rect x="1213.500" y="199.7" width="22" height="21.500" fill="#b6b8bc" stroke="#8c8e92" stroke-width="1"/><rect x="1212.500" y="225.0" width="23" height="22.500" fill="#3a3a3a"/><rect x="1213.500" y="223.8" width="22" height="21.500" fill="#b6b8bc" stroke="#8c8e92" stroke-width="1"/><rect x="1212.500" y="249.1" width="23" height="22.500" fill="#3a3a3a"/><rect x="1213.500" y="247.9" width="22" height="21.500" fill="#b6b8bc" stroke="#8c8e92" stroke-width="1"/><rect x="1212.500" y="273.2" width="23" height="22.500" fill="#3a3a3a"/><rect x="1213.500" y="272.0" width="22" height="21.500" fill="#b6b8bc" stroke="#8c8e92" stroke-width="1"/><g transform="translate(1224.5,163.0)" ><path d="M-8,0 L0,-7 L8,0 L6,1.500 L0,-4 L-6,1.500 Z" fill="#f8e060" stroke="#9a6a00" stroke-width="0.900"/><path d="M-5.500,0 V7 H5.500 V0 L0,-4.500 Z" fill="#fdf8d8" stroke="#9a6a00" stroke-width="0.900"/><rect x="-2" y="1.500" width="3.500" height="5.500" fill="#f0c020" stroke="#8a5a00" stroke-width="0.600"/><rect x="4" y="-8" width="2.300" height="5" fill="#d83a2a"/></g><g transform="translate(1224.5,187.0)" ><path d="M-8,-1 l3,-2 l3,2 v8 l-3,1.500 l-3,-1.500 Z" fill="#2aa83a" stroke="#0a5a1a" stroke-width="0.700"/><path d="M-3,-4 l3,-2 l3,2 v11 l-3,1.500 l-3,-1.500 Z" fill="#f0d040" stroke="#8a6a00" stroke-width="0.700"/><path d="M2,-7 l3,-2 l3,2 v13 l-3,1.500 l-3,-1.500 Z" fill="#7a9ce0" stroke="#2a3c8c" stroke-width="0.700"/><path d="M5,-9 v15.500 M0,-6 v14 M-5,-3 v11" stroke="#fff" stroke-width="0.800" opacity="0.700"/></g><g transform="translate(1224.5,211.0)" ><path d="M-8,-5 h5 l2,2 h7 v3 h-11 l-3,6 Z" fill="#f0c83a" stroke="#9a7a10" stroke-width="0.900"/><path d="M-8,6 l3,-7 h13 l-3,7 Z" fill="#fbe890" stroke="#9a7a10" stroke-width="0.900"/></g><g transform="translate(1224.5,235.0)" ><rect x="-7" y="-8" width="14" height="10" fill="#fff" stroke="#3a4c7c" stroke-width="1"/><rect x="-5" y="-6" width="5" height="2" fill="#f0c83a" stroke="#8a6a10" stroke-width="0.500"/><rect x="2" y="-6" width="3.500" height="2" fill="#f0c83a" stroke="#8a6a10" stroke-width="0.500"/><path d="M-5,0 h5 v-1.500 l-2.500,-1.200 l-2.500,1.200 Z" fill="#f0c83a" stroke="#8a6a10" stroke-width="0.400"/><rect x="2" y="-2.500" width="4" height="3" fill="#b8c8e8"/><path d="M-7,6 h6 M-3.500,3.500 l3,2.500 l-3,2.500" stroke="#1a2cc0" stroke-width="1.500" fill="none"/></g><g transform="translate(1224.5,259.5)" ><ellipse cx="0" cy="6.500" rx="6" ry="1.800" fill="#555" opacity="0.500"/><g transform="scale(0.9)"><circle r="8" fill="#e8e8e8"/><path d="M0,0 L0,-8 A8,8 0 0 1 8,0 Z" fill="#e02a20"/><path d="M0,0 L8,0 A8,8 0 0 1 0,8 Z" fill="#f4b81c"/><path d="M0,0 L0,8 A8,8 0 0 1 -8,0 Z" fill="#2aa83a"/><path d="M0,0 L-8,0 A8,8 0 0 1 0,-8 Z" fill="#2a6ae0"/><circle r="8" fill="none" stroke="#888" stroke-width="0.500"/><ellipse cx="-2.500" cy="-3.500" rx="3.500" ry="2.500" fill="#fff" opacity="0.550"/></g></g><g transform="translate(1224.5,283.5)" ><rect x="-6" y="-3" width="11" height="11" fill="#f4f4f4" stroke="#666" stroke-width="1"/><path d="M-4,0 h7 M-4,2.500 h7 M-4,5 h7" stroke="#aaa" stroke-width="0.800"/><path d="M-4,-4 l4,-4 l6,2 l-1,3 l-3,-1 l-3,3 Z" fill="#e8c890" stroke="#6a4a20" stroke-width="0.800"/></g>
</svg>

</div>

<!-- command manager tabs -->
<div id="tabs">
<div class="tab" style="left:0;width:58px;border-left:1px solid #2a2a2a">Сборка</div>
<div class="tab" style="left:58px;width:98px">Расположение</div>
<div class="tab" style="left:156px;width:56px">Эскиз</div>
<div class="tab" style="left:212px;width:100px">Анализировать</div>
<div class="tab act" style="left:312px;width:111px">Продукты Office</div>
<div class="tab" style="left:423px;width:73px">Simulation</div>
<div class="tab" style="left:496px;width:101px">Power Surfacing</div>
</div>

<div id="leftp">
<svg style="left:-62px;top:-112px" width="1280" height="1024" viewBox="0 0 1280 1024">
<path d="M62.0,111.0 H151.0" stroke="#1a1a1a" stroke-width="1.4"/><path d="M106.5,113.0 V634.0" stroke="#8a8c90" stroke-width="1"/><path d="M107.5,113.0 V634.0" stroke="#fbfbfc" stroke-width="1"/><path d="M62.0,634.5 H107.0" stroke="#8a8c90" stroke-width="1"/><path d="M62.0,635.5 H107.0" stroke="#fbfbfc" stroke-width="1"/><path d="M108.0,557.5 H151.0" stroke="#8a8c90" stroke-width="1"/><path d="M108.0,558.5 H151.0" stroke="#fbfbfc" stroke-width="1"/><path d="M62.5,112.0 V943.0" stroke="#a8aaae" stroke-width="1"/><path d="M62.0,943.0 H151.0" stroke="#fbfbfc" stroke-width="1"/><rect x="66.0" y="119.5" width="1.500" height="1.500" fill="#3a3a3a"/><rect x="67.2" y="120.7" width="1" height="1" fill="#fff"/><rect x="69.4" y="119.5" width="1.500" height="1.500" fill="#3a3a3a"/><rect x="70.6" y="120.7" width="1" height="1" fill="#fff"/><rect x="72.8" y="119.5" width="1.500" height="1.500" fill="#3a3a3a"/><rect x="74.0" y="120.7" width="1" height="1" fill="#fff"/><rect x="76.2" y="119.5" width="1.500" height="1.500" fill="#3a3a3a"/><rect x="77.4" y="120.7" width="1" height="1" fill="#fff"/><rect x="79.6" y="119.5" width="1.500" height="1.500" fill="#3a3a3a"/><rect x="80.8" y="120.7" width="1" height="1" fill="#fff"/><rect x="83.0" y="119.5" width="1.500" height="1.500" fill="#3a3a3a"/><rect x="84.2" y="120.7" width="1" height="1" fill="#fff"/><rect x="86.4" y="119.5" width="1.500" height="1.500" fill="#3a3a3a"/><rect x="87.6" y="120.7" width="1" height="1" fill="#fff"/><rect x="89.8" y="119.5" width="1.500" height="1.500" fill="#3a3a3a"/><rect x="91.0" y="120.7" width="1" height="1" fill="#fff"/><rect x="93.2" y="119.5" width="1.500" height="1.500" fill="#3a3a3a"/><rect x="94.4" y="120.7" width="1" height="1" fill="#fff"/><rect x="96.6" y="119.5" width="1.500" height="1.500" fill="#3a3a3a"/><rect x="97.8" y="120.7" width="1" height="1" fill="#fff"/><rect x="100.0" y="119.5" width="1.500" height="1.500" fill="#3a3a3a"/><rect x="101.2" y="120.7" width="1" height="1" fill="#fff"/><rect x="103.4" y="119.5" width="1.500" height="1.500" fill="#3a3a3a"/><rect x="104.6" y="120.7" width="1" height="1" fill="#fff"/><rect x="112.0" y="119.5" width="1.500" height="1.500" fill="#3a3a3a"/><rect x="113.2" y="120.7" width="1" height="1" fill="#fff"/><rect x="115.4" y="119.5" width="1.500" height="1.500" fill="#3a3a3a"/><rect x="116.6" y="120.7" width="1" height="1" fill="#fff"/><rect x="118.8" y="119.5" width="1.500" height="1.500" fill="#3a3a3a"/><rect x="120.0" y="120.7" width="1" height="1" fill="#fff"/><rect x="122.2" y="119.5" width="1.500" height="1.500" fill="#3a3a3a"/><rect x="123.4" y="120.7" width="1" height="1" fill="#fff"/><rect x="125.6" y="119.5" width="1.500" height="1.500" fill="#3a3a3a"/><rect x="126.8" y="120.7" width="1" height="1" fill="#fff"/><rect x="129.0" y="119.5" width="1.500" height="1.500" fill="#3a3a3a"/><rect x="130.2" y="120.7" width="1" height="1" fill="#fff"/><rect x="132.4" y="119.5" width="1.500" height="1.500" fill="#3a3a3a"/><rect x="133.6" y="120.7" width="1" height="1" fill="#fff"/><rect x="135.8" y="119.5" width="1.500" height="1.500" fill="#3a3a3a"/><rect x="137.0" y="120.7" width="1" height="1" fill="#fff"/><rect x="139.2" y="119.5" width="1.500" height="1.500" fill="#3a3a3a"/><rect x="140.4" y="120.7" width="1" height="1" fill="#fff"/><rect x="142.6" y="119.5" width="1.500" height="1.500" fill="#3a3a3a"/><rect x="143.8" y="120.7" width="1" height="1" fill="#fff"/><rect x="146.0" y="119.5" width="1.500" height="1.500" fill="#3a3a3a"/><rect x="147.2" y="120.7" width="1" height="1" fill="#fff"/><rect x="149.4" y="119.5" width="1.500" height="1.500" fill="#3a3a3a"/><rect x="150.6" y="120.7" width="1" height="1" fill="#fff"/><path d="M67.0,199.5 H103.0" stroke="#8e9094" stroke-width="1.2"/><path d="M67.0,391.5 H103.0" stroke="#8e9094" stroke-width="1.2"/><path d="M67.0,468.5 H103.0" stroke="#8e9094" stroke-width="1.2"/><path d="M67.0,568.5 H103.0" stroke="#8e9094" stroke-width="1.2"/><path d="M67.0,622.0 H103.0" stroke="#8e9094" stroke-width="1.2"/><g transform="translate(76.0,139.0)" ><path d="M-8,-6 L-3,-2 V7 L-8,3 Z M8,-6 L3,-2 V7 L8,3 Z M-3,4 H3" fill="#cbced2" stroke="#a6a9ae" stroke-width="1.100" stroke-linejoin="round"/></g><g transform="translate(76.0,162.5)" ><path d="M-6,-6 H3 V3 H-6 Z M3,-6 L7,-3 V6 L3,3 M-6,3 L-2,7 H7" fill="#cbced2" stroke="#a6a9ae" stroke-width="1.100" stroke-linejoin="round"/></g><g transform="translate(76.0,186.0)" ><path d="M-2,-8 H2 L3,2 L7,7 H-7 L-3,2 Z" fill="#cbced2" stroke="#a6a9ae" stroke-width="1.100" stroke-linejoin="round"/></g><g transform="translate(76.0,216.5)" ><path d="M-7,-7 V-1 M-7,-8 l-2.500,3 M-7,-8 l2.500,3 M-6,0 L-1,-3 V3 L6,1 V5 L-1,8 L-6,5 Z" fill="#cbced2" stroke="#a6a9ae" stroke-width="1.100" stroke-linejoin="round"/></g><g transform="translate(76.0,239.5)" ><path d="M-8,-8 H8 V8 H-8 Z M-8,-8 L0,0 V8 M0,0 H8" fill="#cbced2" stroke="#a6a9ae" stroke-width="1.100" stroke-linejoin="round"/></g><g transform="translate(76.0,262.5)" ><path d="M7,-6 H-2 A6,6 0 0 0 -2,6 H7 V2 H-1 A2,2 0 0 1 -1,-2 H7 Z" fill="#cbced2" stroke="#a6a9ae" stroke-width="1.100" stroke-linejoin="round"/></g><g transform="translate(76.0,286.0)" ><path d="M-8,6 L-2,0 H2 L8,-6 V-3 L3,3 H-1 L-6,8 Z" fill="#cbced2" stroke="#a6a9ae" stroke-width="1.100" stroke-linejoin="round"/></g><g transform="translate(76.0,309.0)" ><path d="M-3,-8 H3 V-4 L0,0 L-3,-4 Z M-8,3 L0,7 L8,3 L5,1 L0,4 L-5,1 Z" fill="#cbced2" stroke="#a6a9ae" stroke-width="1.100" stroke-linejoin="round"/></g><g transform="translate(76.0,332.0)" ><path d="M-8,0 L0,-5 L8,0 L0,5 Z M-8,0 L0,1 L8,0 M0,-5 V5" fill="#cbced2" stroke="#a6a9ae" stroke-width="1.100" stroke-linejoin="round"/></g><g transform="translate(76.0,355.0)" ><path d="M-8,-3 l3,-4 l3,4 M-5,-6 Q7,-8 6,1 Q5,6 0,8 L-2,5 Q2,3 2,0 Q2,-3 -5,-3" fill="#cbced2" stroke="#a6a9ae" stroke-width="1.100" stroke-linejoin="round"/></g><g transform="translate(76.0,378.5)" ><path d="M-8,-2 H8 V1 H-8 Z" fill="#e8e8e8" stroke="#333" stroke-width="1"/><path d="M-5,-1 Q0,-9 5,-1" fill="none" stroke="#f0a020" stroke-width="2.400"/><rect x="-4" y="1" width="8" height="6" fill="#e8e8e8" stroke="#111" stroke-width="1.300"/></g><g transform="translate(76.0,408.0)" ><path d="M-8,-8 H4 L8,-5 V8 H-4 L-8,5 Z" fill="#f4d020" stroke="#a07800" stroke-width="1"/><path d="M-8,-8 L-4,-5 H8 M-4,-5 V8" fill="none" stroke="#a07800" stroke-width="1"/><path d="M-8,-8 H4 L8,-5 H-4 Z" fill="#fbe878" stroke="#a07800" stroke-width="0.600"/><path d="M-8,-8 L-4,-5 V8 L-8,5 Z" fill="#e0b810" stroke="#a07800" stroke-width="0.600"/><rect x="-1" y="-1.500" width="6" height="6" fill="#2aa43a" stroke="#8a6a00" stroke-width="0.800"/><rect x="0" y="-1" width="3" height="2.500" fill="#d8e8d0"/></g><g transform="translate(76.0,431.0)" ><path d="M-8,-8 H4 L8,-5 V8 H-4 L-8,5 Z" fill="#f4d020" stroke="#a07800" stroke-width="1"/><path d="M-8,-8 L-4,-5 H8 M-4,-5 V8" fill="none" stroke="#a07800" stroke-width="1"/><path d="M-8,-8 H4 L8,-5 H-4 Z" fill="#fbe878" stroke="#a07800" stroke-width="0.600"/><path d="M-8,-8 L-4,-5 V8 L-8,5 Z" fill="#e0b810" stroke="#a07800" stroke-width="0.600"/><circle cx="2" cy="1.500" r="3.600" fill="#2ab83a" stroke="#0a6a1a" stroke-width="0.800"/><circle cx="1" cy="0.500" r="1.200" fill="#b8f0b8"/></g><g transform="translate(76.0,454.0)" ><path d="M-7,-7 H7 V7 H-7 Z M-7,-7 L7,7 M7,-7 L-7,7 M0,-7 V7 M-7,0 H7" fill="#cbced2" stroke="#a6a9ae" stroke-width="1.100" stroke-linejoin="round"/><circle r="3.500" fill="none" stroke="#a6a9ae"/></g><g transform="translate(76.0,485.0)" ><path d="M-5,-8 V0 M-5,1 l-3,-4 M-5,1 l3,-4 M2,-7 H5 V2 H2 Z M-8,3 H8 V7 H-8 Z M-3,3 V7 M2,3 V7" fill="#cbced2" stroke="#a6a9ae" stroke-width="1.100" stroke-linejoin="round"/></g><g transform="translate(76.0,508.0)" ><path d="M-5,1 V-8 M-5,-8 l-3,4 M-5,-8 l3,4 M2,-7 H6 V0 L2,4 H-8 V8 H8 V4 M2,-7 V0" fill="#cbced2" stroke="#a6a9ae" stroke-width="1.100" stroke-linejoin="round"/></g><g transform="translate(76.0,531.0)" ><path d="M-7,-5 H3 L8,0 V6 H-2 L-7,1 Z M-7,1 H3 L8,6 M3,-5 V1 M-4,-1 L-1,-4 L2,-1" fill="#cbced2" stroke="#a6a9ae" stroke-width="1.100" stroke-linejoin="round"/></g><g transform="translate(76.0,555.0)" ><path d="M-6.500,0 A6.500,6.500 0 1 0 6.500,0 A6.500,6.500 0 1 0 -6.500,0 Z" fill="#cbced2" stroke="#a6a9ae" stroke-width="1.100" stroke-linejoin="round"/><path d="M-5,5 L5,-5 M-8,-2 l3,-2 l0,3 M0,0 h6 v5 h-6 Z" fill="#9a9da2" stroke="#a6a9ae" stroke-width="1"/></g><g transform="translate(76.0,586.5)" ><path d="M-8,3 L0,0 L2,-7 L7,-3 V4 L0,8 Z M0,0 L7,4" fill="#cbced2" stroke="#a6a9ae" stroke-width="1.100" stroke-linejoin="round"/></g><g transform="translate(76.0,608.0)" ><path d="M-6,-4 L0,-7 L6,-4 V3 L0,7 L-6,3 Z M-6,-4 L0,-1 L6,-4 M0,-1 V7 M-4,-8 l2,2" fill="#cbced2" stroke="#a6a9ae" stroke-width="1.100" stroke-linejoin="round"/></g><path d="M92.2,353.4 h5.600 l-2.800,3.200 Z" fill="#666"/><path d="M113.0,176.5 H149.0" stroke="#8e9094" stroke-width="1.2"/><path d="M113.0,322.5 H149.0" stroke="#8e9094" stroke-width="1.2"/><path d="M113.0,468.5 H149.0" stroke="#8e9094" stroke-width="1.2"/><path d="M113.0,522.5 H149.0" stroke="#8e9094" stroke-width="1.2"/><g transform="translate(122.5,139.5)" ><path d="M-7,-6 H3 V4 H-7 Z M-3,-2 H7 V8 H-3 Z" fill="#cbced2" stroke="#a6a9ae" stroke-width="1.100" stroke-linejoin="round"/><rect x="2" y="3" width="5" height="5" fill="#9a9da2" stroke="#a6a9ae"/></g><path d="M138.7,138.9 h5.600 l-2.800,3.200 Z" fill="#666"/><g transform="translate(122.5,162.5)" ><path d="M-8,-8 H4 L8,-5 V8 H-4 L-8,5 Z" fill="#f4d020" stroke="#a07800" stroke-width="1"/><path d="M-8,-8 L-4,-5 H8 M-4,-5 V8" fill="none" stroke="#a07800" stroke-width="1"/><path d="M-8,-8 H4 L8,-5 H-4 Z" fill="#fbe878" stroke="#a07800" stroke-width="0.600"/><path d="M-8,-8 L-4,-5 V8 L-8,5 Z" fill="#e0b810" stroke="#a07800" stroke-width="0.600"/><rect x="-1" y="-1.500" width="6" height="6" fill="#2aa43a" stroke="#8a6a00" stroke-width="0.800"/><rect x="0" y="-1" width="3" height="2.500" fill="#d8e8d0"/></g><path d="M138.7,161.9 h5.600 l-2.800,3.200 Z" fill="#444"/><g transform="translate(122.5,193.5)" ><path d="M-8,-2 Q-6,-8 1,-8 L8,-4 V5 L1,8 L-8,4 Z" fill="#f4d020" stroke="#9a7a00" stroke-width="1"/><path d="M-8,-2 Q-6,-8 1,-8 L8,-4 Q1,-4 -1,1 Z" fill="#2ab83a" stroke="#0a6a1a" stroke-width="0.800"/><path d="M-1,1 V8 M-1,1 L-8,-2" stroke="#9a7a00" stroke-width="0.800"/></g><path d="M138.7,192.9 h5.600 l-2.800,3.200 Z" fill="#444"/><g transform="translate(122.5,216.5)" ><path d="M-2,-8 L5,-4 V7 H-3 L-7,4 H-2 V-2 L-7,4" fill="#cbced2" stroke="#a6a9ae" stroke-width="1.100" stroke-linejoin="round"/></g><g transform="translate(122.5,239.5)" ><path d="M-7,-4 L-3,-7 H7 V5 L3,8 H-7 Z M-7,-4 H3 V8 M3,-4 L7,-7" fill="#cbced2" stroke="#a6a9ae" stroke-width="1.100" stroke-linejoin="round"/><rect x="-5" y="-2" width="6" height="8" fill="#9a9da2"/></g><g transform="translate(122.5,262.5)" ><path d="M-8,-6 L0,-7 L7,-1 V7 H3 L-8,0 Z M3,1 H7 M3,1 V7 M3,1 L-8,-6" fill="#cbced2" stroke="#a6a9ae" stroke-width="1.100" stroke-linejoin="round"/></g><g transform="translate(122.5,285.5)" ><rect x="-7" y="-3" width="11" height="11" fill="#f4d020" stroke="#9a7a00" stroke-width="1"/><circle cx="-1.500" cy="2.500" r="3" fill="#2ab83a" stroke="#0a6a1a" stroke-width="0.800"/><path d="M2,-8 L8,-2" stroke="#111" stroke-width="2.200"/><path d="M-6,-7 h2 M-2,-8 h2" stroke="#e05a18" stroke-width="1.500"/></g><g transform="translate(122.5,308.5)" ><path d="M-7,-5 A7,3 0 0 1 7,-5 V5 A7,3 0 0 1 -7,5 Z" fill="#cbced2" stroke="#a6a9ae" stroke-width="1.100" stroke-linejoin="round"/><text x="0" y="4" text-anchor="middle" font-family="Liberation Sans, sans-serif" font-size="8" font-weight="bold" fill="#9a9da2">3D</text></g><g transform="translate(122.5,339.0)" ><path d="M-6,-2 A6,5 0 0 1 6,-2 V5 A6,3 0 0 1 -6,5 Z" fill="#cbced2" stroke="#a6a9ae" stroke-width="1.100" stroke-linejoin="round"/><ellipse cx="0" cy="5" rx="6" ry="2.500" fill="none" stroke="#a6a9ae"/></g><g transform="translate(122.5,362.0)" ><path d="M-7,3 A7,3.500 0 0 0 7,3 A7,3.500 0 0 0 -7,3 Z M-3,-1 Q4,-2 7,3" fill="#cbced2" stroke="#a6a9ae" stroke-width="1.100" stroke-linejoin="round"/><path d="M-3,-8 l-3,3 h2 v4 h2 v-4 h2 Z" fill="#9a9da2"/></g><g transform="translate(122.5,385.0)" ><path d="M-7,-1 L-2,-7 L7,-2 V6 H-7 Z M-7,-1 H2 L7,-2 M2,-1 V6 M-2,-7 L2,-1 M-4,1 V6 M-1,1 V6" fill="#cbced2" stroke="#a6a9ae" stroke-width="1.100" stroke-linejoin="round"/></g><g transform="translate(122.5,408.0)" ><path d="M-7,-6 H-1 V1 H1 V-6 H6 V3 H7 V7 H-3 L-7,3 Z M-3,3 H7" fill="#cbced2" stroke="#a6a9ae" stroke-width="1.100" stroke-linejoin="round"/></g><g transform="translate(122.5,431.0)" ><path d="M-1,-8 L4,-6 Q1,0 5,7 L-3,8 L-5,3 Q-2,-2 -1,-8 Z M-5,3 L-1,1 L5,7" fill="#cbced2" stroke="#a6a9ae" stroke-width="1.100" stroke-linejoin="round"/></g><g transform="translate(122.5,454.0)" ><path d="M-7,-5.500 a1.500,1.500 0 0 1 3,0 v3 a1.500,1.500 0 0 1 -3,0 Z M-1.500,-5.500 a1.500,1.500 0 0 1 3,0 v3 a1.500,1.500 0 0 1 -3,0 Z M4,-5.500 a1.500,1.500 0 0 1 3,0 v3 a1.500,1.500 0 0 1 -3,0 Z M-7,2.500 a1.500,1.500 0 0 1 3,0 v3 a1.500,1.500 0 0 1 -3,0 Z M-1.500,2.500 a1.500,1.500 0 0 1 3,0 v3 a1.500,1.500 0 0 1 -3,0 Z M4,2.500 a1.500,1.500 0 0 1 3,0 v3 a1.500,1.500 0 0 1 -3,0 Z" fill="#cbced2" stroke="#a6a9ae" stroke-width="1.100" stroke-linejoin="round"/></g><path d="M138.7,453.4 h5.600 l-2.800,3.200 Z" fill="#666"/><g transform="translate(122.5,485.5)" ><path d="M-8,-7 L7,8" stroke="#1a8a2a" stroke-width="1.300" stroke-dasharray="3 1.500"/><path d="M-6,0 L-1,-5 L4,0 L-1,5 Z" fill="#f4e020" stroke="#8a7a00" stroke-width="1"/><path d="M5,-8 v6 M2,-5 h6 M3,-7 l4,4 M7,-7 l-4,4" stroke="#1a8a2a" stroke-width="1"/></g><path d="M138.7,484.9 h5.600 l-2.800,3.200 Z" fill="#444"/><g transform="translate(122.5,508.5)" ><path d="M-7,-6 Q-8,2 -3,0 Q2,-3 1,3 Q0,8 -5,6 M1,3 Q6,2 7,-7" fill="none" stroke="#1a8a2a" stroke-width="2.400" stroke-linecap="round"/></g><path d="M138.7,507.9 h5.600 l-2.800,3.200 Z" fill="#444"/><g transform="translate(122.5,540.0)" ><path d="M-5,-8 L7,-2 V3 L-5,-3 Z" fill="#f0e060" stroke="#6a6a1a" stroke-width="0.900"/><path d="M-2,-4 v2 M1,-2.500 v2 M4,-1 v2" stroke="#333" stroke-width="0.800"/><path d="M-8,0 L4,6" stroke="#1a6ae0" stroke-width="2.200"/><path d="M7,7.500 L0,7 L3,3 Z" fill="#1a6ae0"/></g><path d="M151,491.500 H157.500 V529.500 H151" fill="#e6e8ec" stroke="#111" stroke-width="1.400"/><path d="M152.500,498.5 l3,2.500 l-3,2.500 Z" fill="#222"/><path d="M152.500,507.5 l3,2.500 l-3,2.500 Z" fill="#222"/><path d="M152.500,516.5 l3,2.500 l-3,2.500 Z" fill="#222"/>
</svg>

</div>
<div id="rightp">
<svg style="left:-1236px;top:-92px" width="1280" height="1024" viewBox="0 0 1280 1024">
<rect x="1240.0" y="97.0" width="1.500" height="1.500" fill="#3a3a3a"/><rect x="1241.2" y="98.2" width="1" height="1" fill="#fff"/><rect x="1243.4" y="97.0" width="1.500" height="1.500" fill="#3a3a3a"/><rect x="1244.6" y="98.2" width="1" height="1" fill="#fff"/><rect x="1246.8" y="97.0" width="1.500" height="1.500" fill="#3a3a3a"/><rect x="1248.0" y="98.2" width="1" height="1" fill="#fff"/><rect x="1250.2" y="97.0" width="1.500" height="1.500" fill="#3a3a3a"/><rect x="1251.4" y="98.2" width="1" height="1" fill="#fff"/><rect x="1253.6" y="97.0" width="1.500" height="1.500" fill="#3a3a3a"/><rect x="1254.8" y="98.2" width="1" height="1" fill="#fff"/><rect x="1257.0" y="97.0" width="1.500" height="1.500" fill="#3a3a3a"/><rect x="1258.2" y="98.2" width="1" height="1" fill="#fff"/><rect x="1260.4" y="97.0" width="1.500" height="1.500" fill="#3a3a3a"/><rect x="1261.6" y="98.2" width="1" height="1" fill="#fff"/><rect x="1263.8" y="97.0" width="1.500" height="1.500" fill="#3a3a3a"/><rect x="1265.0" y="98.2" width="1" height="1" fill="#fff"/><rect x="1267.2" y="97.0" width="1.500" height="1.500" fill="#3a3a3a"/><rect x="1268.4" y="98.2" width="1" height="1" fill="#fff"/><rect x="1270.6" y="97.0" width="1.500" height="1.500" fill="#3a3a3a"/><rect x="1271.8" y="98.2" width="1" height="1" fill="#fff"/><rect x="1274.0" y="97.0" width="1.500" height="1.500" fill="#3a3a3a"/><rect x="1275.2" y="98.2" width="1" height="1" fill="#fff"/><rect x="1277.4" y="97.0" width="1.500" height="1.500" fill="#3a3a3a"/><rect x="1278.6" y="98.2" width="1" height="1" fill="#fff"/><path d="M1241.0,154.5 H1277.0" stroke="#8e9094" stroke-width="1.2"/><path d="M1241.0,484.5 H1277.0" stroke="#8e9094" stroke-width="1.2"/><path d="M1236.0,727.5 H1280.0" stroke="#8e9094" stroke-width="1.2"/><path d="M1236.0,728.5 H1280.0" stroke="#fbfbfc" stroke-width="1"/><g transform="translate(1250.0,117.0)" ><path d="M6,-7 H-3 Q-7,-7 -7,-3 V3 Q-7,7 -3,7 H7" fill="none" stroke="#1a1c9c" stroke-width="1.800"/><path d="M-5,2 L5,-5 L7,-3 L-3,4 Z" fill="#f0c020" stroke="#8a5a10" stroke-width="0.700"/><circle cx="6.500" cy="-4.500" r="1.600" fill="#e05a5a"/></g><path d="M1266.7,116.4 h5.600 l-2.800,3.200 Z" fill="#333"/><g transform="translate(1250.0,139.5)" ><path d="M-7,1 L2,-6 L7,-1 L-2,6 Z" fill="none" stroke="#1a3cc0" stroke-width="2"/><path d="M-2,6 L7,-1" stroke="#111" stroke-width="2.200"/><path d="M-4,-2 h-4 M-8,-2 l2,-2 M-8,-2 l2,2 M0,-5 h4" stroke="#1a3cc0" stroke-width="1.100" fill="none"/></g><path d="M1266.7,138.9 h5.600 l-2.800,3.200 Z" fill="#333"/><g transform="translate(1250.0,170.5)" ><path d="M-7,-7 L7,7" stroke="#0a0c6c" stroke-width="2.200"/></g><path d="M1266.7,169.9 h5.600 l-2.800,3.200 Z" fill="#333"/><g transform="translate(1250.0,193.5)" ><path d="M-7,6 L-3,-5 H7 L3,6 Z" fill="none" stroke="#1a1c9c" stroke-width="1.800"/><rect x="-8" y="5" width="2.500" height="2.500" fill="#e01818"/><rect x="6" y="-6.500" width="2.500" height="2.500" fill="#e01818"/><rect x="2" y="5" width="2.500" height="2.500" fill="#e01818"/></g><path d="M1266.7,192.9 h5.600 l-2.800,3.200 Z" fill="#333"/><g transform="translate(1250.0,216.0)" ><rect x="-7.500" y="-5" width="15" height="10" rx="5" fill="none" stroke="#1a1c9c" stroke-width="2"/><rect x="-4.500" y="-1.200" width="2.400" height="2.400" fill="none" stroke="#e01818" stroke-width="1"/><rect x="2" y="-1.200" width="2.400" height="2.400" fill="none" stroke="#e01818" stroke-width="1"/></g><path d="M1266.7,215.4 h5.600 l-2.800,3.200 Z" fill="#333"/><g transform="translate(1250.0,239.0)" ><circle r="7" fill="none" stroke="#1a1c9c" stroke-width="1.800"/><path d="M0,0 L5,-5" stroke="#e01818" stroke-width="1"/><rect x="-1.200" y="-1.200" width="2.400" height="2.400" fill="none" stroke="#e01818" stroke-width="1"/><rect x="4" y="-6.500" width="2.400" height="2.400" fill="#e01818"/></g><path d="M1266.7,238.4 h5.600 l-2.800,3.200 Z" fill="#333"/><g transform="translate(1250.0,262.0)" ><path d="M-7,4 A7,7 0 0 1 7,4" fill="none" stroke="#1a1c9c" stroke-width="1.800"/><rect x="-8.200" y="3" width="2.400" height="2.400" fill="#e01818"/><rect x="5.800" y="3" width="2.400" height="2.400" fill="#e01818"/><rect x="-1.200" y="-4.500" width="2.400" height="2.400" fill="#e01818"/><path d="M-1.500,4 h3 M0,2.500 v3" stroke="#e01818" stroke-width="0.900"/></g><path d="M1266.7,261.4 h5.600 l-2.800,3.200 Z" fill="#333"/><g transform="translate(1250.0,285.0)" ><path d="M-7,5 Q-7,-7 -1,-2 Q4,3 7,-6" fill="none" stroke="#1a1c9c" stroke-width="2.400" stroke-linecap="round"/></g><path d="M1266.7,284.4 h5.600 l-2.800,3.200 Z" fill="#333"/><g transform="translate(1250.0,308.5)" ><ellipse rx="8" ry="4.500" transform="rotate(-35)" fill="none" stroke="#1a1c9c" stroke-width="1.800"/><path d="M-1.500,-1.500 l3,3 M1.500,-1.500 l-3,3" stroke="#1a1c9c" stroke-width="0.800"/></g><path d="M1266.7,307.9 h5.600 l-2.800,3.200 Z" fill="#333"/><g transform="translate(1250.0,332.0)" ><path d="M-7,-6 H1 Q6,-6 6,-1 V7" fill="none" stroke="#b4b7bc" stroke-width="1.600"/><path d="M-2,3 h4 M0,1 v4" stroke="#b4b7bc" stroke-width="0.900"/></g><path d="M1266.7,331.4 h5.600 l-2.800,3.200 Z" fill="#888"/><g transform="translate(1250.0,355.0)" ><path d="M-4,-6.500 H4 L8,0 L4,6.500 H-4 L-8,0 Z" fill="none" stroke="#1a1c9c" stroke-width="1.800"/><path d="M-2,0 h4 M0,-2 v4" stroke="#1a1c9c" stroke-width="0.900"/></g><g transform="translate(1250.0,378.0)" ><path d="M0,-4 V4 M-3.500,-2 L3.500,2 M3.500,-2 L-3.500,2" stroke="#1a1c9c" stroke-width="1"/></g><g transform="translate(1250.0,400.5)" ><path d="M-7,-6 L7,-4 L6,7 L-8,5 Z M-7,-1 L7,1 M-3,-5.500 L-4,5.500 M2,-5 L1,6" fill="none" stroke="#1a1c9c" stroke-width="1.100" stroke-dasharray="2 1.300"/></g><g transform="translate(1250.0,424.0)" ><rect x="-7.500" y="-6" width="15" height="12" fill="#e8eaee" stroke="#b4b7bc" stroke-width="1"/><path d="M-6,4 L-2,-1 L1,2 L3,0 L6,4 Z" fill="#cfd2d6"/><circle cx="3.500" cy="-2.500" r="1.500" fill="#cfd2d6"/></g><g transform="translate(1250.0,447.0)" ><path d="M-7,7 L0,-8 L7,7 M-4,2 H4" fill="none" stroke="#1a1c9c" stroke-width="3.400" stroke-linejoin="miter"/><path d="M-7,7 L0,-8 L7,7 M-4,2 H4" fill="none" stroke="#e8eaf8" stroke-width="1.200"/></g><g transform="translate(1250.0,470.0)" ><path d="M-7,-7 H6 Q8,-3 6,1 Q8,4 7,7 H-6 Q-8,3 -6,0 Q-8,-4 -7,-7 Z" fill="none" stroke="#222" stroke-width="1.100"/><path d="M-4,3 Q-4,-4 0,-1 Q3,2 4,-4" fill="none" stroke="#1a1c9c" stroke-width="1.800"/></g><g transform="translate(1250.0,502.0)" ><path d="M-8,-4 H8 M-8,4 H8 M0,-8 V8 M-5,-7 L-2,-4 M5,-7 L2,-4" stroke="#b4b7bc" stroke-width="1.500" fill="none"/></g><path d="M1266.7,501.4 h5.600 l-2.800,3.200 Z" fill="#888"/><g transform="translate(1250.0,524.0)" ><path d="M-7,-7 H3 L7,-3 V7 H-3 L-7,3 Z" fill="#fff" stroke="#111" stroke-width="1.300"/><path d="M-7,-7 V3 L-3,7 V-3 Z" fill="#3a7ae0" stroke="#111" stroke-width="1"/><path d="M-3,-3 H7" stroke="#111" stroke-width="1"/></g><path d="M1266.7,523.4 h5.600 l-2.800,3.200 Z" fill="#333"/><g transform="translate(1250.0,547.0)" ><path d="M-7,-6 H6 V2 L-2,8 M-7,-2 H2 V1 L-4,6" fill="none" stroke="#b4b7bc" stroke-width="1.500"/></g><g transform="translate(1250.0,570.0)" ><path d="M0,-7 L7,6 H-7 Z" fill="none" stroke="#b4b7bc" stroke-width="1.600"/><path d="M0,-9 V9" stroke="#b4b7bc" stroke-width="1" stroke-dasharray="2 1.500"/></g><g transform="translate(1250.0,593.0)" ><g fill="#b4b7bc"><rect x="-7" y="-7" width="3" height="3"/><rect x="-1.500" y="-7" width="3" height="3"/><rect x="4" y="-7" width="3" height="3"/><rect x="-7" y="-1.500" width="3" height="3"/><rect x="-1.500" y="-1.500" width="3" height="3"/><rect x="4" y="-1.500" width="3" height="3"/><rect x="-7" y="4" width="3" height="3"/><rect x="-1.500" y="4" width="3" height="3"/><rect x="4" y="4" width="3" height="3"/></g></g><path d="M1266.7,592.4 h5.600 l-2.800,3.200 Z" fill="#888"/><g transform="translate(1250.0,617.0)" ><rect x="-7" y="-7" width="7" height="7" fill="none" stroke="#b4b7bc" stroke-width="1" stroke-dasharray="1.500 1.500"/><rect x="1" y="1" width="6" height="6" fill="none" stroke="#a2a5aa" stroke-width="1.300"/><path d="M-5,1 V6 H-1 M-1,6 l-2,-1.500 M-1,6 l-2,1.500" fill="none" stroke="#a2a5aa" stroke-width="1"/></g><path d="M1266.7,616.4 h5.600 l-2.800,3.200 Z" fill="#888"/><g transform="translate(1250.0,639.5)" ><path d="M-8,6 H8 M-5,5 Q-6,-3 -2,-6 Q-1,0 0,5 M0,5 Q2,-2 5,-7 M2,-1 l4,2" fill="none" stroke="#b4b7bc" stroke-width="1.400"/></g><path d="M1266.7,638.9 h5.600 l-2.800,3.200 Z" fill="#888"/><g transform="translate(1250.0,661.5)" ><path d="M-8,-4 h5 M-5.500,-6.500 v5" stroke="#a2a5aa" stroke-width="1.300"/><path d="M-3,7 L-2,3 L5,-6 L7,-4 L0,5 Z" fill="#e4e6ea" stroke="#b4b7bc" stroke-width="1"/></g><g transform="translate(1250.0,685.0)" ><path d="M-8,8 V-7 H8" fill="none" stroke="#a2a5aa" stroke-width="1.400"/><circle cx="1" cy="1.500" r="5.500" fill="none" stroke="#b4b7bc" stroke-width="1.300"/><circle cx="1" cy="1.500" r="2" fill="#b4b7bc"/></g><path d="M1266.7,684.4 h5.600 l-2.800,3.200 Z" fill="#888"/><g transform="translate(1250.0,708.0)" ><path d="M5,-7 H-3 Q-7,-7 -7,-3 V3 Q-7,7 -3,7 H5" fill="none" stroke="#1a1c9c" stroke-width="1.800"/><path d="M3,-8 L-2,0 H2 L-1,8 L7,-2 H3 L6,-8 Z" fill="#f8e020" stroke="#b06a00" stroke-width="0.800"/></g><path d="M1236.0,943.5 H1280.0" stroke="#dcdfe4" stroke-width="1"/>
</svg>

</div>
<div id="bottom">
<svg style="left:-62px;top:-928px" width="1280" height="1024" viewBox="0 0 1280 1024">
<rect x="151" y="928.500" width="1084" height="15" fill="#e2e4e8"/><path d="M151.0,928.5 H1235.0" stroke="#222" stroke-width="1.2"/><path d="M1235.5,727.0 V943.0" stroke="#333" stroke-width="1.2"/><rect x="151" y="929" width="67" height="14.500" fill="#a9abaf"/><rect x="152.0" y="929.500" width="15.500" height="13.500" fill="#b4b6ba" stroke="#8a8c90" stroke-width="0.800"/><path d="M162.5,932.8 v7 l-4,-3.500 Z M157.0,932.8 v7" fill="#8e9094" stroke="#8e9094" stroke-width="1.200"/><rect x="168.3" y="929.500" width="15.500" height="13.500" fill="#b4b6ba" stroke="#8a8c90" stroke-width="0.800"/><path d="M178.3,932.8 v7 l-4.500,-3.500 Z" fill="#8e9094"/><rect x="184.6" y="929.500" width="15.500" height="13.500" fill="#b4b6ba" stroke="#8a8c90" stroke-width="0.800"/><path d="M190.6,932.8 v7 l4.500,-3.500 Z" fill="#8e9094"/><rect x="200.9" y="929.500" width="15.500" height="13.500" fill="#b4b6ba" stroke="#8a8c90" stroke-width="0.800"/><path d="M206.4,932.8 v7 l4,-3.500 Z M211.9,932.8 v7" fill="#8e9094" stroke="#8e9094" stroke-width="1.200"/><path d="M218.500,929 V943 H287.500 V929" fill="#e4e5e8" stroke="#222" stroke-width="1"/><path d="M219.0,943.5 H287.0" stroke="#111" stroke-width="1.5"/><text x="253" y="940" text-anchor="middle" font-family="Liberation Sans, sans-serif" font-size="12" font-weight="bold" fill="#111" textLength="45" lengthAdjust="spacingAndGlyphs">Модель</text><rect x="288.500" y="929.500" width="175" height="13" fill="#acaeb2" stroke="#222" stroke-width="1"/><text x="300" y="940" font-family="Liberation Sans, sans-serif" font-size="12" fill="#111" textLength="145" lengthAdjust="spacingAndGlyphs">Исследование движения 1</text><rect x="66.0" y="949.0" width="1.500" height="1.500" fill="#3a3a3a"/><rect x="67.2" y="950.2" width="1" height="1" fill="#fff"/><rect x="66.0" y="952.4" width="1.500" height="1.500" fill="#3a3a3a"/><rect x="67.2" y="953.6" width="1" height="1" fill="#fff"/><rect x="66.0" y="955.8" width="1.500" height="1.500" fill="#3a3a3a"/><rect x="67.2" y="957.0" width="1" height="1" fill="#fff"/><rect x="66.0" y="959.2" width="1.500" height="1.500" fill="#3a3a3a"/><rect x="67.2" y="960.4" width="1" height="1" fill="#fff"/><rect x="66.0" y="962.6" width="1.500" height="1.500" fill="#3a3a3a"/><rect x="67.2" y="963.8" width="1" height="1" fill="#fff"/><rect x="66.0" y="966.0" width="1.500" height="1.500" fill="#3a3a3a"/><rect x="67.2" y="967.2" width="1" height="1" fill="#fff"/><rect x="66.0" y="969.4" width="1.500" height="1.500" fill="#3a3a3a"/><rect x="67.2" y="970.6" width="1" height="1" fill="#fff"/><path d="M220.5,944.0 V972.0" stroke="#9a9ca0" stroke-width="1"/><path d="M221.5,944.0 V972.0" stroke="#f8f8fa" stroke-width="1"/><path d="M62.0,972.5 H221.0" stroke="#f8f8fa" stroke-width="1"/><g transform="translate(86.0,958.0)" ><path d="M-7,-2 L-3,-6 H7 V3 L3,7 H-7 Z M-7,-2 H3 V7 M3,-2 L7,-6 M-7,1 H3 M-7,4 H3" fill="#d4d6da" stroke="#aeb1b6" stroke-width="1"/></g><g transform="translate(110.0,958.0)" ><path d="M-4,-7 L3,-4 L2,3 L-5,2 Z" fill="#cfd2d6" stroke="#aeb1b6" stroke-width="1"/><path d="M-8,5 Q0,8 7,-2 M-7,7 Q2,9 8,2" fill="none" stroke="#aeb1b6" stroke-width="1.300"/><path d="M-2,-8 a2,2 0 1 1 2,2" fill="none" stroke="#aeb1b6" stroke-width="1"/></g><g transform="translate(131.5,958.0)" ><path d="M-8,-6 H8 M-8,-1 H8 M-8,4.500 H8" stroke="#a6a9ae" stroke-width="2.600"/></g><g transform="translate(155.0,958.0)" ><path d="M-8,-6 H8" stroke="#a6a9ae" stroke-width="2.400"/><path d="M-8,-1.500 H8 M-8,1.500 H8 M-8,4.500 H8 M-8,7 H8" stroke="#a6a9ae" stroke-width="1.600" stroke-dasharray="2 1.200"/></g><g transform="translate(177.0,958.0)" ><path d="M-7,-7 V7" stroke="#a6a9ae" stroke-width="2.400"/><path d="M-3,-3 H7 M7,-3 l-3,-2.500 M7,-3 l-3,2.500 M7,3 H-3 M-3,3 l3,-2.500 M-3,3 l3,2.500" stroke="#a6a9ae" stroke-width="1.500" fill="none"/></g><g transform="translate(200.0,958.0)" ><path d="M-6,-8 V3 H8 M-6,-2 H2" fill="none" stroke="#1a1c9c" stroke-width="2.200"/><path d="M-8,7 h4" stroke="#e01818" stroke-width="2"/><path d="M-2.500,7 h4" stroke="#1a9a2a" stroke-width="2"/><path d="M3,7 h4.500" stroke="#1a3ce0" stroke-width="2"/></g><path d="M62.0,974.0 H818.0" stroke="#9a9ca0" stroke-width="1"/><path d="M62.0,975.0 H818.0" stroke="#f8f8fa" stroke-width="1"/><rect x="66.0" y="979.0" width="1.500" height="1.500" fill="#3a3a3a"/><rect x="67.2" y="980.2" width="1" height="1" fill="#fff"/><rect x="66.0" y="982.4" width="1.500" height="1.500" fill="#3a3a3a"/><rect x="67.2" y="983.6" width="1" height="1" fill="#fff"/><rect x="66.0" y="985.8" width="1.500" height="1.500" fill="#3a3a3a"/><rect x="67.2" y="987.0" width="1" height="1" fill="#fff"/><rect x="66.0" y="989.2" width="1.500" height="1.500" fill="#3a3a3a"/><rect x="67.2" y="990.4" width="1" height="1" fill="#fff"/><rect x="66.0" y="992.6" width="1.500" height="1.500" fill="#3a3a3a"/><rect x="67.2" y="993.8" width="1" height="1" fill="#fff"/><rect x="66.0" y="996.0" width="1.500" height="1.500" fill="#3a3a3a"/><rect x="67.2" y="997.2" width="1" height="1" fill="#fff"/><rect x="66.0" y="999.4" width="1.500" height="1.500" fill="#3a3a3a"/><rect x="67.2" y="1000.6" width="1" height="1" fill="#fff"/><path d="M818.5,975.0 V1004.0" stroke="#9a9ca0" stroke-width="1"/><path d="M819.5,975.0 V1004.0" stroke="#f8f8fa" stroke-width="1"/><path d="M62.0,1003.5 H1280.0" stroke="#f8f8fa" stroke-width="1"/><path d="M62.0,1004.7 H1280.0" stroke="#45474b" stroke-width="1.4"/><path d="M80.5,983.0 h9.0 l-3.5,4.0 v5.0 l-2.0,-1.0 v-4.0 Z" fill="#c8cbd0" stroke="#a2a5aa" stroke-width="1" stroke-linejoin="round"/><path d="M101.0,983.4 h8.1 l-3.1,3.6 v4.5 l-1.8,-0.9 v-3.6 Z" fill="#c8cbd0" stroke="#a2a5aa" stroke-width="1" stroke-linejoin="round"/><path d="M106.5,986.9 h8.1 l-3.1,3.6 v4.5 l-1.8,-0.9 v-3.6 Z" fill="#c8cbd0" stroke="#a2a5aa" stroke-width="1" stroke-linejoin="round"/><path d="M123.5,981.9 h8.1 l-3.1,3.6 v4.5 l-1.8,-0.9 v-3.6 Z" fill="#8cc4f8" stroke="#1a2cc0" stroke-width="1" stroke-linejoin="round"/><path d="M127.5,984.9 h8.1 l-3.1,3.6 v4.5 l-1.8,-0.9 v-3.6 Z" fill="#8cc4f8" stroke="#1a2cc0" stroke-width="1" stroke-linejoin="round"/><path d="M131.4,987.9 h8.1 l-3.1,3.6 v4.5 l-1.8,-0.9 v-3.6 Z" fill="#8cc4f8" stroke="#1a2cc0" stroke-width="1" stroke-linejoin="round"/><rect x="145.5" y="977.5" width="23.0" height="24.0" fill="#b9bcc2" stroke="#5c5e62" stroke-width="1"/><rect x="168.5" y="977.5" width="13.0" height="24.0" fill="#e6e8ec" stroke="#8c8e92" stroke-width="1"/><g transform="translate(157.0,989.5)" ><path d="M-3.500,-8 L-3.500,5 L-0.500,2.500 L2,7.500 L4,6.500 L1.500,1.500 L5.500,1.500 Z" fill="#fff" stroke="#222" stroke-width="1" stroke-linejoin="round"/></g><path d="M172.2,988.4 h5.600 l-2.800,3.200 Z" fill="#333"/><g transform="translate(190.0,988.0)" ><path d="M-3.500,-8 L-3.500,5 L-0.500,2.500 L2,7.500 L4,6.500 L1.500,1.500 L5.500,1.500 Z" fill="#d4d6da" stroke="#9a9da2" stroke-width="1" stroke-linejoin="round"/></g><g transform="translate(195.0,990.0)" ><path d="M-3.500,-8 L-3.500,5 L-0.500,2.500 L2,7.500 L4,6.500 L1.500,1.500 L5.500,1.500 Z" fill="#c4c6ca" stroke="#9a9da2" stroke-width="1" stroke-linejoin="round"/></g><path d="M207.5,978.0 V1001.0" stroke="#9c9ea2" stroke-width="1"/><g transform="translate(224.0,989.0)" ><circle cx="-3.500" cy="4" r="3" fill="#2ac83a" stroke="#0a5a1a" stroke-width="1"/><path d="M0.0,-8.0 h8 l-3,3.500 v4.500 l-2,-1 v-3.500 Z" fill="#b4dafc" stroke="#1a2cc0" stroke-width="1" stroke-linejoin="round"/></g><g transform="translate(247.0,989.0)" ><rect x="-7" y="-7" width="3.500" height="15" rx="1.700" fill="#2ac83a" stroke="#0a5a1a" stroke-width="0.900"/><path d="M0.0,-8.0 h8 l-3,3.500 v4.500 l-2,-1 v-3.500 Z" fill="#b4dafc" stroke="#1a2cc0" stroke-width="1" stroke-linejoin="round"/></g><g transform="translate(270.0,989.0)" ><rect x="-8" y="-2" width="10" height="10" fill="#2ac83a" stroke="#0a5a1a" stroke-width="1"/><path d="M0.0,-8.0 h8 l-3,3.500 v4.500 l-2,-1 v-3.500 Z" fill="#b4dafc" stroke="#1a2cc0" stroke-width="1" stroke-linejoin="round"/></g><g transform="translate(293.0,989.0)" ><path d="M-8,2 L1,-3 L6,3 L-3,8 Z" fill="#f08020" stroke="#8a3a00" stroke-width="0.900"/><path d="M-8,2 L-3,8 L-6,8 Z" fill="#f8c040"/><path d="M0.0,-8.0 h8 l-3,3.500 v4.500 l-2,-1 v-3.500 Z" fill="#b4dafc" stroke="#1a2cc0" stroke-width="1" stroke-linejoin="round"/></g><g transform="translate(316.0,989.0)" ><path d="M-7,-2 h8 v10 h-8 Z" fill="#f4d020" stroke="#8a6a00" stroke-width="1"/><path d="M-7,-2 l3,-3 h4 M1,8 l3,-3 v-6" fill="none" stroke="#8a6a00" stroke-width="1"/><path d="M0.0,-8.0 h8 l-3,3.500 v4.500 l-2,-1 v-3.500 Z" fill="#b4dafc" stroke="#1a2cc0" stroke-width="1" stroke-linejoin="round"/></g><g transform="translate(339.0,989.0)" ><path d="M-8,-7 L6,8" stroke="#1a8a2a" stroke-width="1.800" stroke-dasharray="2.500 1.500"/><path d="M0.0,-8.0 h8 l-3,3.500 v4.500 l-2,-1 v-3.500 Z" fill="#b4dafc" stroke="#1a2cc0" stroke-width="1" stroke-linejoin="round"/></g><g transform="translate(362.0,989.0)" ><path d="M-8,-7 L6,8" stroke="#1a8a2a" stroke-width="1.200" stroke-dasharray="2.500 1.500"/><path d="M-7,3 L-2,-2 L3,3 L-2,8 Z" fill="#f4e020" stroke="#8a7a00" stroke-width="0.900"/><path d="M0.0,-8.0 h8 l-3,3.500 v4.500 l-2,-1 v-3.500 Z" fill="#b4dafc" stroke="#1a2cc0" stroke-width="1" stroke-linejoin="round"/></g><g transform="translate(385.0,989.0)" ><path d="M-5,1 V8 M-8.500,4.500 H-1.500 M-7.500,2 L-2.500,7 M-2.500,2 L-7.500,7" stroke="#1a2cc0" stroke-width="0.900"/><path d="M0.0,-8.0 h8 l-3,3.500 v4.500 l-2,-1 v-3.500 Z" fill="#b4dafc" stroke="#1a2cc0" stroke-width="1" stroke-linejoin="round"/></g><g transform="translate(408.0,989.0)" ><path d="M-7,-2 V7 H3" fill="none" stroke="#1a1c9c" stroke-width="2"/><path d="M-5,4 L2,-1 L3.500,1 L-3.500,6 Z" fill="#f0c020" stroke="#8a5a10" stroke-width="0.600"/><path d="M0.0,-8.0 h8 l-3,3.500 v4.500 l-2,-1 v-3.500 Z" fill="#b4dafc" stroke="#1a2cc0" stroke-width="1" stroke-linejoin="round"/></g><g transform="translate(431.0,989.0)" ><rect x="-8" y="-7" width="3" height="14" fill="#2ac83a" stroke="#0a5a1a" stroke-width="0.900"/><path d="M-5,6 H5" stroke="#1a2cc0" stroke-width="1.600"/><rect x="4" y="4" width="3.500" height="3.500" fill="#1a2cc0"/><path d="M0.0,-8.0 h8 l-3,3.500 v4.500 l-2,-1 v-3.500 Z" fill="#b4dafc" stroke="#1a2cc0" stroke-width="1" stroke-linejoin="round"/></g><g transform="translate(454.0,989.0)" ><path d="M-8,-6 L5,7" stroke="#111" stroke-width="2"/><circle cx="-2" cy="0" r="2.800" fill="#f0c020" stroke="#8a5a10" stroke-width="0.800"/><path d="M0.0,-8.0 h8 l-3,3.500 v4.500 l-2,-1 v-3.500 Z" fill="#b4dafc" stroke="#1a2cc0" stroke-width="1" stroke-linejoin="round"/></g><g transform="translate(477.0,989.0)" ><circle cx="-2" cy="1" r="6" fill="none" stroke="#1a1c9c" stroke-width="1.400" stroke-dasharray="4 2"/><path d="M-2,-3 v8 M-6,1 h8" stroke="#1a1c9c" stroke-width="1.800"/><path d="M0.0,-8.0 h8 l-3,3.500 v4.500 l-2,-1 v-3.500 Z" fill="#b4dafc" stroke="#1a2cc0" stroke-width="1" stroke-linejoin="round"/></g><g transform="translate(500.0,989.0)" ><rect x="-8" y="-2" width="5" height="4" fill="#fff" stroke="#1a1c9c" stroke-width="1"/><rect x="-8" y="3" width="5" height="4" fill="#fff" stroke="#1a1c9c" stroke-width="1"/><path d="M-3,0 h9 v6 h-9" fill="none" stroke="#1a1c9c" stroke-width="1.300"/><path d="M1,3 h3" stroke="#1a1c9c" stroke-width="1.500"/><path d="M0.0,-8.0 h8 l-3,3.500 v4.500 l-2,-1 v-3.500 Z" fill="#b4dafc" stroke="#1a2cc0" stroke-width="1" stroke-linejoin="round"/></g><g transform="translate(523.0,989.0)" ><path d="M-8,3 L0,-4 L4,0 L-4,7 Z" fill="none" stroke="#1a2cc0" stroke-width="2"/><path d="M-6,0 l-2,3 M-1,-5 h3" stroke="#1a2cc0" stroke-width="1.200"/><path d="M0.0,-8.0 h8 l-3,3.500 v4.500 l-2,-1 v-3.500 Z" fill="#b4dafc" stroke="#1a2cc0" stroke-width="1" stroke-linejoin="round"/></g><g transform="translate(546.0,989.0)" ><path d="M-8,2 L-5,8 L1,-3" fill="none" stroke="#333" stroke-width="1.300"/><path d="M-8,2 L-5,8 L-3.500,3 Z" fill="#999" stroke="#333" stroke-width="0.600"/><path d="M0.0,-8.0 h8 l-3,3.500 v4.500 l-2,-1 v-3.500 Z" fill="#b4dafc" stroke="#1a2cc0" stroke-width="1" stroke-linejoin="round"/></g><g transform="translate(569.0,989.0)" ><rect x="-8" y="-2" width="14" height="9" fill="#f4f4f4" stroke="#222" stroke-width="1.200"/><rect x="-6" y="0" width="2.500" height="2" fill="none" stroke="#222" stroke-width="0.700"/><rect x="-6" y="3.500" width="2.500" height="2" fill="none" stroke="#222" stroke-width="0.700"/><circle cx="2" cy="3" r="2.600" fill="none" stroke="#222" stroke-width="0.900"/><path d="M0.0,-8.0 h8 l-3,3.500 v4.500 l-2,-1 v-3.500 Z" fill="#b4dafc" stroke="#1a2cc0" stroke-width="1" stroke-linejoin="round"/></g><g transform="translate(592.0,989.0)" ><circle cx="-1" cy="2" r="5.500" fill="#f4f4f4" stroke="#222" stroke-width="1.300"/><path d="M-3,4.500 v-5 l4,5 v-5" fill="none" stroke="#222" stroke-width="1"/><path d="M-5,6 l-3,3" stroke="#222" stroke-width="1.600"/><path d="M0.0,-8.0 h8 l-3,3.500 v4.500 l-2,-1 v-3.500 Z" fill="#b4dafc" stroke="#1a2cc0" stroke-width="1" stroke-linejoin="round"/></g><g transform="translate(615.0,989.0)" ><path d="M-8,-4 V8" stroke="#222" stroke-width="1.500"/><rect x="-6" y="-3" width="12" height="10" fill="#f4f4f4" stroke="#222" stroke-width="1"/><text x="0" y="6" text-anchor="middle" font-family="Liberation Serif, serif" font-size="10" font-weight="bold" fill="#111">A</text><path d="M0.0,-8.0 h8 l-3,3.500 v4.500 l-2,-1 v-3.500 Z" fill="#b4dafc" stroke="#1a2cc0" stroke-width="1" stroke-linejoin="round"/></g><g transform="translate(638.0,989.0)" ><path d="M-8,7 L-3,-1 H3 L7,-5 M-4,4 L6,1" fill="none" stroke="#222" stroke-width="1.600"/><path d="M0.0,-8.0 h8 l-3,3.500 v4.500 l-2,-1 v-3.500 Z" fill="#b4dafc" stroke="#1a2cc0" stroke-width="1" stroke-linejoin="round"/></g><g transform="translate(661.0,989.0)" ><path d="M-7,-5 V1 H7 M-7,-5 L6,1" fill="#6a7ce0" stroke="#222" stroke-width="1"/><path d="M-6,2 q2,3 0,6 M-2,2 q2,3 0,6 M2,2 q2,3 0,6 M6,2 q2,3 0,6" fill="none" stroke="#222" stroke-width="1"/><path d="M0.0,-8.0 h8 l-3,3.500 v4.500 l-2,-1 v-3.500 Z" fill="#b4dafc" stroke="#1a2cc0" stroke-width="1" stroke-linejoin="round"/></g><g transform="translate(684.0,989.0)" ><circle cx="-1" cy="2" r="5.500" fill="#f4f4f4" stroke="#555" stroke-width="1.200"/><text x="-1" y="5.500" text-anchor="middle" font-family="Liberation Sans, sans-serif" font-size="8" fill="#333">A</text><path d="M-5,6 l-3,3" stroke="#555" stroke-width="1.500"/><path d="M0.0,-8.0 h8 l-3,3.500 v4.500 l-2,-1 v-3.500 Z" fill="#b4dafc" stroke="#1a2cc0" stroke-width="1" stroke-linejoin="round"/></g><g transform="translate(707.0,989.0)" ><path d="M-5,-7 V4 L-2,8 L1,4 V-2" fill="none" stroke="#1a1c9c" stroke-width="1.200"/><path d="M-7,-7 V4" stroke="#1a1c9c" stroke-width="1" stroke-dasharray="1.500 1.200"/><path d="M0.0,-8.0 h8 l-3,3.500 v4.500 l-2,-1 v-3.500 Z" fill="#b4dafc" stroke="#1a2cc0" stroke-width="1" stroke-linejoin="round"/></g><g transform="translate(730.0,989.0)" ><rect x="-8" y="-4" width="12" height="12" fill="#f8f8f8" stroke="#222" stroke-width="1.100"/><text x="-2.500" y="6.500" text-anchor="middle" font-family="Liberation Serif, serif" font-size="10" font-weight="bold" fill="#111">A</text><path d="M0.0,-8.0 h8 l-3,3.500 v4.500 l-2,-1 v-3.500 Z" fill="#b4dafc" stroke="#1a2cc0" stroke-width="1" stroke-linejoin="round"/></g><g transform="translate(753.0,989.0)" ><circle cx="-2" cy="2" r="6" fill="#f4f4f4" stroke="#111" stroke-width="1.100"/><path d="M-2,2 V-4 A6,6 0 0 0 -8,2 Z M-2,2 V8 A6,6 0 0 0 4,2 Z" fill="#111"/><path d="M0.0,-8.0 h8 l-3,3.500 v4.500 l-2,-1 v-3.500 Z" fill="#b4dafc" stroke="#1a2cc0" stroke-width="1" stroke-linejoin="round"/></g><g transform="translate(776.0,989.0)" ><path d="M-8,5 H2" stroke="#111" stroke-width="2"/><rect x="2" y="2.500" width="5" height="5" fill="#2ac83a" stroke="#0a5a1a" stroke-width="0.900"/><path d="M0.0,-8.0 h8 l-3,3.500 v4.500 l-2,-1 v-3.500 Z" fill="#b4dafc" stroke="#1a2cc0" stroke-width="1" stroke-linejoin="round"/></g><g transform="translate(799.0,989.0)" ><path d="M-8,5 H7" stroke="#111" stroke-width="2"/><rect x="-3" y="2.500" width="5" height="5" fill="#2ac83a" stroke="#0a5a1a" stroke-width="0.900"/><path d="M0.0,-8.0 h8 l-3,3.500 v4.500 l-2,-1 v-3.500 Z" fill="#b4dafc" stroke="#1a2cc0" stroke-width="1" stroke-linejoin="round"/></g>
</svg>

</div>
<div id="status">
<span style="left:2px;letter-spacing:-0.2px">SolidWorks Premium 2014 x64 Edition</span>
<span style="left:758px;letter-spacing:-0.2px">Определенный</span>
<span style="left:859px;letter-spacing:-0.18px">Редактируется Сборка</span>
<span style="left:1034px">Настройка</span>
<svg style="left:-62px;top:-1006px" width="1280" height="1024" viewBox="0 0 1280 1024">
<path d="M1172,1018 h6 l-3,-3.500 Z" fill="#333"/><rect x="1196.500" y="1009.500" width="12" height="12" fill="#f8f8f8" stroke="#1a3ca0" stroke-width="1.300"/><text x="1202.500" y="1020" text-anchor="middle" font-family="Liberation Sans, sans-serif" font-size="11" font-weight="bold" fill="#1a9a2a">?</text><g transform="translate(1267.0,1016.0)" ><path d="M-8,3 L2,-7 L8,-4 L7,1 L-2,9 Z" fill="#f0c020" stroke="#8a5a00" stroke-width="1"/><circle cx="4" cy="-2" r="1.500" fill="#fff" stroke="#8a5a00" stroke-width="0.600"/><path d="M-4,3 l5,-5 M-2,5 l5,-5" stroke="#8a5a00" stroke-width="0.800"/></g>
</svg>

</div>
</body>
</html>
